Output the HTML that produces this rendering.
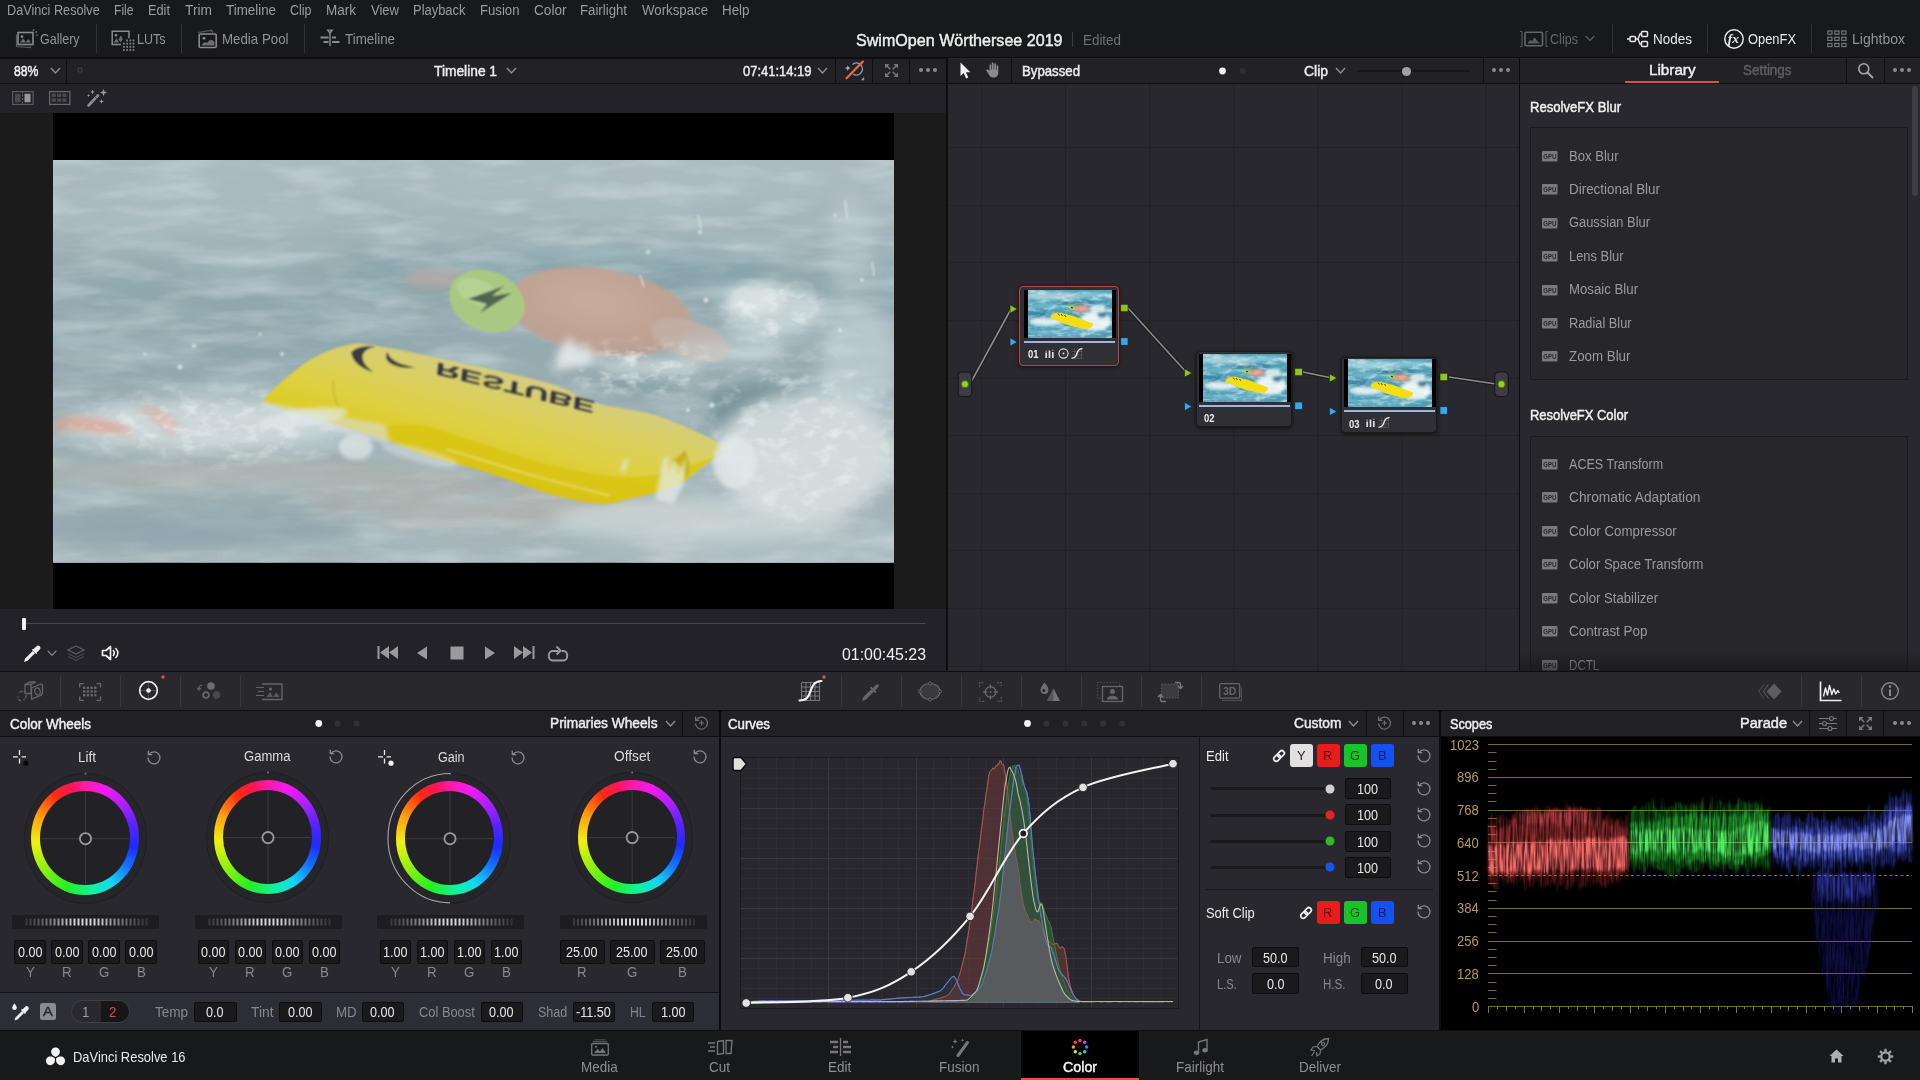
<!DOCTYPE html>
<html lang="en">
<head>
<meta charset="utf-8">
<title>DaVinci Resolve - SwimOpen Wörthersee 2019</title>
<style>
*{box-sizing:border-box;margin:0;padding:0}
html,body{width:1920px;height:1080px;overflow:hidden;background:#18191a;}
body{font-family:"Liberation Sans","DejaVu Sans",sans-serif;font-size:14px;color:#9a9a9d;position:relative;-webkit-font-smoothing:antialiased}
.abs{position:absolute}
.t{position:absolute;white-space:nowrap;line-height:20px;height:20px}
.w{color:#e6e6e6}
.b{font-weight:bold}
.vsep{position:absolute;width:1px;background:#0e0e10}
.hsep{position:absolute;height:1px;background:#0e0e10}
svg{position:absolute;overflow:visible}
.box{position:absolute;background:#18181b;border:1px solid #0c0c0e;border-radius:2px;color:#e3e3e3;text-align:center;font-size:14px;line-height:19px;height:21px}
</style>
</head>
<body><div id="app" style="position:absolute;left:0;top:0;width:1920px;height:1080px;will-change:transform">
<!-- 10_top -->
<div class="abs" style="left:0px;top:0px;width:1920px;height:57px;background:#18191a;"></div>
<div class="abs" style="left:0px;top:57px;width:1920px;height:2px;background:#0e0e11;"></div>
<div class="t" style="left:7.2px;top:0.0px;font-size:14px;color:#9c9c9e;transform:scaleX(0.905);transform-origin:0 50%;">DaVinci Resolve</div>
<div class="t" style="left:114.0px;top:0.0px;font-size:14px;color:#9c9c9e;transform:scaleX(0.864);transform-origin:0 50%;">File</div>
<div class="t" style="left:148.0px;top:0.0px;font-size:14px;color:#9c9c9e;transform:scaleX(0.912);transform-origin:0 50%;">Edit</div>
<div class="t" style="left:184.5px;top:0.0px;font-size:14px;color:#9c9c9e;transform:scaleX(0.983);transform-origin:0 50%;">Trim</div>
<div class="t" style="left:225.5px;top:0.0px;font-size:14px;color:#9c9c9e;transform:scaleX(0.955);transform-origin:0 50%;">Timeline</div>
<div class="t" style="left:290.0px;top:0.0px;font-size:14px;color:#9c9c9e;transform:scaleX(0.891);transform-origin:0 50%;">Clip</div>
<div class="t" style="left:326.0px;top:0.0px;font-size:14px;color:#9c9c9e;transform:scaleX(0.964);transform-origin:0 50%;">Mark</div>
<div class="t" style="left:370.5px;top:0.0px;font-size:14px;color:#9c9c9e;transform:scaleX(0.931);transform-origin:0 50%;">View</div>
<div class="t" style="left:413.0px;top:0.0px;font-size:14px;color:#9c9c9e;transform:scaleX(0.924);transform-origin:0 50%;">Playback</div>
<div class="t" style="left:480.0px;top:0.0px;font-size:14px;color:#9c9c9e;transform:scaleX(0.940);transform-origin:0 50%;">Fusion</div>
<div class="t" style="left:533.5px;top:0.0px;font-size:14px;color:#9c9c9e;transform:scaleX(0.971);transform-origin:0 50%;">Color</div>
<div class="t" style="left:580.0px;top:0.0px;font-size:14px;color:#9c9c9e;transform:scaleX(0.944);transform-origin:0 50%;">Fairlight</div>
<div class="t" style="left:642.0px;top:0.0px;font-size:14px;color:#9c9c9e;transform:scaleX(0.946);transform-origin:0 50%;">Workspace</div>
<div class="t" style="left:722.0px;top:0.0px;font-size:14px;color:#9c9c9e;transform:scaleX(0.955);transform-origin:0 50%;">Help</div>
<div class="t" style="left:40.3px;top:29.0px;font-size:14.5px;color:#939396;transform:scaleX(0.862);transform-origin:0 50%;">Gallery</div>
<div class="t" style="left:137.0px;top:29.0px;font-size:14.5px;color:#939396;transform:scaleX(0.863);transform-origin:0 50%;">LUTs</div>
<div class="t" style="left:222.0px;top:29.0px;font-size:14.5px;color:#939396;transform:scaleX(0.917);transform-origin:0 50%;">Media Pool</div>
<div class="t" style="left:344.5px;top:29.0px;font-size:14.5px;color:#939396;transform:scaleX(0.922);transform-origin:0 50%;">Timeline</div>
<div class="abs" style="left:96px;top:24px;width:1px;height:29px;background:#343437;"></div>
<div class="abs" style="left:181px;top:24px;width:1px;height:29px;background:#343437;"></div>
<div class="abs" style="left:304px;top:24px;width:1px;height:29px;background:#343437;"></div>
<div class="abs" style="left:1612px;top:24px;width:1px;height:29px;background:#343437;"></div>
<div class="abs" style="left:1707px;top:24px;width:1px;height:29px;background:#343437;"></div>
<div class="abs" style="left:1811px;top:24px;width:1px;height:29px;background:#343437;"></div>
<svg style="left:14px;top:28px;" width="24" height="21" viewBox="0 0 24 21"><path d="M2.5 6.5v12l14 1.2v-1.5" fill="none" stroke="#5a5a5d" stroke-width="1.2"/><rect x="4" y="4.5" width="15" height="12" fill="none" stroke="#8a8a8d" stroke-width="1.6"/><circle cx="8" cy="8.6" r="1.3" fill="#8a8a8d"/><path d="M6 14.5l3.2-4 2.6 4zM11.5 14.5l2.8-3.5 2.6 3.5z" fill="#6e6e71"/><circle cx="19.5" cy="2" r="0.9" fill="#6e6e71"/><circle cx="22.3" cy="4" r="0.9" fill="#6e6e71"/><circle cx="22.8" cy="7.2" r="0.9" fill="#5e5e61"/></svg>
<svg style="left:111px;top:30px;" width="24" height="20" viewBox="0 0 24 20"><path d="M10 14.5H1.2V1.2H18v7" fill="none" stroke="#8a8a8d" stroke-width="1.5"/><circle cx="5" cy="5.2" r="1.3" fill="#8a8a8d"/><path d="M2.8 12.5l2.6-4.2 2.6 4.2zM7.5 9.5l2.3-4 2 3.5-2 3.5z" fill="#6e6e71"/><rect x="12" y="12.7" width="1.8" height="1.8" fill="#808083"/><rect x="12" y="15.9" width="1.8" height="1.8" fill="#808083"/><rect x="12" y="19.1" width="1.8" height="1.8" fill="#808083"/><rect x="15.2" y="9.5" width="1.8" height="1.8" fill="#808083"/><rect x="15.2" y="12.7" width="1.8" height="1.8" fill="#808083"/><rect x="15.2" y="15.9" width="1.8" height="1.8" fill="#808083"/><rect x="15.2" y="19.1" width="1.8" height="1.8" fill="#808083"/><rect x="18.4" y="9.5" width="1.8" height="1.8" fill="#808083"/><rect x="18.4" y="12.7" width="1.8" height="1.8" fill="#808083"/><rect x="18.4" y="15.9" width="1.8" height="1.8" fill="#808083"/><rect x="18.4" y="19.1" width="1.8" height="1.8" fill="#808083"/><rect x="21.6" y="9.5" width="1.8" height="1.8" fill="#808083"/><rect x="21.6" y="12.7" width="1.8" height="1.8" fill="#808083"/><rect x="21.6" y="15.9" width="1.8" height="1.8" fill="#808083"/><rect x="21.6" y="19.1" width="1.8" height="1.8" fill="#808083"/></svg>
<svg style="left:196px;top:28px;" width="24" height="22" viewBox="0 0 24 22"><path d="M2 4.5l14-2.2.6 2.5" fill="none" stroke="#5a5a5d" stroke-width="1.2"/><rect x="3.2" y="6" width="17" height="13.5" rx="1" fill="none" stroke="#8a8a8d" stroke-width="1.6"/><circle cx="8" cy="10.3" r="1.4" fill="#8a8a8d"/><path d="M5.2 17.5c2-3 4-4.2 6-2.6 2-3.4 4.5-4 7.2-1v3.6z" fill="#6e6e71"/></svg>
<svg style="left:320px;top:29px;" width="20" height="20" viewBox="0 0 20 20"><path d="M10 2v15" stroke="#8a8a8d" stroke-width="1.4"/><path d="M7.6 1.2h4.8l-2.4 3z" fill="none" stroke="#8a8a8d" stroke-width="1.2"/><path d="M0.5 8.5h8M12 8.5h4M3.5 13h5M12 13h7.5" stroke="#8a8a8d" stroke-width="2.2"/></svg>
<div class="t" style="left:855.5px;top:29.5px;font-size:16.5px;color:#ededed;transform:scaleX(0.975);transform-origin:0 50%;-webkit-text-stroke:0.45px;">SwimOpen Wörthersee 2019</div>
<div class="abs" style="left:1072px;top:32px;width:1px;height:15px;background:#3a3a3d;"></div>
<div class="t" style="left:1082.5px;top:30.0px;font-size:14px;color:#707073;transform:scaleX(0.957);transform-origin:0 50%;">Edited</div>
<div class="t" style="left:1549.5px;top:29.0px;font-size:14.5px;color:#66666a;transform:scaleX(0.869);transform-origin:0 50%;">Clips</div>
<svg style="left:1519px;top:30px;" width="30" height="18" viewBox="0 0 30 18"><path d="M3 1.5v15M1 1.5h2M1 16.5h2M27 1.5v15M27 1.5h2M27 16.5h2" stroke="#58585b" stroke-width="1.2" fill="none"/><rect x="6" y="2.2" width="17.5" height="13.6" rx="1" fill="none" stroke="#66666a" stroke-width="1.6"/><path d="M8.5 13.5c2-4 3.5-4 5-2 .5-3 2-5.5 3.5-2.5s2.500 3 4 4.500z" fill="#5c5c5f"/></svg>
<svg style="left:1585px;top:35px;" width="10" height="7" viewBox="0 0 10 7"><path d="M0.7 1l4.300 4.500 4.300-4.500" fill="none" stroke="#5a5a5d" stroke-width="1.4"/></svg>
<div class="t" style="left:1652.5px;top:29.0px;font-size:14.5px;color:#e8e8e8;transform:scaleX(0.931);transform-origin:0 50%;">Nodes</div>
<svg style="left:1626px;top:29px;" width="24" height="20" viewBox="0 0 24 20"><path d="M1 10h3M9.500 10h2.500l2-5h1.500M12 10l2 5h1.500" fill="none" stroke="#e8e8e8" stroke-width="1.4"/><rect x="4" y="7.5" width="5.500" height="5" rx="1" fill="none" stroke="#e8e8e8" stroke-width="1.5"/><rect x="15.500" y="2.500" width="6" height="5" rx="1" fill="none" stroke="#e8e8e8" stroke-width="1.5"/><rect x="15.500" y="12.500" width="6" height="5" rx="1" fill="none" stroke="#e8e8e8" stroke-width="1.5"/></svg>
<div class="t" style="left:1747.5px;top:29.0px;font-size:14.5px;color:#e8e8e8;transform:scaleX(0.889);transform-origin:0 50%;">OpenFX</div>
<svg style="left:1723px;top:28px;" width="22" height="22" viewBox="0 0 22 22"><circle cx="11" cy="11" r="9.200" fill="none" stroke="#e8e8e8" stroke-width="1.500"/><text x="4.800" y="15.300" font-family="Liberation Serif,serif" font-style="italic" font-weight="bold" font-size="13.500" fill="#e8e8e8">fx</text></svg>
<div class="t" style="left:1851.5px;top:29.0px;font-size:14.5px;color:#939396;transform:scaleX(0.967);transform-origin:0 50%;">Lightbox</div>
<svg style="left:1827px;top:30px;" width="20" height="18" viewBox="0 0 20 18"><rect x="0.8" y="1" width="4.200" height="3.200" fill="none" stroke="#7e7e81" stroke-width="1.100"/><rect x="0.8" y="7.2" width="4.200" height="3.200" fill="none" stroke="#7e7e81" stroke-width="1.100"/><rect x="0.8" y="13.4" width="4.200" height="3.200" fill="none" stroke="#7e7e81" stroke-width="1.100"/><rect x="7.8" y="1" width="4.200" height="3.200" fill="none" stroke="#7e7e81" stroke-width="1.100"/><rect x="7.8" y="7.2" width="4.200" height="3.200" fill="none" stroke="#7e7e81" stroke-width="1.100"/><rect x="7.8" y="13.4" width="4.200" height="3.200" fill="none" stroke="#7e7e81" stroke-width="1.100"/><rect x="14.8" y="1" width="4.200" height="3.200" fill="none" stroke="#7e7e81" stroke-width="1.100"/><rect x="14.8" y="7.2" width="4.200" height="3.200" fill="none" stroke="#7e7e81" stroke-width="1.100"/><rect x="14.8" y="13.4" width="4.200" height="3.200" fill="none" stroke="#7e7e81" stroke-width="1.100"/></svg>
<!-- 20_viewer -->
<div class="abs" style="left:0px;top:59px;width:946px;height:612px;background:#1b1b1b;"></div>
<div class="abs" style="left:0px;top:59px;width:946px;height:24px;background:#212126;"></div>
<div class="abs" style="left:0px;top:83px;width:946px;height:1px;background:#0f0f11;"></div>
<div class="abs" style="left:0px;top:84px;width:946px;height:29px;background:#222228;"></div>
<div class="abs" style="left:53px;top:113px;width:841px;height:496px;background:#000;"></div>
<div class="abs" style="left:0px;top:609px;width:946px;height:62px;background:#222228;"></div>
<div class="abs" style="left:946px;top:59px;width:2px;height:612px;background:#0d0d10;"></div>
<div class="t" style="left:13.5px;top:60.5px;font-size:14px;color:#f0f0f0;transform:scaleX(0.874);transform-origin:0 50%;-webkit-text-stroke:0.45px;">88%</div>
<svg style="left:50px;top:67px;" width="11" height="8" viewBox="0 0 11 8"><path d="M1 1l4.500 5 4.500-5" fill="none" stroke="#8e8e92" stroke-width="1.400"/></svg>
<div class="abs" style="left:66px;top:58px;width:1px;height:25px;background:#0f0f11;"></div>
<svg style="left:76px;top:66px;" width="8" height="8" viewBox="0 0 8 8"><circle cx="4" cy="4.200" r="2" fill="none" stroke="#3c3c41" stroke-width="1.300"/></svg>
<div class="t" style="left:433.5px;top:60.5px;font-size:14px;color:#ededed;transform:scaleX(0.984);transform-origin:0 50%;-webkit-text-stroke:0.45px;">Timeline 1</div>
<svg style="left:506px;top:67px;" width="11" height="8" viewBox="0 0 11 8"><path d="M1 1l4.500 5 4.500-5" fill="none" stroke="#8e8e92" stroke-width="1.400"/></svg>
<div class="t" style="left:742.5px;top:60.5px;font-size:14px;color:#ededed;transform:scaleX(0.926);transform-origin:0 50%;-webkit-text-stroke:0.45px;">07:41:14:19</div>
<svg style="left:817px;top:67px;" width="11" height="8" viewBox="0 0 11 8"><path d="M1 1l4.500 5 4.500-5" fill="none" stroke="#8e8e92" stroke-width="1.400"/></svg>
<div class="abs" style="left:835px;top:58px;width:1px;height:25px;background:#0f0f11;"></div>
<div class="abs" style="left:872px;top:58px;width:1px;height:25px;background:#0f0f11;"></div>
<div class="abs" style="left:909px;top:58px;width:1px;height:25px;background:#0f0f11;"></div>
<svg style="left:844px;top:60px;" width="22" height="22" viewBox="0 0 22 22"><path d="M8.500 4.500a6 6 0 1 1 .5 9.500" fill="none" stroke="#9a9a9e" stroke-width="1.500"/><path d="M3.800 5.300l.8 2 2 .8-2 .8-.8 2-.8-2-2-.8 2-.8z" fill="#b0b0b4"/><path d="M2.500 18.200L18.800 1.600" stroke="#e0664c" stroke-width="2.300" stroke-linecap="round"/><path d="M20.200 16.800v3.400h-3.400z" fill="#9a9a9e"/></svg>
<svg style="left:885px;top:64px;" width="13" height="13" viewBox="0 0 13 13"><path d="M0 4.500V0h4.500zM8.500 0H13v4.500zM13 8.500V13H8.500zM4.500 13H0V8.500z" fill="#77777b"/><path d="M1.500 1.500l3.800 3.800M11.500 1.500l-3.800 3.800M11.500 11.500l-3.800-3.800M1.500 11.500l3.800-3.800" stroke="#77777b" stroke-width="1.500"/></svg>
<svg style="left:918.3px;top:67.2px;" width="20" height="6" viewBox="0 0 20 6"><circle cx="3" cy="3" r="2" fill="#8c8c90"/><circle cx="10" cy="3" r="2" fill="#8c8c90"/><circle cx="17" cy="3" r="2" fill="#8c8c90"/></svg>
<svg style="left:12px;top:91px;" width="22" height="14" viewBox="0 0 22 14"><rect x="0.600" y="0.600" width="20.500" height="12.800" fill="none" stroke="#5a5a5e" stroke-width="1.200"/><rect x="3" y="2.800" width="5.500" height="8.400" fill="#4a4a4e"/><rect x="12.500" y="2.800" width="6" height="8.400" fill="#9a9a9e"/><path d="M10.500 0v14" stroke="#6a6a6e" stroke-width="1" stroke-dasharray="2 1.500"/></svg>
<svg style="left:49px;top:91px;" width="22" height="14" viewBox="0 0 22 14"><rect x="0.600" y="0.600" width="20.300" height="12.800" fill="none" stroke="#6a6a6e" stroke-width="1.200"/><rect x="2.8" y="2.6" width="4" height="3.300" fill="#4c4c50"/><rect x="2.8" y="7.4" width="4" height="3.300" fill="#4c4c50"/><rect x="8.1" y="2.6" width="4" height="3.300" fill="#4c4c50"/><rect x="8.1" y="7.4" width="4" height="3.300" fill="#4c4c50"/><rect x="13.4" y="2.6" width="4" height="3.300" fill="#4c4c50"/><rect x="13.4" y="7.4" width="4" height="3.300" fill="#4c4c50"/></svg>
<svg style="left:86px;top:88px;" width="22" height="20" viewBox="0 0 22 20"><path d="M2.500 17.500L12 7.500" stroke="#8e8e92" stroke-width="2.600" stroke-linecap="round"/><path d="M9.500 9.300l1.300 1.300" stroke="#222226" stroke-width="1"/><path d="M17.500 1l1 2.600 2.600 1-2.600 1-1 2.600-1-2.600-2.600-1 2.600-1zM6.500 1.500l.7 1.700 1.700.7-1.700.7-.7 1.700-.7-1.700-1.700-.7 1.700-.7zM15.500 11l.7 1.700 1.700.7-1.700.7-.7 1.700-.7-1.700-1.700-.7 1.700-.7zM2.500 6l.5 1 1 .5-1 .5-.5 1-.5-1-1-.5 1-.5z" fill="#9a9a9e"/></svg>
<svg style="left:0;top:0" width="1920" height="700" viewBox="0 0 1920 700"><defs>
<filter id="b2" x="-20%" y="-20%" width="140%" height="140%"><feGaussianBlur stdDeviation="2"/></filter>
<filter id="b4" x="-30%" y="-30%" width="160%" height="160%"><feGaussianBlur stdDeviation="4"/></filter>
<filter id="b8" x="-40%" y="-40%" width="180%" height="180%"><feGaussianBlur stdDeviation="8"/></filter>
<filter id="b14" x="-50%" y="-50%" width="200%" height="200%"><feGaussianBlur stdDeviation="14"/></filter>
<filter id="b1" x="-10%" y="-10%" width="120%" height="120%"><feGaussianBlur stdDeviation="0.900"/></filter>
<filter id="nz" x="0" y="0" width="100%" height="100%"><feTurbulence type="fractalNoise" baseFrequency="0.010 0.045" numOctaves="4" seed="11"/><feColorMatrix values="0 0 0 0 0.40  0 0 0 0 0.52  0 0 0 0 0.56  1.6 0 0 0 -0.62"/></filter>
<filter id="nz2" x="0" y="0" width="100%" height="100%"><feTurbulence type="fractalNoise" baseFrequency="0.014 0.06" numOctaves="3" seed="5"/><feColorMatrix values="0 0 0 0 0.80  0 0 0 0 0.86  0 0 0 0 0.87  1.8 0 0 0 -0.80"/></filter>
<filter id="foam" x="0" y="0" width="100%" height="100%"><feTurbulence type="fractalNoise" baseFrequency="0.05 0.08" numOctaves="3" seed="9"/><feColorMatrix values="0 0 0 0 0.90  0 0 0 0 0.93  0 0 0 0 0.93  3.2 0 0 0 -1.55"/></filter>
<linearGradient id="wg" x1="0" y1="0" x2="0" y2="1"><stop offset="0" stop-color="#adbbbe"/><stop offset="0.18" stop-color="#a3b4b9"/><stop offset="0.32" stop-color="#93a9af"/><stop offset="0.55" stop-color="#98acb2"/><stop offset="0.8" stop-color="#a2b2b6"/><stop offset="1" stop-color="#a9b7ba"/></linearGradient>
<linearGradient id="yg" gradientUnits="userSpaceOnUse" x1="520" y1="370" x2="490" y2="480"><stop offset="0" stop-color="#d3cd84"/><stop offset="0.25" stop-color="#d9cf68"/><stop offset="0.6" stop-color="#dfd042"/><stop offset="0.85" stop-color="#dccb22"/><stop offset="1" stop-color="#c8b71e"/></linearGradient>
<radialGradient id="sk" cx="0.45" cy="0.4" r="0.65"><stop offset="0" stop-color="#c9ab9a"/><stop offset="0.7" stop-color="#bfa293"/><stop offset="1" stop-color="#b3a29a"/></radialGradient>
<clipPath id="pc"><rect x="53" y="160" width="841" height="402.700"/></clipPath>
<radialGradient id="fm"><stop offset="0" stop-color="#fff"/><stop offset="0.6" stop-color="#fff" stop-opacity="0.7"/><stop offset="1" stop-color="#fff" stop-opacity="0"/></radialGradient><mask id="fc2"><ellipse cx="215" cy="425" rx="175" ry="48" fill="url(#fm)"/></mask><mask id="fc3"><ellipse cx="640" cy="368" rx="100" ry="34" fill="url(#fm)"/></mask><mask id="fc4"><ellipse cx="775" cy="312" rx="62" ry="38" fill="url(#fm)"/></mask><mask id="fc1"><ellipse cx="800" cy="440" rx="120" ry="105" fill="url(#fm)"/></mask>
</defs>
<g clip-path="url(#pc)">
<rect x="53" y="160" width="841" height="403" fill="url(#wg)"/>
<g filter="url(#b14)">
<ellipse cx="560" cy="272" rx="230" ry="16" fill="#7c9fa6" opacity="0.850"/>
<ellipse cx="800" cy="290" rx="110" ry="18" fill="#86a3a9" opacity="0.600"/>
<ellipse cx="240" cy="300" rx="190" ry="22" fill="#8da6ad" opacity="0.700"/>
<ellipse cx="180" cy="215" rx="150" ry="14" fill="#b4c1c4" opacity="0.600"/>
<ellipse cx="640" cy="185" rx="260" ry="14" fill="#b2bfc2" opacity="0.600"/>
<ellipse cx="240" cy="360" rx="170" ry="18" fill="#8aa3aa" opacity="0.700"/>
<ellipse cx="220" cy="520" rx="190" ry="26" fill="#93a8af" opacity="0.750"/>
<ellipse cx="470" cy="500" rx="170" ry="22" fill="#b3b1ab" opacity="0.700"/>
<ellipse cx="760" cy="540" rx="150" ry="20" fill="#b5c2c4" opacity="0.700"/>
</g>
<rect x="53" y="160" width="841" height="403" filter="url(#nz)"/>
<rect x="53" y="160" width="841" height="403" filter="url(#nz2)" opacity="0.450"/>
<g filter="url(#b8)"><ellipse cx="250" cy="474" rx="240" ry="13" fill="#b3b2ac" opacity="0.550"/><ellipse cx="560" cy="512" rx="180" ry="12" fill="#b4b3ae" opacity="0.500"/><ellipse cx="180" cy="530" rx="170" ry="16" fill="#8da4ac" opacity="0.700"/></g>
<!-- dark water patches -->
<g filter="url(#b8)">
<ellipse cx="760" cy="410" rx="55" ry="30" fill="#6f8c93" opacity="0.850"/>
<ellipse cx="640" cy="380" rx="40" ry="14" fill="#7d999f" opacity="0.600"/>
<ellipse cx="330" cy="430" rx="50" ry="10" fill="#7f979d" opacity="0.600"/>
<ellipse cx="560" cy="470" rx="90" ry="9" fill="#7c969c" opacity="0.500"/>
</g>
<!-- swimmer -->
<g filter="url(#b4)">
<ellipse cx="435" cy="279" rx="30" ry="11" fill="#b4a7a2" opacity="0.750"/>
</g>
<g filter="url(#b2)">
<ellipse cx="600" cy="312" rx="93" ry="43" fill="url(#sk)" transform="rotate(9 600 312)"/>
<ellipse cx="690" cy="340" rx="40" ry="19" fill="#c2b0a8" opacity="0.850" transform="rotate(18 690 340)"/>
</g>
<g filter="url(#b1)">
<ellipse cx="487" cy="301" rx="39" ry="30" fill="#a9c983" transform="rotate(22 487 301)"/>
<ellipse cx="478" cy="292" rx="22" ry="12" fill="#b9d597" transform="rotate(22 478 292)" opacity="0.800"/>
<path d="M468 299l36-13-12 10 20-3-32 20 7-9z" fill="#3b4843" opacity="0.800"/>
</g>
<!-- splashes behind tube -->
<g filter="url(#b8)" fill="#d6dfe0">
<ellipse cx="805" cy="455" rx="90" ry="62" opacity="0.900"/>
<ellipse cx="772" cy="310" rx="50" ry="26" opacity="0.750"/>
<ellipse cx="730" cy="352" rx="60" ry="12" opacity="0.500"/>
<ellipse cx="850" cy="250" rx="22" ry="55" opacity="0.300"/>
<ellipse cx="215" cy="425" rx="150" ry="26" opacity="0.800"/>
<ellipse cx="700" cy="520" rx="150" ry="22" opacity="0.600"/>
<ellipse cx="860" cy="360" rx="40" ry="50" opacity="0.500"/>
</g>
<g filter="url(#b4)">
<ellipse cx="576" cy="356" rx="20" ry="11" fill="#dde5e6" opacity="0.800"/>
<ellipse cx="650" cy="368" rx="50" ry="9" fill="#d5dedf" opacity="0.650"/>
<path d="M553 372l10-28 8-8 3 10-6 12 14-6 10 10z" fill="#e4eaea" opacity="0.850"/>
<path d="M56 420c25-5 50 0 75 8l-6 7c-28-5-50-7-70-5z" fill="#e2967e" opacity="0.750"/>
<path d="M137 408c12-4 30 4 44 20l-12 6c-10-12-22-20-32-26z" fill="#e2a08c" opacity="0.600"/>
<ellipse cx="755" cy="300" rx="28" ry="14" fill="#e1e8e8" opacity="0.700"/>
</g>
<rect x="690" y="345" width="203" height="190" filter="url(#foam)" mask="url(#fc1)" opacity="0.600"/>
<rect x="53" y="375" width="360" height="105" filter="url(#foam)" mask="url(#fc2)" opacity="0.600"/>
<rect x="530" y="325" width="220" height="90" filter="url(#foam)" mask="url(#fc3)" opacity="0.750"/>
<rect x="705" y="265" width="140" height="95" filter="url(#foam)" mask="url(#fc4)" opacity="0.700"/>
<!-- tube -->
<g filter="url(#b1)">
<path d="M264.0 400.5C266.2 396.8 273.3 389.0 281.5 382.0C289.7 375.0 302.0 364.5 313.0 358.3C324.0 352.1 337.1 347.1 347.6 345.0C358.1 342.9 358.2 342.9 376.0 345.7C393.8 348.4 425.6 355.2 454.6 361.5C483.6 367.8 526.6 376.6 550.0 383.5C573.4 390.4 577.8 397.6 594.7 402.7C611.6 407.8 634.4 409.1 651.4 414.0C668.4 418.9 685.4 426.9 696.8 432.0C708.1 437.1 716.3 440.6 719.5 444.6C722.7 448.6 719.8 451.6 716.0 456.0C712.2 460.4 704.0 465.8 697.0 471.0C690.0 476.2 685.2 482.4 674.0 487.0C662.8 491.6 642.3 495.8 630.0 498.5C617.7 501.2 613.3 504.2 600.0 503.5C586.7 502.8 569.0 499.2 550.0 494.0C531.0 488.8 507.2 478.6 486.0 472.0C464.8 465.4 439.3 459.7 423.0 454.5C406.7 449.3 400.2 445.2 388.0 441.0C375.8 436.8 363.0 433.0 350.0 429.0C337.0 425.0 323.7 421.2 310.0 417.0C296.3 412.8 275.7 406.8 268.0 404.0C260.3 401.2 261.8 404.2 264.0 400.5Z" fill="url(#yg)"/>
<path d="M385.0 429.5C385.5 434.2 406.2 445.9 423.0 453.0C439.8 460.1 464.8 465.2 486.0 472.0C507.2 478.8 531.0 488.8 550.0 494.0C569.0 499.2 586.7 502.8 600.0 503.5C613.3 504.2 617.7 501.2 630.0 498.5C642.3 495.8 662.8 491.6 674.0 487.0C685.2 482.4 690.0 476.2 697.0 471.0C704.0 465.8 715.5 457.5 716.0 456.0C716.5 454.5 709.3 459.0 700.0 462.0C690.7 465.0 675.0 471.7 660.0 474.0C645.0 476.3 630.0 478.0 610.0 476.0C590.0 474.0 563.3 468.0 540.0 462.0C516.7 456.0 490.0 446.2 470.0 440.0C450.0 433.8 434.2 426.8 420.0 425.0C405.8 423.2 384.5 424.8 385.0 429.5Z" fill="#d9c410" opacity="0.800"/>
<path d="M446 449l88 27 75 19.500" fill="none" stroke="#e9e07a" stroke-width="1.500" opacity="0.800"/>
<path d="M684 450c6 8 8 18 2 30-2-10-6-16-14-20 6-2 10-5 12-10z" fill="#c2ad12" opacity="0.900"/>
<path d="M351.500 352c5-5 14-7 24-5-8 1-13 5-13 10 0 5 4 10 11 15-12-3-21-10-22.500-20zM387.500 352c2 7 9 12 27.500 15.500-12 1.500-24-1-28.500-8-1-3-.5-5.500 1-7.500z" fill="#3a3a44"/>
<path d="M333 380c0 14 2 22 6 28" stroke="#c6b52a" stroke-width="2" fill="none" opacity="0.700"/>
</g>
<g transform="translate(438 362.500) rotate(13.900)" filter="url(#b1)"><text x="0" y="0" transform="scale(1 -1) skewX(14)" font-family="Liberation Sans,sans-serif" font-weight="bold" font-style="italic" font-size="17.500" fill="#33333c" textLength="164" lengthAdjust="spacingAndGlyphs">RESTUBE</text></g>
<!-- foreground splashes -->
<path d="M262 401l52 10 72 14 4 20-40-10-44-14-46-14z" fill="#d9dfdc" opacity="0.620" filter="url(#b2)"/>
<g filter="url(#b2)" fill="#e3e9e9">
<ellipse cx="356" cy="447" rx="17" ry="13" opacity="0.700"/>
<ellipse cx="303" cy="418" rx="45" ry="9" opacity="0.650" transform="rotate(-8 303 418)"/>
<path d="M655 500l8-40 6-6-2 20 8-14 2 14 10-18-4 30-10 18z" opacity="0.750"/>
<path d="M620 470l6-12 3 2-5 13z" opacity="0.800"/>
<ellipse cx="735" cy="462" rx="22" ry="26" opacity="0.700"/>
<ellipse cx="420" cy="455" rx="40" ry="7" opacity="0.450" transform="rotate(14 420 455)"/>
</g>
<g fill="#e8eded" opacity="0.750" filter="url(#b1)">
<circle cx="194" cy="346" r="2"/><circle cx="145" cy="354" r="1.500"/><circle cx="180" cy="367" r="2.500"/><circle cx="260" cy="334" r="1.500"/><circle cx="282" cy="354" r="2"/>
<circle cx="648" cy="252" r="2"/><circle cx="700" cy="232" r="2"/><circle cx="706" cy="300" r="2.500"/><circle cx="835" cy="215" r="1.500"/><circle cx="862" cy="280" r="2"/><circle cx="840" cy="330" r="2"/><circle cx="688" cy="410" r="2"/><circle cx="712" cy="405" r="2.500"/>
<path d="M698 215l3 14M845 200l2 18M872 262l2 14M640 275l4 12" stroke="#e8eded" stroke-width="1.500"/>
</g>
</g></svg>
<div class="abs" style="left:25px;top:622.5px;width:900px;height:1.5px;background:#48484d;"></div>
<div class="abs" style="left:21.5px;top:617.5px;width:4px;height:12px;background:#f2f2f2;border-radius:1px;"></div>
<!-- 30_nodes -->
<div class="abs" style="left:948px;top:58px;width:571px;height:613px;background:#28282e;"></div>
<svg style="left:0px;top:0px;" width="1920" height="700" viewBox="0 0 1920 700"><path d="M981.5 84V671" stroke="#222227" stroke-width="1"/><path d="M1065.6 84V671" stroke="#222227" stroke-width="1"/><path d="M1149.7 84V671" stroke="#222227" stroke-width="1"/><path d="M1233.8 84V671" stroke="#222227" stroke-width="1"/><path d="M1317.9 84V671" stroke="#222227" stroke-width="1"/><path d="M1402 84V671" stroke="#222227" stroke-width="1"/><path d="M1486.1 84V671" stroke="#222227" stroke-width="1"/><path d="M948 147.5H1519" stroke="#222227" stroke-width="1"/><path d="M948 205.5H1519" stroke="#222227" stroke-width="1"/><path d="M948 262.5H1519" stroke="#222227" stroke-width="1"/><path d="M948 320.5H1519" stroke="#222227" stroke-width="1"/><path d="M948 378.5H1519" stroke="#222227" stroke-width="1"/><path d="M948 435.5H1519" stroke="#222227" stroke-width="1"/><path d="M948 493.5H1519" stroke="#222227" stroke-width="1"/><path d="M948 550.5H1519" stroke="#222227" stroke-width="1"/><path d="M948 608.5H1519" stroke="#222227" stroke-width="1"/><path d="M948 666.5H1519" stroke="#222227" stroke-width="1"/></svg>
<div class="abs" style="left:948px;top:59px;width:571px;height:24px;background:#212126;"></div>
<div class="abs" style="left:948px;top:83px;width:571px;height:1px;background:#0f0f11;"></div>
<div class="abs" style="left:1519px;top:58px;width:1px;height:613px;background:#0c0c0e;"></div>
<div class="abs" style="left:1011px;top:58px;width:1px;height:25px;background:#0f0f11;"></div>
<div class="abs" style="left:1483px;top:58px;width:1px;height:25px;background:#0f0f11;"></div>
<svg style="left:960px;top:62px;" width="12" height="18" viewBox="0 0 12 18"><path d="M0.500 0.500v13.500l3.200-3 2.400 5.600 2.200-1-2.400-5.400h4.400z" fill="#f2f2f2"/></svg>
<svg style="left:985px;top:62px;" width="17" height="16" viewBox="0 0 17 16"><path d="M4.500 8.500V3.200c0-1.300 1.700-1.300 1.700 0V7.500h.6V1.600c0-1.400 1.800-1.400 1.800 0V7.500h.6V2.400c0-1.400 1.800-1.400 1.800 0V8h.6V4.300c0-1.300 1.700-1.300 1.700 0v6.200c0 3.500-1.800 5-4.800 5-2.600 0-3.600-1-4.800-3.200L1.500 8.700c-.6-1.100.7-2 1.500-1z" fill="#8a8a8e"/></svg>
<div class="t" style="left:1022.1px;top:60.5px;font-size:14px;color:#ededed;transform:scaleX(0.943);transform-origin:0 50%;-webkit-text-stroke:0.45px;">Bypassed</div>
<svg style="left:1218px;top:66.5px;" width="30" height="8" viewBox="0 0 30 8"><circle cx="4.500" cy="4" r="3.400" fill="#f4f4f4"/><circle cx="24.500" cy="4" r="3" fill="#2f2f34"/></svg>
<div class="t" style="left:1303.5px;top:60.5px;font-size:14px;color:#ededed;transform:scaleX(0.995);transform-origin:0 50%;-webkit-text-stroke:0.45px;">Clip</div>
<svg style="left:1335px;top:67px;" width="11" height="8" viewBox="0 0 11 8"><path d="M1 1l4.500 5 4.500-5" fill="none" stroke="#8e8e92" stroke-width="1.400"/></svg>
<div class="abs" style="left:1357px;top:69.5px;width:113px;height:2px;background:#17171a;border-radius:1px;"></div>
<svg style="left:1401px;top:65.5px;" width="11" height="11" viewBox="0 0 11 11"><circle cx="5.500" cy="5.500" r="4.600" fill="#a0a0a4"/></svg>
<svg style="left:1491.2px;top:67.2px;" width="20" height="6" viewBox="0 0 20 6"><circle cx="3" cy="3" r="2" fill="#8c8c90"/><circle cx="10" cy="3" r="2" fill="#8c8c90"/><circle cx="17" cy="3" r="2" fill="#8c8c90"/></svg>
<svg style="left:0px;top:0px;" width="1920" height="700" viewBox="0 0 1920 700"><defs><clipPath id="tc"><rect x="4" y="0" width="84" height="48"/></clipPath><filter id="tb" x="-20%" y="-20%" width="140%" height="140%"><feGaussianBlur stdDeviation="1.400"/></filter><filter id="tb2" x="-10%" y="-10%" width="120%" height="120%"><feGaussianBlur stdDeviation="0.350"/></filter><filter id="tf" x="0" y="0" width="100%" height="100%"><feTurbulence type="fractalNoise" baseFrequency="0.09 0.22" numOctaves="3" seed="8"/><feColorMatrix values="0 0 0 0 0.93  0 0 0 0 0.97  0 0 0 0 0.98  3 0 0 0 -1.35"/></filter></defs><path d="M970 384L1011 309" stroke="#1a1a1d" stroke-width="3.500"/><path d="M970 384L1011 309" stroke="#8c8c8c" stroke-width="1.600"/><path d="M1128 308L1187 373" stroke="#1a1a1d" stroke-width="3.500"/><path d="M1128 308L1187 373" stroke="#8c8c8c" stroke-width="1.600"/><path d="M1303 372L1332 378" stroke="#1a1a1d" stroke-width="3.500"/><path d="M1303 372L1332 378" stroke="#8c8c8c" stroke-width="1.600"/><path d="M1449 377L1496 384" stroke="#1a1a1d" stroke-width="3.500"/><path d="M1449 377L1496 384" stroke="#8c8c8c" stroke-width="1.600"/><rect x="958.25" y="372" width="13.500" height="24.500" rx="3.500" fill="#3c3c42" stroke="#151518" stroke-width="1"/><circle cx="965" cy="384.200" r="3.600" fill="#9bd019" stroke="#3c5a10" stroke-width="0.800"/><rect x="1494.75" y="372" width="13.500" height="24.500" rx="3.500" fill="#3c3c42" stroke="#151518" stroke-width="1"/><circle cx="1501.5" cy="384.200" r="3.600" fill="#9bd019" stroke="#3c5a10" stroke-width="0.800"/><path d="M1010 304.8l7.500 4.200-7.500 4.200z" fill="#93c516" stroke="#1a1a1d" stroke-width="0.600"/><path d="M1010 337.8l7.500 4.200-7.500 4.200z" fill="#35a8ee" stroke="#1a1a1d" stroke-width="0.600"/><rect x="1120.5" y="304.25" width="7.500" height="7.500" fill="#93c516" stroke="#1a1a1d" stroke-width="0.600"/><rect x="1120.5" y="337.75" width="7.500" height="7.500" fill="#35a8ee" stroke="#1a1a1d" stroke-width="0.600"/><path d="M1184.5 368.8l7.500 4.200-7.500 4.200z" fill="#93c516" stroke="#1a1a1d" stroke-width="0.600"/><path d="M1184.5 402.3l7.500 4.200-7.500 4.200z" fill="#35a8ee" stroke="#1a1a1d" stroke-width="0.600"/><rect x="1294.8" y="368.25" width="7.500" height="7.500" fill="#93c516" stroke="#1a1a1d" stroke-width="0.600"/><rect x="1294.8" y="402.05" width="7.500" height="7.500" fill="#35a8ee" stroke="#1a1a1d" stroke-width="0.600"/><path d="M1329.5 373.8l7.500 4.200-7.500 4.200z" fill="#93c516" stroke="#1a1a1d" stroke-width="0.600"/><path d="M1329.5 407.3l7.500 4.200-7.500 4.200z" fill="#35a8ee" stroke="#1a1a1d" stroke-width="0.600"/><rect x="1440" y="373.25" width="7.500" height="7.500" fill="#93c516" stroke="#1a1a1d" stroke-width="0.600"/><rect x="1440" y="406.75" width="7.500" height="7.500" fill="#35a8ee" stroke="#1a1a1d" stroke-width="0.600"/></svg>
<div class="abs" style="left:1019px;top:285.5px;width:100px;height:80px;background:#2f2f35;border:1.500px solid #b4483d;border-radius:4px;box-shadow:0 1px 4px rgba(0,0,0,.6);"></div>
<svg style="left:1023.5px;top:289.5px" width="92" height="48" viewBox="0 0 92 48" preserveAspectRatio="none"><rect width="92" height="48" fill="#000"/>
<g clip-path="url(#tc)"><rect x="4" y="0" width="84" height="48" fill="#4b9cb5"/>
<g filter="url(#tb)"><ellipse cx="30" cy="6" rx="34" ry="4" fill="#9ccfda"/><ellipse cx="70" cy="5" rx="22" ry="3" fill="#86c3d2"/><ellipse cx="24" cy="16" rx="22" ry="3" fill="#6db4c8"/><ellipse cx="20" cy="24" rx="18" ry="3" fill="#3a88a4"/><ellipse cx="52" cy="13" rx="20" ry="2.500" fill="#2f7f99"/><ellipse cx="72" cy="31" rx="15" ry="10" fill="#e6f1f3"/><ellipse cx="74" cy="19" rx="8" ry="4" fill="#d4e8ec"/><ellipse cx="22" cy="32" rx="17" ry="4" fill="#dcebee"/><ellipse cx="40" cy="43" rx="32" ry="4" fill="#63adc2"/><ellipse cx="78" cy="25" rx="5" ry="3" fill="#3a7f96"/><ellipse cx="57" cy="19" rx="8.500" ry="3.600" fill="#e99c80"/><ellipse cx="47.500" cy="17.500" rx="3.600" ry="2.800" fill="#9fd86a"/></g>
<rect x="4" y="0" width="84" height="48" filter="url(#tf)" opacity="0.550"/>
<path d="M26.500 27c1-2.500 4.500-4.500 8-4.500l14 3.200 20 7.500c1.500 2-1 5-6 6l-15-3-17-6.500c-3-1-4-1.500-4-2.700z" fill="#f3de12" filter="url(#tb2)"/><path d="M34 23.500l1.500 2M37 24l1.500 2M40.500 25l1.200 1.800" stroke="#3a3a30" stroke-width="0.900"/><path d="M47 17.200l2 .8" stroke="#233" stroke-width="1.200"/></g></svg>
<div class="abs" style="left:1023.5px;top:340.5px;width:91px;height:2px;background:#9fb6e0;"></div>
<div class="t" style="left:1028.0px;top:344.0px;font-size:11px;color:#ececec;font-weight:bold;transform:scaleX(0.858);transform-origin:0 50%;">01</div>
<svg style="left:1045px;top:348.5px;" width="9" height="9" viewBox="0 0 9 9"><path d="M1.200 9V3.500M4.500 9V1.500M7.800 9V3" stroke="#e0e0e0" stroke-width="1.700"/><path d="M1.200 1.800v.6M7.800 .8v.8" stroke="#e0e0e0" stroke-width="1.400"/></svg>
<svg style="left:1057.5px;top:347.5px;" width="11" height="11" viewBox="0 0 11 11"><circle cx="5.500" cy="5.500" r="4.600" fill="none" stroke="#e0e0e0" stroke-width="1.100"/><circle cx="5.500" cy="5.500" r="1" fill="#e0e0e0"/></svg>
<svg style="left:1070.5px;top:347.5px;" width="12" height="11" viewBox="0 0 12 11"><path d="M0.500 10.500h11M0.500 7h11M0.500 3.500h11M3.500 0v10.500M7 0v10.500M10.500 0v10.500" stroke="#6a6a6e" stroke-width="0.500"/><path d="M0.500 10.200c4 0 4.500-2 5.500-5s2-4.600 5.500-4.600" fill="none" stroke="#f0f0f0" stroke-width="1.300"/></svg>
<div class="abs" style="left:1196px;top:351px;width:96px;height:76px;background:#2f2f35;border:1px solid #1a1a1d;border-radius:4px;box-shadow:0 1px 4px rgba(0,0,0,.6);"></div>
<svg style="left:1199px;top:353.5px" width="92" height="48" viewBox="0 0 92 48" preserveAspectRatio="none"><rect width="92" height="48" fill="#000"/>
<g clip-path="url(#tc)"><rect x="4" y="0" width="84" height="48" fill="#4b9cb5"/>
<g filter="url(#tb)"><ellipse cx="30" cy="6" rx="34" ry="4" fill="#9ccfda"/><ellipse cx="70" cy="5" rx="22" ry="3" fill="#86c3d2"/><ellipse cx="24" cy="16" rx="22" ry="3" fill="#6db4c8"/><ellipse cx="20" cy="24" rx="18" ry="3" fill="#3a88a4"/><ellipse cx="52" cy="13" rx="20" ry="2.500" fill="#2f7f99"/><ellipse cx="72" cy="31" rx="15" ry="10" fill="#e6f1f3"/><ellipse cx="74" cy="19" rx="8" ry="4" fill="#d4e8ec"/><ellipse cx="22" cy="32" rx="17" ry="4" fill="#dcebee"/><ellipse cx="40" cy="43" rx="32" ry="4" fill="#63adc2"/><ellipse cx="78" cy="25" rx="5" ry="3" fill="#3a7f96"/><ellipse cx="57" cy="19" rx="8.500" ry="3.600" fill="#e99c80"/><ellipse cx="47.500" cy="17.500" rx="3.600" ry="2.800" fill="#9fd86a"/></g>
<rect x="4" y="0" width="84" height="48" filter="url(#tf)" opacity="0.550"/>
<path d="M26.500 27c1-2.500 4.500-4.500 8-4.500l14 3.200 20 7.500c1.500 2-1 5-6 6l-15-3-17-6.500c-3-1-4-1.500-4-2.700z" fill="#f3de12" filter="url(#tb2)"/><path d="M34 23.500l1.500 2M37 24l1.500 2M40.500 25l1.200 1.800" stroke="#3a3a30" stroke-width="0.900"/><path d="M47 17.200l2 .8" stroke="#233" stroke-width="1.200"/></g></svg>
<div class="abs" style="left:1199px;top:404.5px;width:91px;height:2px;background:#9fb6e0;"></div>
<div class="t" style="left:1203.5px;top:408.0px;font-size:11px;color:#ececec;font-weight:bold;transform:scaleX(0.858);transform-origin:0 50%;">02</div>
<div class="abs" style="left:1341px;top:356.5px;width:96px;height:76px;background:#2f2f35;border:1px solid #1a1a1d;border-radius:4px;box-shadow:0 1px 4px rgba(0,0,0,.6);"></div>
<svg style="left:1344px;top:359px" width="92" height="48" viewBox="0 0 92 48" preserveAspectRatio="none"><rect width="92" height="48" fill="#000"/>
<g clip-path="url(#tc)"><rect x="4" y="0" width="84" height="48" fill="#4b9cb5"/>
<g filter="url(#tb)"><ellipse cx="30" cy="6" rx="34" ry="4" fill="#9ccfda"/><ellipse cx="70" cy="5" rx="22" ry="3" fill="#86c3d2"/><ellipse cx="24" cy="16" rx="22" ry="3" fill="#6db4c8"/><ellipse cx="20" cy="24" rx="18" ry="3" fill="#3a88a4"/><ellipse cx="52" cy="13" rx="20" ry="2.500" fill="#2f7f99"/><ellipse cx="72" cy="31" rx="15" ry="10" fill="#e6f1f3"/><ellipse cx="74" cy="19" rx="8" ry="4" fill="#d4e8ec"/><ellipse cx="22" cy="32" rx="17" ry="4" fill="#dcebee"/><ellipse cx="40" cy="43" rx="32" ry="4" fill="#63adc2"/><ellipse cx="78" cy="25" rx="5" ry="3" fill="#3a7f96"/><ellipse cx="57" cy="19" rx="8.500" ry="3.600" fill="#e99c80"/><ellipse cx="47.500" cy="17.500" rx="3.600" ry="2.800" fill="#9fd86a"/></g>
<rect x="4" y="0" width="84" height="48" filter="url(#tf)" opacity="0.550"/>
<path d="M26.500 27c1-2.500 4.500-4.500 8-4.500l14 3.200 20 7.500c1.500 2-1 5-6 6l-15-3-17-6.500c-3-1-4-1.500-4-2.700z" fill="#f3de12" filter="url(#tb2)"/><path d="M34 23.500l1.500 2M37 24l1.500 2M40.500 25l1.200 1.800" stroke="#3a3a30" stroke-width="0.900"/><path d="M47 17.200l2 .8" stroke="#233" stroke-width="1.200"/></g></svg>
<div class="abs" style="left:1344px;top:410px;width:91px;height:2px;background:#9fb6e0;"></div>
<div class="t" style="left:1348.5px;top:413.5px;font-size:11px;color:#ececec;font-weight:bold;transform:scaleX(0.858);transform-origin:0 50%;">03</div>
<svg style="left:1365.5px;top:418px;" width="9" height="9" viewBox="0 0 9 9"><path d="M1.200 9V3.500M4.500 9V1.500M7.800 9V3" stroke="#e0e0e0" stroke-width="1.700"/><path d="M1.200 1.800v.6M7.800 .8v.8" stroke="#e0e0e0" stroke-width="1.400"/></svg>
<svg style="left:1378px;top:417px;" width="12" height="11" viewBox="0 0 12 11"><path d="M0.500 10.500h11M0.500 7h11M0.500 3.500h11M3.500 0v10.500M7 0v10.500M10.500 0v10.500" stroke="#6a6a6e" stroke-width="0.500"/><path d="M0.500 10.200c4 0 4.500-2 5.500-5s2-4.600 5.500-4.600" fill="none" stroke="#f0f0f0" stroke-width="1.300"/></svg>
<!-- 40_fx -->
<div class="abs" style="left:1520px;top:58px;width:400px;height:613px;background:#28282e;"></div>
<div class="abs" style="left:1520px;top:59px;width:400px;height:24px;background:#212126;"></div>
<div class="abs" style="left:1520px;top:83px;width:400px;height:1px;background:#0f0f11;"></div>
<div class="t" style="left:1648.5px;top:60.0px;font-size:14px;color:#ededed;transform:scaleX(1.087);transform-origin:0 50%;-webkit-text-stroke:0.45px;">Library</div>
<div class="abs" style="left:1625px;top:80.5px;width:94px;height:2px;background:#e0503c;"></div>
<div class="t" style="left:1743.0px;top:60.0px;font-size:14px;color:#5f5f63;transform:scaleX(0.959);transform-origin:0 50%;-webkit-text-stroke:0.45px;">Settings</div>
<div class="abs" style="left:1846px;top:58px;width:1px;height:25px;background:#0f0f11;"></div>
<div class="abs" style="left:1884px;top:58px;width:1px;height:25px;background:#0f0f11;"></div>
<svg style="left:1857px;top:62px;" width="17" height="17" viewBox="0 0 17 17"><circle cx="6.800" cy="6.800" r="5" fill="none" stroke="#a8a8ac" stroke-width="1.600"/><path d="M10.500 10.500l5 5" stroke="#a8a8ac" stroke-width="1.800" stroke-linecap="round"/></svg>
<svg style="left:1892px;top:67.2px;" width="20" height="6" viewBox="0 0 20 6"><circle cx="3" cy="3" r="2" fill="#8c8c90"/><circle cx="10" cy="3" r="2" fill="#8c8c90"/><circle cx="17" cy="3" r="2" fill="#8c8c90"/></svg>
<div class="abs" style="left:1911.5px;top:86px;width:6.5px;height:110px;background:#3e3e44;border-radius:3px;"></div>
<div class="t" style="left:1530.0px;top:96.5px;font-size:14px;color:#f0f0f0;transform:scaleX(0.936);transform-origin:0 50%;-webkit-text-stroke:0.45px;">ResolveFX Blur</div>
<div class="abs" style="left:1530px;top:127px;width:378px;height:253px;background:#26262b;border:1px solid #1a1a1e;"></div>
<svg style="left:1542px;top:150.7px;" width="16" height="11" viewBox="0 0 16 11"><rect x="0" y="0" width="15.500" height="10.500" rx="1" fill="#7a7a7e"/><text x="7.750" y="8.300" text-anchor="middle" font-family="Liberation Sans,sans-serif" font-weight="bold" font-size="7.500" fill="#26262b" textLength="13" lengthAdjust="spacingAndGlyphs">GPU</text></svg>
<div class="t" style="left:1569.0px;top:145.5px;font-size:14px;color:#9b9b9f;transform:scaleX(0.936);transform-origin:0 50%;">Box Blur</div>
<svg style="left:1542px;top:184.15px;" width="16" height="11" viewBox="0 0 16 11"><rect x="0" y="0" width="15.500" height="10.500" rx="1" fill="#7a7a7e"/><text x="7.750" y="8.300" text-anchor="middle" font-family="Liberation Sans,sans-serif" font-weight="bold" font-size="7.500" fill="#26262b" textLength="13" lengthAdjust="spacingAndGlyphs">GPU</text></svg>
<div class="t" style="left:1569.0px;top:178.9px;font-size:14px;color:#9b9b9f;transform:scaleX(0.959);transform-origin:0 50%;">Directional Blur</div>
<svg style="left:1542px;top:217.6px;" width="16" height="11" viewBox="0 0 16 11"><rect x="0" y="0" width="15.500" height="10.500" rx="1" fill="#7a7a7e"/><text x="7.750" y="8.300" text-anchor="middle" font-family="Liberation Sans,sans-serif" font-weight="bold" font-size="7.500" fill="#26262b" textLength="13" lengthAdjust="spacingAndGlyphs">GPU</text></svg>
<div class="t" style="left:1569.0px;top:212.4px;font-size:14px;color:#9b9b9f;transform:scaleX(0.921);transform-origin:0 50%;">Gaussian Blur</div>
<svg style="left:1542px;top:251.05px;" width="16" height="11" viewBox="0 0 16 11"><rect x="0" y="0" width="15.500" height="10.500" rx="1" fill="#7a7a7e"/><text x="7.750" y="8.300" text-anchor="middle" font-family="Liberation Sans,sans-serif" font-weight="bold" font-size="7.500" fill="#26262b" textLength="13" lengthAdjust="spacingAndGlyphs">GPU</text></svg>
<div class="t" style="left:1569.0px;top:245.9px;font-size:14px;color:#9b9b9f;transform:scaleX(0.922);transform-origin:0 50%;">Lens Blur</div>
<svg style="left:1542px;top:284.5px;" width="16" height="11" viewBox="0 0 16 11"><rect x="0" y="0" width="15.500" height="10.500" rx="1" fill="#7a7a7e"/><text x="7.750" y="8.300" text-anchor="middle" font-family="Liberation Sans,sans-serif" font-weight="bold" font-size="7.500" fill="#26262b" textLength="13" lengthAdjust="spacingAndGlyphs">GPU</text></svg>
<div class="t" style="left:1569.0px;top:279.3px;font-size:14px;color:#9b9b9f;transform:scaleX(0.944);transform-origin:0 50%;">Mosaic Blur</div>
<svg style="left:1542px;top:317.95px;" width="16" height="11" viewBox="0 0 16 11"><rect x="0" y="0" width="15.500" height="10.500" rx="1" fill="#7a7a7e"/><text x="7.750" y="8.300" text-anchor="middle" font-family="Liberation Sans,sans-serif" font-weight="bold" font-size="7.500" fill="#26262b" textLength="13" lengthAdjust="spacingAndGlyphs">GPU</text></svg>
<div class="t" style="left:1569.0px;top:312.8px;font-size:14px;color:#9b9b9f;transform:scaleX(0.913);transform-origin:0 50%;">Radial Blur</div>
<svg style="left:1542px;top:351.4px;" width="16" height="11" viewBox="0 0 16 11"><rect x="0" y="0" width="15.500" height="10.500" rx="1" fill="#7a7a7e"/><text x="7.750" y="8.300" text-anchor="middle" font-family="Liberation Sans,sans-serif" font-weight="bold" font-size="7.500" fill="#26262b" textLength="13" lengthAdjust="spacingAndGlyphs">GPU</text></svg>
<div class="t" style="left:1569.0px;top:346.2px;font-size:14px;color:#9b9b9f;transform:scaleX(0.952);transform-origin:0 50%;">Zoom Blur</div>
<div class="t" style="left:1530.0px;top:405.0px;font-size:14px;color:#f0f0f0;transform:scaleX(0.926);transform-origin:0 50%;-webkit-text-stroke:0.45px;">ResolveFX Color</div>
<div class="abs" style="left:1530px;top:436px;width:378px;height:240px;background:#26262b;border:1px solid #1a1a1e;border-bottom:none;"></div>
<svg style="left:1542px;top:459px;" width="16" height="11" viewBox="0 0 16 11"><rect x="0" y="0" width="15.500" height="10.500" rx="1" fill="#7a7a7e"/><text x="7.750" y="8.300" text-anchor="middle" font-family="Liberation Sans,sans-serif" font-weight="bold" font-size="7.500" fill="#26262b" textLength="13" lengthAdjust="spacingAndGlyphs">GPU</text></svg>
<div class="t" style="left:1569.0px;top:453.8px;font-size:14px;color:#9b9b9f;transform:scaleX(0.897);transform-origin:0 50%;">ACES Transform</div>
<svg style="left:1542px;top:492.45px;" width="16" height="11" viewBox="0 0 16 11"><rect x="0" y="0" width="15.500" height="10.500" rx="1" fill="#7a7a7e"/><text x="7.750" y="8.300" text-anchor="middle" font-family="Liberation Sans,sans-serif" font-weight="bold" font-size="7.500" fill="#26262b" textLength="13" lengthAdjust="spacingAndGlyphs">GPU</text></svg>
<div class="t" style="left:1569.0px;top:487.2px;font-size:14px;color:#9b9b9f;transform:scaleX(0.982);transform-origin:0 50%;">Chromatic Adaptation</div>
<svg style="left:1542px;top:525.9px;" width="16" height="11" viewBox="0 0 16 11"><rect x="0" y="0" width="15.500" height="10.500" rx="1" fill="#7a7a7e"/><text x="7.750" y="8.300" text-anchor="middle" font-family="Liberation Sans,sans-serif" font-weight="bold" font-size="7.500" fill="#26262b" textLength="13" lengthAdjust="spacingAndGlyphs">GPU</text></svg>
<div class="t" style="left:1569.0px;top:520.7px;font-size:14px;color:#9b9b9f;transform:scaleX(0.949);transform-origin:0 50%;">Color Compressor</div>
<svg style="left:1542px;top:559.35px;" width="16" height="11" viewBox="0 0 16 11"><rect x="0" y="0" width="15.500" height="10.500" rx="1" fill="#7a7a7e"/><text x="7.750" y="8.300" text-anchor="middle" font-family="Liberation Sans,sans-serif" font-weight="bold" font-size="7.500" fill="#26262b" textLength="13" lengthAdjust="spacingAndGlyphs">GPU</text></svg>
<div class="t" style="left:1569.0px;top:554.1px;font-size:14px;color:#9b9b9f;transform:scaleX(0.934);transform-origin:0 50%;">Color Space Transform</div>
<svg style="left:1542px;top:592.8px;" width="16" height="11" viewBox="0 0 16 11"><rect x="0" y="0" width="15.500" height="10.500" rx="1" fill="#7a7a7e"/><text x="7.750" y="8.300" text-anchor="middle" font-family="Liberation Sans,sans-serif" font-weight="bold" font-size="7.500" fill="#26262b" textLength="13" lengthAdjust="spacingAndGlyphs">GPU</text></svg>
<div class="t" style="left:1569.0px;top:587.6px;font-size:14px;color:#9b9b9f;transform:scaleX(0.938);transform-origin:0 50%;">Color Stabilizer</div>
<svg style="left:1542px;top:626.25px;" width="16" height="11" viewBox="0 0 16 11"><rect x="0" y="0" width="15.500" height="10.500" rx="1" fill="#7a7a7e"/><text x="7.750" y="8.300" text-anchor="middle" font-family="Liberation Sans,sans-serif" font-weight="bold" font-size="7.500" fill="#26262b" textLength="13" lengthAdjust="spacingAndGlyphs">GPU</text></svg>
<div class="t" style="left:1569.0px;top:621.0px;font-size:14px;color:#9b9b9f;transform:scaleX(0.961);transform-origin:0 50%;">Contrast Pop</div>
<svg style="left:1542px;top:659.7px;" width="16" height="11" viewBox="0 0 16 11"><rect x="0" y="0" width="15.500" height="10.500" rx="1" fill="#7a7a7e"/><text x="7.750" y="8.300" text-anchor="middle" font-family="Liberation Sans,sans-serif" font-weight="bold" font-size="7.500" fill="#26262b" textLength="13" lengthAdjust="spacingAndGlyphs">GPU</text></svg>
<div class="t" style="left:1569.0px;top:654.5px;font-size:14px;color:#9b9b9f;transform:scaleX(0.829);transform-origin:0 50%;">DCTL</div>
<!-- 50_midbar -->
<div class="abs" style="left:1520px;top:651px;width:400px;height:20px;background:linear-gradient(to bottom,rgba(20,20,24,0),rgba(20,20,24,0.550));"></div>
<div class="abs" style="left:0px;top:671px;width:1920px;height:1.7px;background:#0e0e11;"></div>
<div class="abs" style="left:0px;top:672px;width:1920px;height:38px;background:#28282d;"></div>
<div class="abs" style="left:0px;top:710px;width:1920px;height:1px;background:#0f0f11;"></div>
<div class="abs" style="left:59.5px;top:675px;width:1px;height:32px;background:#38383c;"></div>
<div class="abs" style="left:119.5px;top:675px;width:1px;height:32px;background:#38383c;"></div>
<div class="abs" style="left:179.5px;top:675px;width:1px;height:32px;background:#38383c;"></div>
<div class="abs" style="left:239.5px;top:675px;width:1px;height:32px;background:#38383c;"></div>
<div class="abs" style="left:840.5px;top:675px;width:1px;height:32px;background:#38383c;"></div>
<div class="abs" style="left:900.5px;top:675px;width:1px;height:32px;background:#38383c;"></div>
<div class="abs" style="left:960.5px;top:675px;width:1px;height:32px;background:#38383c;"></div>
<div class="abs" style="left:1020.5px;top:675px;width:1px;height:32px;background:#38383c;"></div>
<div class="abs" style="left:1080.5px;top:675px;width:1px;height:32px;background:#38383c;"></div>
<div class="abs" style="left:1140.5px;top:675px;width:1px;height:32px;background:#38383c;"></div>
<div class="abs" style="left:1200.5px;top:675px;width:1px;height:32px;background:#38383c;"></div>
<div class="abs" style="left:1800.5px;top:675px;width:1px;height:32px;background:#38383c;"></div>
<div class="abs" style="left:1860.5px;top:675px;width:1px;height:32px;background:#38383c;"></div>
<svg style="left:23px;top:644px;" width="18" height="19" viewBox="0 0 18 19"><path d="M1 18l1.200-3.500 7.500-7.500 2.300 2.300-7.500 7.500z" fill="#f0f0f0"/><path d="M9.500 5.200l4.300 4.300M10.500 6.300l3.500-3.500c1.500-1.500 3.700.7 2.200 2.200l-3.500 3.500z" stroke="#f0f0f0" stroke-width="1.600" fill="#f0f0f0"/></svg>
<svg style="left:47px;top:650px;" width="10" height="7" viewBox="0 0 10 7"><path d="M0.700 0.700l4.300 4.600 4.300-4.600" fill="none" stroke="#7e7e82" stroke-width="1.300"/></svg>
<svg style="left:67px;top:645px;" width="18" height="16" viewBox="0 0 18 16"><path d="M9 1l8 4-8 4-8-4z" fill="none" stroke="#5c5c60" stroke-width="1.300"/><path d="M1 8.500l8 4 8-4M1 11.500l8 4 8-4" fill="none" stroke="#47474b" stroke-width="1.200"/></svg>
<svg style="left:101px;top:645px;" width="19" height="16" viewBox="0 0 19 16"><path d="M1.500 5.500h3.500l4.500-4v13l-4.500-4h-3.500z" fill="none" stroke="#f0f0f0" stroke-width="1.700" stroke-linejoin="round"/><path d="M12.300 5.500c1.300 1.500 1.300 3.500 0 5M14.800 3.500c2.500 2.700 2.500 6.300 0 9" fill="none" stroke="#f0f0f0" stroke-width="1.500" stroke-linecap="round"/></svg>
<svg style="left:377px;top:645px;" width="22" height="15" viewBox="0 0 22 15"><path d="M1.500 1v13" stroke="#9a9a9e" stroke-width="2"/><path d="M12 1v13l-9-6.500zM21 1v13l-9-6.500z" fill="#9a9a9e"/></svg>
<svg style="left:416px;top:646px;" width="12" height="14" viewBox="0 0 12 14"><path d="M11 0.500v13l-10-6.500z" fill="#9a9a9e"/></svg>
<svg style="left:450px;top:646px;" width="14" height="14" viewBox="0 0 14 14"><rect x="0.500" y="0.500" width="13" height="13" fill="#9a9a9e"/></svg>
<svg style="left:484px;top:646px;" width="12" height="14" viewBox="0 0 12 14"><path d="M1 0.500v13l10-6.500z" fill="#9a9a9e"/></svg>
<svg style="left:513px;top:645px;" width="22" height="15" viewBox="0 0 22 15"><path d="M20.500 1v13" stroke="#9a9a9e" stroke-width="2"/><path d="M10 1v13l9-6.500zM1 1v13l9-6.500z" fill="#9a9a9e"/></svg>
<svg style="left:547px;top:644.5px;" width="22" height="18" viewBox="0 0 22 18"><path d="M14.500 6h2c5 0 5 9.500 0 9.500h-11c-5 0-5-9.500 0-9.500h6" fill="none" stroke="#9a9a9e" stroke-width="1.900"/><path d="M9.500 1.500l4 4.200-4 3.800" fill="none" stroke="#9a9a9e" stroke-width="1.900"/></svg>
<div class="t" style="left:841.5px;top:643.5px;font-size:16.5px;color:#f0f0f0;transform:scaleX(0.964);transform-origin:0 50%;">01:00:45:23</div>
<!-- 55_midicons -->
<svg style="left:16px;top:680px;" width="28" height="22" viewBox="0 0 28 22"><path d="M9 4.500l4.500-2.500h6l-4.500 2.500zM9 4.500v9l6 0v-9zM15 4.500l4.500-2.500" fill="none" stroke="#66666a" stroke-width="1.300" stroke-linejoin="round"/><path d="M15.500 8l8-3.500c2-.8 3 0 3 1.500v7c0 1.500-1 2.300-3 3l-8 3.200z" fill="none" stroke="#66666a" stroke-width="1.300"/><ellipse cx="21.500" cy="11.500" rx="2.600" ry="3.600" fill="none" stroke="#66666a" stroke-width="1.200" transform="rotate(-15 21.500 11.500)"/><path d="M3.500 12.500a4.500 4.500 0 0 1 5-1M10 15a4.500 4.500 0 0 1-2.500 5M5 21a4.500 4.500 0 0 1-3-4.500" fill="none" stroke="#66666a" stroke-width="1.300" stroke-dasharray="3.500 1"/></svg>
<svg style="left:79px;top:683px;" width="22" height="18" viewBox="0 0 22 18"><path d="M0.700 4.500V0.700h4M17.500 0.700h4v3.800M21.500 13.500v3.800h-4M4.700 17.300h-4v-3.800" fill="none" stroke="#66666a" stroke-width="1.300"/><rect x="4" y="3.6" width="2.400" height="2.400" fill="#66666a"/><rect x="4" y="7.3" width="2.400" height="2.400" fill="#66666a"/><rect x="4" y="11" width="2.400" height="2.400" fill="#66666a"/><rect x="7.7" y="3.6" width="2.400" height="2.400" fill="#66666a"/><rect x="7.7" y="7.3" width="2.400" height="2.400" fill="#66666a"/><rect x="7.7" y="11" width="2.400" height="2.400" fill="#66666a"/><rect x="11.4" y="3.6" width="2.400" height="2.400" fill="#66666a"/><rect x="11.4" y="7.3" width="2.400" height="2.400" fill="#66666a"/><rect x="11.4" y="11" width="2.400" height="2.400" fill="#66666a"/><rect x="15.1" y="3.6" width="2.400" height="2.400" fill="#66666a"/><rect x="15.1" y="7.3" width="2.400" height="2.400" fill="#66666a"/><rect x="15.1" y="11" width="2.400" height="2.400" fill="#66666a"/></svg>
<svg style="left:138px;top:680px;" width="22" height="22" viewBox="0 0 22 22"><circle cx="10.500" cy="10.500" r="8.800" fill="none" stroke="#f0f0f0" stroke-width="1.700"/><path d="M10.500 3v15M3 10.500h15" stroke="#55555a" stroke-width="0.800"/><circle cx="10.500" cy="10.500" r="2.300" fill="#f0f0f0"/></svg>
<svg style="left:160.5px;top:675px;" width="4" height="4" viewBox="0 0 4 4"><circle cx="2" cy="2" r="1.700" fill="#e0524a"/></svg>
<svg style="left:197px;top:681px;" width="24" height="20" viewBox="0 0 24 20"><circle cx="14" cy="5" r="3.800" fill="#6e6e72"/><circle cx="9" cy="14" r="2.900" fill="none" stroke="#66666a" stroke-width="1.800"/><circle cx="19.500" cy="14" r="3.700" fill="#4a4a4e"/><path d="M5 4c-2.500.3-3.500 2.300-3 4.500M0.200 6.800l1.800 2 2-1.800" fill="none" stroke="#66666a" stroke-width="1.200"/></svg>
<svg style="left:256px;top:683px;" width="27" height="18" viewBox="0 0 27 18"><path d="M6 1h20v15.500H6" fill="none" stroke="#66666a" stroke-width="1.300"/><path d="M0 4.500h8M2 8.500h6M0 12.500h8" stroke="#66666a" stroke-width="1.200"/><circle cx="14.500" cy="6" r="1.600" fill="#66666a"/><path d="M10.500 14l3.500-5 3 5zM17 14l3.300-4.500 3.200 4.500z" fill="#5a5a5e"/></svg>
<svg style="left:799px;top:680px;" width="26" height="23" viewBox="0 0 26 23"><path d="M2.5 2.500V20.500M2.500 2.5H20.500" stroke="#77777b" stroke-width="1.100"/><path d="M7 2.500V20.500M2.500 7H20.500" stroke="#77777b" stroke-width="1.100"/><path d="M11.5 2.500V20.500M2.500 11.5H20.500" stroke="#77777b" stroke-width="1.100"/><path d="M16 2.500V20.500M2.500 16H20.500" stroke="#77777b" stroke-width="1.100"/><path d="M20.5 2.500V20.500M2.500 20.5H20.500" stroke="#77777b" stroke-width="1.100"/><path d="M0.500 20.500c8 0 9-4 11-9.500s3.500-9.500 11-10" fill="none" stroke="#f0f0f0" stroke-width="2.200" stroke-linecap="round"/></svg>
<svg style="left:821.8px;top:675.3px;" width="4" height="4" viewBox="0 0 4 4"><circle cx="2" cy="2" r="1.700" fill="#e0524a"/></svg>
<svg style="left:861px;top:682px;" width="20" height="20" viewBox="0 0 20 20"><path d="M1 19l1.200-3.800 8-8 2.600 2.600-8 8z" fill="#66666a"/><path d="M9.500 5.200l5.300 5.300" stroke="#66666a" stroke-width="1.800"/><path d="M11.500 6.500l3.500-3.500c1.800-1.800 4 .4 2.200 2.200l-3.500 3.500z" fill="#66666a"/></svg>
<svg style="left:918px;top:681px;" width="24" height="21" viewBox="0 0 24 21"><ellipse cx="12" cy="10.500" rx="10" ry="8" fill="#3a3a3e" stroke="#66666a" stroke-width="1.200"/><circle cx="12" cy="2.500" r="1.500" fill="#28282e" stroke="#66666a" stroke-width="1"/><circle cx="12" cy="18.500" r="1.500" fill="#28282e" stroke="#66666a" stroke-width="1"/><circle cx="2" cy="10.500" r="1.500" fill="#28282e" stroke="#66666a" stroke-width="1"/><circle cx="22" cy="10.500" r="1.500" fill="#28282e" stroke="#66666a" stroke-width="1"/></svg>
<svg style="left:979px;top:682px;" width="23" height="20" viewBox="0 0 23 20"><path d="M0.700 5V0.700h4.500M17.800 0.700h4.500V5M22.300 15v4.300h-4.500M5.200 19.300H0.700V15" fill="none" stroke="#55555a" stroke-width="1.200" stroke-dasharray="2 1"/><circle cx="11.500" cy="10" r="5.300" fill="none" stroke="#66666a" stroke-width="1.400"/><path d="M11.500 2.500v4M11.500 13.500v4M4 10h4M15 10h4" stroke="#66666a" stroke-width="1.300"/><circle cx="11.500" cy="10" r="0.900" fill="#66666a"/></svg>
<svg style="left:1039px;top:682px;" width="22" height="20" viewBox="0 0 22 20"><path d="M5.500 0.500c2.500 3.500 4 5.500 4 7.500a4 4 0 0 1-8 0c0-2 1.500-4 4-7.500z" fill="#6e6e72"/><circle cx="4.800" cy="8.500" r="1.500" fill="#28282e"/><path d="M14.500 6.500l6.500 12.500h-13z" fill="#77777b"/><path d="M14.500 6.500l-6.500 12.500h6.500z" fill="#55555a"/></svg>
<svg style="left:1097px;top:682px;" width="26" height="20" viewBox="0 0 26 20"><rect x="0.500" y="0.500" width="22" height="16" fill="none" stroke="#4e4e52" stroke-width="1" stroke-dasharray="1.500 1.500"/><rect x="5.500" y="4.500" width="20" height="15" fill="#28282e" stroke="#66666a" stroke-width="1.300"/><circle cx="15.500" cy="9.500" r="2.500" fill="#66666a"/><path d="M10 17.500c0-5 11-5 11 0z" fill="#66666a"/></svg>
<svg style="left:1158px;top:681px;" width="25" height="22" viewBox="0 0 25 22"><rect x="3.500" y="3" width="17" height="14" fill="#3c3c40" stroke="#5a5a5e" stroke-width="1" stroke-dasharray="1.500 1.500"/><path d="M17 1.500h3.500q2 0 2 2v3.500M20 5l2.500 2.500 2.500-2.500" fill="none" stroke="#77777b" stroke-width="1.400"/><path d="M8 20.500H4.500q-2 0-2-2V14M0 16l2.500-2.500 2.500 2.500" fill="none" stroke="#77777b" stroke-width="1.400"/></svg>
<svg style="left:1219px;top:683px;" width="23" height="19" viewBox="0 0 23 19"><rect x="0.700" y="0.700" width="20" height="14.500" rx="1.500" fill="none" stroke="#66666a" stroke-width="1.300"/><path d="M3 17.500h19.500v-13" fill="none" stroke="#4e4e52" stroke-width="1.100"/><text x="10.700" y="12" text-anchor="middle" font-family="Liberation Sans,sans-serif" font-size="10.500" fill="#66666a" font-weight="bold">3D</text></svg>
<svg style="left:1758px;top:683px;" width="27" height="17" viewBox="0 0 27 17"><path d="M6 1.500l-5 7 5 7" fill="none" stroke="#4a4a4e" stroke-width="1.200"/><path d="M10.500 1.500l-5 7 5 7" fill="none" stroke="#55555a" stroke-width="1.200"/><path d="M16 0.500l7.500 8-7.500 8-7.500-8z" fill="#5e5e62"/></svg>
<svg style="left:1819px;top:681px;" width="23" height="21" viewBox="0 0 23 21"><path d="M1.500 0.500v19h21" fill="none" stroke="#f0f0f0" stroke-width="1.700"/><path d="M4.500 15.500l2-8.500 2 7 2-9.500 2.300 9 2-5.500 2 5 2-3.500 1.500 2.500" fill="none" stroke="#f0f0f0" stroke-width="1.400" stroke-linejoin="round"/></svg>
<svg style="left:1880px;top:681px;" width="20" height="20" viewBox="0 0 20 20"><circle cx="10" cy="10" r="8.300" fill="none" stroke="#8a8a8e" stroke-width="1.400"/><path d="M10 8.500v6.500" stroke="#8a8a8e" stroke-width="2"/><circle cx="10" cy="5.500" r="1.300" fill="#8a8a8e"/></svg>
<!-- 60_wheels -->
<div class="abs" style="left:0px;top:711px;width:1920px;height:25px;background:#212125;"></div>
<div class="abs" style="left:0px;top:736px;width:1920px;height:1px;background:#0f0f11;"></div>
<div class="abs" style="left:0px;top:737px;width:719px;height:255px;background:#28282e;"></div>
<div class="abs" style="left:719px;top:710px;width:2px;height:320px;background:#0c0c0e;"></div>
<div class="abs" style="left:0px;top:991.5px;width:719px;height:1.5px;background:#131316;"></div>
<div class="abs" style="left:0px;top:993px;width:719px;height:37px;background:#2d2e35;"></div>
<div class="abs" style="left:0px;top:1030px;width:1440px;height:1px;background:#0f0f11;"></div>
<div class="t" style="left:9.8px;top:713.5px;font-size:14px;color:#f0f0f0;transform:scaleX(0.964);transform-origin:0 50%;-webkit-text-stroke:0.45px;">Color Wheels</div>
<svg style="left:314px;top:719px;" width="50" height="9" viewBox="0 0 50 9"><circle cx="4.750" cy="4.500" r="3.400" fill="#f4f4f4"/><circle cx="23.500" cy="4.500" r="3" fill="#303035"/><circle cx="42.500" cy="4.500" r="3" fill="#303035"/></svg>
<div class="t" style="left:550.3px;top:713.0px;font-size:14px;color:#ededed;transform:scaleX(0.980);transform-origin:0 50%;-webkit-text-stroke:0.45px;">Primaries Wheels</div>
<svg style="left:665px;top:720px;" width="11" height="8" viewBox="0 0 11 8"><path d="M1 1l4.500 5 4.500-5" fill="none" stroke="#8e8e92" stroke-width="1.400"/></svg>
<div class="abs" style="left:682px;top:711px;width:1px;height:25px;background:#0f0f11;"></div>
<svg style="left:693px;top:715px;" width="17" height="16" viewBox="0 0 17 16"><path d="M3.500 4.800A6 6 0 1 1 2.500 8.500" fill="none" stroke="#6e6e72" stroke-width="1.300"/><path d="M2.600 1.500v3.800h3.800" fill="none" stroke="#6e6e72" stroke-width="1.300"/><path d="M8.500 5.500v5M6 8h5" stroke="#6e6e72" stroke-width="1.200"/></svg>
<div class="t" style="left:77.5px;top:747.4px;font-size:14px;color:#dcdcdc;transform:scaleX(0.964);transform-origin:0 50%;">Lift</div>
<div class="abs" style="left:23.5px;top:772.7px;width:123px;height:131px;background:#25252a;border-radius:50%;border:1.500px solid #202024;"></div>
<div class="abs" style="left:31.2px;top:781.3px;width:107.6px;height:113.8px;background:conic-gradient(from 0deg,#ff1aa8 0deg,#f41af0 22deg,#b020ff 48deg,#5a22ff 75deg,#1a2cff 100deg,#1476ff 125deg,#14d6f4 150deg,#14f0a0 172deg,#22f022 200deg,#8cf010 232deg,#f0f010 265deg,#ffa010 295deg,#ff2a10 325deg,#ff1458 345deg,#ff1aa8 360deg);border-radius:50%;"></div>
<div class="abs" style="left:40.1px;top:790.9px;width:89.8px;height:94.6px;background:#222226;border-radius:50%;"></div>
<svg style="left:0px;top:0px;" width="1920" height="1080" viewBox="0 0 1920 1080"><path d="M41.5 838.7H128.5M85.5 792.2V884.2" stroke="#3c3c41" stroke-width="1"/><circle cx="85.5" cy="838.7" r="5.600" fill="#222226" stroke="#9a9a9e" stroke-width="1.800"/><circle cx="85.5" cy="773.7" r="1" fill="#77777b"/></svg>
<svg style="left:145.5px;top:748.9px;" width="16" height="16" viewBox="0 0 16 16"><path d="M3.200 5.200A6 6 0 1 1 2 8.500" fill="none" stroke="#8a8a8e" stroke-width="1.300"/><path d="M2.300 1.800v3.900h3.900" fill="none" stroke="#8a8a8e" stroke-width="1.300"/></svg>
<div class="t" style="left:244.3px;top:746.2px;font-size:14px;color:#dcdcdc;transform:scaleX(0.934);transform-origin:0 50%;">Gamma</div>
<div class="abs" style="left:206px;top:771.6px;width:123px;height:131px;background:#25252a;border-radius:50%;border:1.500px solid #202024;"></div>
<div class="abs" style="left:213.7px;top:780.2px;width:107.6px;height:113.8px;background:conic-gradient(from 0deg,#ff1aa8 0deg,#f41af0 22deg,#b020ff 48deg,#5a22ff 75deg,#1a2cff 100deg,#1476ff 125deg,#14d6f4 150deg,#14f0a0 172deg,#22f022 200deg,#8cf010 232deg,#f0f010 265deg,#ffa010 295deg,#ff2a10 325deg,#ff1458 345deg,#ff1aa8 360deg);border-radius:50%;"></div>
<div class="abs" style="left:222.6px;top:789.8px;width:89.8px;height:94.6px;background:#222226;border-radius:50%;"></div>
<svg style="left:0px;top:0px;" width="1920" height="1080" viewBox="0 0 1920 1080"><path d="M224 837.6H311M268 791.1V883.1" stroke="#3c3c41" stroke-width="1"/><circle cx="268" cy="837.6" r="5.600" fill="#222226" stroke="#9a9a9e" stroke-width="1.800"/><circle cx="268" cy="772.6" r="1" fill="#77777b"/></svg>
<svg style="left:328px;top:747.7px;" width="16" height="16" viewBox="0 0 16 16"><path d="M3.200 5.200A6 6 0 1 1 2 8.500" fill="none" stroke="#8a8a8e" stroke-width="1.300"/><path d="M2.300 1.800v3.900h3.900" fill="none" stroke="#8a8a8e" stroke-width="1.300"/></svg>
<div class="t" style="left:438.2px;top:747.4px;font-size:14px;color:#dcdcdc;transform:scaleX(0.900);transform-origin:0 50%;">Gain</div>
<div class="abs" style="left:388px;top:772.7px;width:123px;height:131px;background:#25252a;border-radius:50%;border:1.500px solid #202024;"></div>
<div class="abs" style="left:395.7px;top:781.3px;width:107.6px;height:113.8px;background:conic-gradient(from 0deg,#ff1aa8 0deg,#f41af0 22deg,#b020ff 48deg,#5a22ff 75deg,#1a2cff 100deg,#1476ff 125deg,#14d6f4 150deg,#14f0a0 172deg,#22f022 200deg,#8cf010 232deg,#f0f010 265deg,#ffa010 295deg,#ff2a10 325deg,#ff1458 345deg,#ff1aa8 360deg);border-radius:50%;"></div>
<div class="abs" style="left:404.6px;top:790.9px;width:89.8px;height:94.6px;background:#222226;border-radius:50%;"></div>
<svg style="left:0px;top:0px;" width="1920" height="1080" viewBox="0 0 1920 1080"><path d="M406 838.7H493M450 792.2V884.2" stroke="#3c3c41" stroke-width="1"/><circle cx="450" cy="838.7" r="5.600" fill="#222226" stroke="#9a9a9e" stroke-width="1.800"/><circle cx="450" cy="773.7" r="1" fill="#77777b"/><path d="M450 773.5A62 64.700 0 0 0 450 902.9" fill="none" stroke="#a8a8ac" stroke-width="1.100"/></svg>
<svg style="left:510px;top:748.9px;" width="16" height="16" viewBox="0 0 16 16"><path d="M3.200 5.200A6 6 0 1 1 2 8.500" fill="none" stroke="#8a8a8e" stroke-width="1.300"/><path d="M2.300 1.800v3.900h3.900" fill="none" stroke="#8a8a8e" stroke-width="1.300"/></svg>
<div class="t" style="left:613.7px;top:746.2px;font-size:14px;color:#dcdcdc;transform:scaleX(0.979);transform-origin:0 50%;">Offset</div>
<div class="abs" style="left:570.2px;top:771.6px;width:123px;height:131px;background:#25252a;border-radius:50%;border:1.500px solid #202024;"></div>
<div class="abs" style="left:577.9px;top:780.2px;width:107.6px;height:113.8px;background:conic-gradient(from 0deg,#ff1aa8 0deg,#f41af0 22deg,#b020ff 48deg,#5a22ff 75deg,#1a2cff 100deg,#1476ff 125deg,#14d6f4 150deg,#14f0a0 172deg,#22f022 200deg,#8cf010 232deg,#f0f010 265deg,#ffa010 295deg,#ff2a10 325deg,#ff1458 345deg,#ff1aa8 360deg);border-radius:50%;"></div>
<div class="abs" style="left:586.8px;top:789.8px;width:89.8px;height:94.6px;background:#222226;border-radius:50%;"></div>
<svg style="left:0px;top:0px;" width="1920" height="1080" viewBox="0 0 1920 1080"><path d="M588.2 837.6H675.2M632.2 791.1V883.1" stroke="#3c3c41" stroke-width="1"/><circle cx="632.2" cy="837.6" r="5.600" fill="#222226" stroke="#9a9a9e" stroke-width="1.800"/><circle cx="632.2" cy="772.6" r="1" fill="#77777b"/></svg>
<svg style="left:692.2px;top:747.7px;" width="16" height="16" viewBox="0 0 16 16"><path d="M3.200 5.200A6 6 0 1 1 2 8.500" fill="none" stroke="#8a8a8e" stroke-width="1.300"/><path d="M2.300 1.800v3.900h3.900" fill="none" stroke="#8a8a8e" stroke-width="1.300"/></svg>
<svg style="left:13px;top:749.5px;" width="16" height="16" viewBox="0 0 16 16"><path d="M6.500 0v5M6.500 8.500v5M0 6.800h5M8.500 6.800h4.500" stroke="#e8e8e8" stroke-width="1.300"/><circle cx="13" cy="13.200" r="2.600" fill="#0a0a0a"/></svg>
<svg style="left:378px;top:749.5px;" width="16" height="16" viewBox="0 0 16 16"><path d="M6.500 0v5M6.500 8.500v5M0 6.800h5M8.500 6.800h4.500" stroke="#e8e8e8" stroke-width="1.300"/><circle cx="13" cy="13.200" r="2.600" fill="#f0f0f0"/></svg>
<div class="abs" style="left:12px;top:915px;width:147px;height:14px;background:#1d1d21;border-radius:1px;"></div>
<svg style="left:0px;top:0px;" width="1920" height="1080" viewBox="0 0 1920 1080"><rect x="25.5" y="918.5" width="2" height="7" fill="#d4d4d6" opacity="0.16"/><rect x="29.5" y="918.5" width="2" height="7" fill="#d4d4d6" opacity="0.21"/><rect x="33.5" y="918.5" width="2" height="7" fill="#d4d4d6" opacity="0.26"/><rect x="37.5" y="918.5" width="2" height="7" fill="#d4d4d6" opacity="0.32"/><rect x="41.5" y="918.5" width="2" height="7" fill="#d4d4d6" opacity="0.39"/><rect x="45.5" y="918.5" width="2" height="7" fill="#d4d4d6" opacity="0.45"/><rect x="49.5" y="918.5" width="2" height="7" fill="#d4d4d6" opacity="0.52"/><rect x="53.5" y="918.5" width="2" height="7" fill="#d4d4d6" opacity="0.60"/><rect x="57.5" y="918.5" width="2" height="7" fill="#d4d4d6" opacity="0.67"/><rect x="61.5" y="918.5" width="2" height="7" fill="#d4d4d6" opacity="0.75"/><rect x="65.5" y="918.5" width="2" height="7" fill="#d4d4d6" opacity="0.83"/><rect x="69.5" y="918.5" width="2" height="7" fill="#d4d4d6" opacity="0.91"/><rect x="73.5" y="918.5" width="2" height="7" fill="#d4d4d6" opacity="0.99"/><rect x="77.5" y="918.5" width="2" height="7" fill="#d4d4d6" opacity="1.00"/><rect x="81.5" y="918.5" width="2" height="7" fill="#d4d4d6" opacity="1.00"/><rect x="85.5" y="918.5" width="2" height="7" fill="#d4d4d6" opacity="1.00"/><rect x="89.5" y="918.5" width="2" height="7" fill="#d4d4d6" opacity="1.00"/><rect x="93.5" y="918.5" width="2" height="7" fill="#d4d4d6" opacity="1.00"/><rect x="97.5" y="918.5" width="2" height="7" fill="#d4d4d6" opacity="0.95"/><rect x="101.5" y="918.5" width="2" height="7" fill="#d4d4d6" opacity="0.87"/><rect x="105.5" y="918.5" width="2" height="7" fill="#d4d4d6" opacity="0.79"/><rect x="109.5" y="918.5" width="2" height="7" fill="#d4d4d6" opacity="0.71"/><rect x="113.5" y="918.5" width="2" height="7" fill="#d4d4d6" opacity="0.63"/><rect x="117.5" y="918.5" width="2" height="7" fill="#d4d4d6" opacity="0.56"/><rect x="121.5" y="918.5" width="2" height="7" fill="#d4d4d6" opacity="0.49"/><rect x="125.5" y="918.5" width="2" height="7" fill="#d4d4d6" opacity="0.42"/><rect x="129.5" y="918.5" width="2" height="7" fill="#d4d4d6" opacity="0.36"/><rect x="133.5" y="918.5" width="2" height="7" fill="#d4d4d6" opacity="0.29"/><rect x="137.5" y="918.5" width="2" height="7" fill="#d4d4d6" opacity="0.24"/><rect x="141.5" y="918.5" width="2" height="7" fill="#d4d4d6" opacity="0.18"/><rect x="145.5" y="918.5" width="2" height="7" fill="#d4d4d6" opacity="0.13"/></svg>
<div class="abs" style="left:195px;top:915px;width:147px;height:14px;background:#1d1d21;border-radius:1px;"></div>
<svg style="left:0px;top:0px;" width="1920" height="1080" viewBox="0 0 1920 1080"><rect x="208.5" y="918.5" width="2" height="7" fill="#d4d4d6" opacity="0.16"/><rect x="212.5" y="918.5" width="2" height="7" fill="#d4d4d6" opacity="0.21"/><rect x="216.5" y="918.5" width="2" height="7" fill="#d4d4d6" opacity="0.26"/><rect x="220.5" y="918.5" width="2" height="7" fill="#d4d4d6" opacity="0.32"/><rect x="224.5" y="918.5" width="2" height="7" fill="#d4d4d6" opacity="0.39"/><rect x="228.5" y="918.5" width="2" height="7" fill="#d4d4d6" opacity="0.45"/><rect x="232.5" y="918.5" width="2" height="7" fill="#d4d4d6" opacity="0.52"/><rect x="236.5" y="918.5" width="2" height="7" fill="#d4d4d6" opacity="0.60"/><rect x="240.5" y="918.5" width="2" height="7" fill="#d4d4d6" opacity="0.67"/><rect x="244.5" y="918.5" width="2" height="7" fill="#d4d4d6" opacity="0.75"/><rect x="248.5" y="918.5" width="2" height="7" fill="#d4d4d6" opacity="0.83"/><rect x="252.5" y="918.5" width="2" height="7" fill="#d4d4d6" opacity="0.91"/><rect x="256.5" y="918.5" width="2" height="7" fill="#d4d4d6" opacity="0.99"/><rect x="260.5" y="918.5" width="2" height="7" fill="#d4d4d6" opacity="1.00"/><rect x="264.5" y="918.5" width="2" height="7" fill="#d4d4d6" opacity="1.00"/><rect x="268.5" y="918.5" width="2" height="7" fill="#d4d4d6" opacity="1.00"/><rect x="272.5" y="918.5" width="2" height="7" fill="#d4d4d6" opacity="1.00"/><rect x="276.5" y="918.5" width="2" height="7" fill="#d4d4d6" opacity="1.00"/><rect x="280.5" y="918.5" width="2" height="7" fill="#d4d4d6" opacity="0.95"/><rect x="284.5" y="918.5" width="2" height="7" fill="#d4d4d6" opacity="0.87"/><rect x="288.5" y="918.5" width="2" height="7" fill="#d4d4d6" opacity="0.79"/><rect x="292.5" y="918.5" width="2" height="7" fill="#d4d4d6" opacity="0.71"/><rect x="296.5" y="918.5" width="2" height="7" fill="#d4d4d6" opacity="0.63"/><rect x="300.5" y="918.5" width="2" height="7" fill="#d4d4d6" opacity="0.56"/><rect x="304.5" y="918.5" width="2" height="7" fill="#d4d4d6" opacity="0.49"/><rect x="308.5" y="918.5" width="2" height="7" fill="#d4d4d6" opacity="0.42"/><rect x="312.5" y="918.5" width="2" height="7" fill="#d4d4d6" opacity="0.36"/><rect x="316.5" y="918.5" width="2" height="7" fill="#d4d4d6" opacity="0.29"/><rect x="320.5" y="918.5" width="2" height="7" fill="#d4d4d6" opacity="0.24"/><rect x="324.5" y="918.5" width="2" height="7" fill="#d4d4d6" opacity="0.18"/><rect x="328.5" y="918.5" width="2" height="7" fill="#d4d4d6" opacity="0.13"/></svg>
<div class="abs" style="left:377px;top:915px;width:147px;height:14px;background:#1d1d21;border-radius:1px;"></div>
<svg style="left:0px;top:0px;" width="1920" height="1080" viewBox="0 0 1920 1080"><rect x="390.5" y="918.5" width="2" height="7" fill="#d4d4d6" opacity="0.16"/><rect x="394.5" y="918.5" width="2" height="7" fill="#d4d4d6" opacity="0.21"/><rect x="398.5" y="918.5" width="2" height="7" fill="#d4d4d6" opacity="0.26"/><rect x="402.5" y="918.5" width="2" height="7" fill="#d4d4d6" opacity="0.32"/><rect x="406.5" y="918.5" width="2" height="7" fill="#d4d4d6" opacity="0.39"/><rect x="410.5" y="918.5" width="2" height="7" fill="#d4d4d6" opacity="0.45"/><rect x="414.5" y="918.5" width="2" height="7" fill="#d4d4d6" opacity="0.52"/><rect x="418.5" y="918.5" width="2" height="7" fill="#d4d4d6" opacity="0.60"/><rect x="422.5" y="918.5" width="2" height="7" fill="#d4d4d6" opacity="0.67"/><rect x="426.5" y="918.5" width="2" height="7" fill="#d4d4d6" opacity="0.75"/><rect x="430.5" y="918.5" width="2" height="7" fill="#d4d4d6" opacity="0.83"/><rect x="434.5" y="918.5" width="2" height="7" fill="#d4d4d6" opacity="0.91"/><rect x="438.5" y="918.5" width="2" height="7" fill="#d4d4d6" opacity="0.99"/><rect x="442.5" y="918.5" width="2" height="7" fill="#d4d4d6" opacity="1.00"/><rect x="446.5" y="918.5" width="2" height="7" fill="#d4d4d6" opacity="1.00"/><rect x="450.5" y="918.5" width="2" height="7" fill="#d4d4d6" opacity="1.00"/><rect x="454.5" y="918.5" width="2" height="7" fill="#d4d4d6" opacity="1.00"/><rect x="458.5" y="918.5" width="2" height="7" fill="#d4d4d6" opacity="1.00"/><rect x="462.5" y="918.5" width="2" height="7" fill="#d4d4d6" opacity="0.95"/><rect x="466.5" y="918.5" width="2" height="7" fill="#d4d4d6" opacity="0.87"/><rect x="470.5" y="918.5" width="2" height="7" fill="#d4d4d6" opacity="0.79"/><rect x="474.5" y="918.5" width="2" height="7" fill="#d4d4d6" opacity="0.71"/><rect x="478.5" y="918.5" width="2" height="7" fill="#d4d4d6" opacity="0.63"/><rect x="482.5" y="918.5" width="2" height="7" fill="#d4d4d6" opacity="0.56"/><rect x="486.5" y="918.5" width="2" height="7" fill="#d4d4d6" opacity="0.49"/><rect x="490.5" y="918.5" width="2" height="7" fill="#d4d4d6" opacity="0.42"/><rect x="494.5" y="918.5" width="2" height="7" fill="#d4d4d6" opacity="0.36"/><rect x="498.5" y="918.5" width="2" height="7" fill="#d4d4d6" opacity="0.29"/><rect x="502.5" y="918.5" width="2" height="7" fill="#d4d4d6" opacity="0.24"/><rect x="506.5" y="918.5" width="2" height="7" fill="#d4d4d6" opacity="0.18"/><rect x="510.5" y="918.5" width="2" height="7" fill="#d4d4d6" opacity="0.13"/></svg>
<div class="abs" style="left:559.5px;top:915px;width:147px;height:14px;background:#1d1d21;border-radius:1px;"></div>
<svg style="left:0px;top:0px;" width="1920" height="1080" viewBox="0 0 1920 1080"><rect x="573.0" y="918.5" width="2" height="7" fill="#d4d4d6" opacity="0.16"/><rect x="577.0" y="918.5" width="2" height="7" fill="#d4d4d6" opacity="0.21"/><rect x="581.0" y="918.5" width="2" height="7" fill="#d4d4d6" opacity="0.26"/><rect x="585.0" y="918.5" width="2" height="7" fill="#d4d4d6" opacity="0.32"/><rect x="589.0" y="918.5" width="2" height="7" fill="#d4d4d6" opacity="0.39"/><rect x="593.0" y="918.5" width="2" height="7" fill="#d4d4d6" opacity="0.45"/><rect x="597.0" y="918.5" width="2" height="7" fill="#d4d4d6" opacity="0.52"/><rect x="601.0" y="918.5" width="2" height="7" fill="#d4d4d6" opacity="0.60"/><rect x="605.0" y="918.5" width="2" height="7" fill="#d4d4d6" opacity="0.67"/><rect x="609.0" y="918.5" width="2" height="7" fill="#d4d4d6" opacity="0.75"/><rect x="613.0" y="918.5" width="2" height="7" fill="#d4d4d6" opacity="0.83"/><rect x="617.0" y="918.5" width="2" height="7" fill="#d4d4d6" opacity="0.91"/><rect x="621.0" y="918.5" width="2" height="7" fill="#d4d4d6" opacity="0.99"/><rect x="625.0" y="918.5" width="2" height="7" fill="#d4d4d6" opacity="1.00"/><rect x="629.0" y="918.5" width="2" height="7" fill="#d4d4d6" opacity="1.00"/><rect x="633.0" y="918.5" width="2" height="7" fill="#d4d4d6" opacity="1.00"/><rect x="637.0" y="918.5" width="2" height="7" fill="#d4d4d6" opacity="1.00"/><rect x="641.0" y="918.5" width="2" height="7" fill="#d4d4d6" opacity="1.00"/><rect x="645.0" y="918.5" width="2" height="7" fill="#d4d4d6" opacity="0.95"/><rect x="649.0" y="918.5" width="2" height="7" fill="#d4d4d6" opacity="0.87"/><rect x="653.0" y="918.5" width="2" height="7" fill="#d4d4d6" opacity="0.79"/><rect x="657.0" y="918.5" width="2" height="7" fill="#d4d4d6" opacity="0.71"/><rect x="661.0" y="918.5" width="2" height="7" fill="#d4d4d6" opacity="0.63"/><rect x="665.0" y="918.5" width="2" height="7" fill="#d4d4d6" opacity="0.56"/><rect x="669.0" y="918.5" width="2" height="7" fill="#d4d4d6" opacity="0.49"/><rect x="673.0" y="918.5" width="2" height="7" fill="#d4d4d6" opacity="0.42"/><rect x="677.0" y="918.5" width="2" height="7" fill="#d4d4d6" opacity="0.36"/><rect x="681.0" y="918.5" width="2" height="7" fill="#d4d4d6" opacity="0.29"/><rect x="685.0" y="918.5" width="2" height="7" fill="#d4d4d6" opacity="0.24"/><rect x="689.0" y="918.5" width="2" height="7" fill="#d4d4d6" opacity="0.18"/><rect x="693.0" y="918.5" width="2" height="7" fill="#d4d4d6" opacity="0.13"/></svg>
<div class="abs" style="left:14.4px;top:939.5px;width:31.8px;height:24px;background:#1a1a1d;border:1px solid #0d0d0f;border-radius:2px;"></div>
<div class="t" style="left:17.5px;top:942.0px;font-size:14px;color:#e6e6e6;transform:scaleX(0.900);transform-origin:0 50%;">0.00</div>
<div class="t" style="left:25.5px;top:962.0px;font-size:14px;color:#88888c;transform:scaleX(0.950);transform-origin:0 50%;">Y</div>
<div class="abs" style="left:51.4px;top:939.5px;width:31.8px;height:24px;background:#1a1a1d;border:1px solid #0d0d0f;border-radius:2px;"></div>
<div class="t" style="left:54.5px;top:942.0px;font-size:14px;color:#e6e6e6;transform:scaleX(0.900);transform-origin:0 50%;">0.00</div>
<div class="t" style="left:62.1px;top:962.0px;font-size:14px;color:#88888c;transform:scaleX(0.950);transform-origin:0 50%;">R</div>
<div class="abs" style="left:88.4px;top:939.5px;width:31.8px;height:24px;background:#1a1a1d;border:1px solid #0d0d0f;border-radius:2px;"></div>
<div class="t" style="left:91.5px;top:942.0px;font-size:14px;color:#e6e6e6;transform:scaleX(0.900);transform-origin:0 50%;">0.00</div>
<div class="t" style="left:98.7px;top:962.0px;font-size:14px;color:#88888c;transform:scaleX(0.950);transform-origin:0 50%;">G</div>
<div class="abs" style="left:125.4px;top:939.5px;width:31.8px;height:24px;background:#1a1a1d;border:1px solid #0d0d0f;border-radius:2px;"></div>
<div class="t" style="left:128.5px;top:942.0px;font-size:14px;color:#e6e6e6;transform:scaleX(0.900);transform-origin:0 50%;">0.00</div>
<div class="t" style="left:136.5px;top:962.0px;font-size:14px;color:#88888c;transform:scaleX(0.950);transform-origin:0 50%;">B</div>
<div class="abs" style="left:197.5px;top:939.5px;width:31.8px;height:24px;background:#1a1a1d;border:1px solid #0d0d0f;border-radius:2px;"></div>
<div class="t" style="left:200.6px;top:942.0px;font-size:14px;color:#e6e6e6;transform:scaleX(0.900);transform-origin:0 50%;">0.00</div>
<div class="t" style="left:208.6px;top:962.0px;font-size:14px;color:#88888c;transform:scaleX(0.950);transform-origin:0 50%;">Y</div>
<div class="abs" style="left:234.5px;top:939.5px;width:31.8px;height:24px;background:#1a1a1d;border:1px solid #0d0d0f;border-radius:2px;"></div>
<div class="t" style="left:237.6px;top:942.0px;font-size:14px;color:#e6e6e6;transform:scaleX(0.900);transform-origin:0 50%;">0.00</div>
<div class="t" style="left:245.2px;top:962.0px;font-size:14px;color:#88888c;transform:scaleX(0.950);transform-origin:0 50%;">R</div>
<div class="abs" style="left:271.5px;top:939.5px;width:31.8px;height:24px;background:#1a1a1d;border:1px solid #0d0d0f;border-radius:2px;"></div>
<div class="t" style="left:274.6px;top:942.0px;font-size:14px;color:#e6e6e6;transform:scaleX(0.900);transform-origin:0 50%;">0.00</div>
<div class="t" style="left:281.8px;top:962.0px;font-size:14px;color:#88888c;transform:scaleX(0.950);transform-origin:0 50%;">G</div>
<div class="abs" style="left:308.5px;top:939.5px;width:31.8px;height:24px;background:#1a1a1d;border:1px solid #0d0d0f;border-radius:2px;"></div>
<div class="t" style="left:311.6px;top:942.0px;font-size:14px;color:#e6e6e6;transform:scaleX(0.900);transform-origin:0 50%;">0.00</div>
<div class="t" style="left:319.6px;top:962.0px;font-size:14px;color:#88888c;transform:scaleX(0.950);transform-origin:0 50%;">B</div>
<div class="abs" style="left:379.6px;top:939.5px;width:31.8px;height:24px;background:#1a1a1d;border:1px solid #0d0d0f;border-radius:2px;"></div>
<div class="t" style="left:382.7px;top:942.0px;font-size:14px;color:#e6e6e6;transform:scaleX(0.900);transform-origin:0 50%;">1.00</div>
<div class="t" style="left:390.7px;top:962.0px;font-size:14px;color:#88888c;transform:scaleX(0.950);transform-origin:0 50%;">Y</div>
<div class="abs" style="left:416.6px;top:939.5px;width:31.8px;height:24px;background:#1a1a1d;border:1px solid #0d0d0f;border-radius:2px;"></div>
<div class="t" style="left:419.7px;top:942.0px;font-size:14px;color:#e6e6e6;transform:scaleX(0.900);transform-origin:0 50%;">1.00</div>
<div class="t" style="left:427.3px;top:962.0px;font-size:14px;color:#88888c;transform:scaleX(0.950);transform-origin:0 50%;">R</div>
<div class="abs" style="left:453.6px;top:939.5px;width:31.8px;height:24px;background:#1a1a1d;border:1px solid #0d0d0f;border-radius:2px;"></div>
<div class="t" style="left:456.7px;top:942.0px;font-size:14px;color:#e6e6e6;transform:scaleX(0.900);transform-origin:0 50%;">1.00</div>
<div class="t" style="left:463.9px;top:962.0px;font-size:14px;color:#88888c;transform:scaleX(0.950);transform-origin:0 50%;">G</div>
<div class="abs" style="left:490.6px;top:939.5px;width:31.8px;height:24px;background:#1a1a1d;border:1px solid #0d0d0f;border-radius:2px;"></div>
<div class="t" style="left:493.7px;top:942.0px;font-size:14px;color:#e6e6e6;transform:scaleX(0.900);transform-origin:0 50%;">1.00</div>
<div class="t" style="left:501.7px;top:962.0px;font-size:14px;color:#88888c;transform:scaleX(0.950);transform-origin:0 50%;">B</div>
<div class="abs" style="left:560.2px;top:939.5px;width:44.5px;height:24px;background:#1a1a1d;border:1px solid #0d0d0f;border-radius:2px;"></div>
<div class="t" style="left:566.2px;top:942.0px;font-size:14px;color:#e6e6e6;transform:scaleX(0.900);transform-origin:0 50%;">25.00</div>
<div class="t" style="left:577.4px;top:962.0px;font-size:14px;color:#88888c;transform:scaleX(0.950);transform-origin:0 50%;">R</div>
<div class="abs" style="left:610.3px;top:939.5px;width:44.5px;height:24px;background:#1a1a1d;border:1px solid #0d0d0f;border-radius:2px;"></div>
<div class="t" style="left:616.3px;top:942.0px;font-size:14px;color:#e6e6e6;transform:scaleX(0.900);transform-origin:0 50%;">25.00</div>
<div class="t" style="left:627.1px;top:962.0px;font-size:14px;color:#88888c;transform:scaleX(0.950);transform-origin:0 50%;">G</div>
<div class="abs" style="left:660.4px;top:939.5px;width:44.5px;height:24px;background:#1a1a1d;border:1px solid #0d0d0f;border-radius:2px;"></div>
<div class="t" style="left:666.4px;top:942.0px;font-size:14px;color:#e6e6e6;transform:scaleX(0.900);transform-origin:0 50%;">25.00</div>
<div class="t" style="left:678.0px;top:962.0px;font-size:14px;color:#88888c;transform:scaleX(0.950);transform-origin:0 50%;">B</div>
<svg style="left:11px;top:1002px;" width="20" height="19" viewBox="0 0 20 19"><path d="M3.500 18.500l1-3 6.500-6.500 2 2-6.500 6.500z" fill="#f0f0f0"/><path d="M10.500 7.500l4 4M11.500 8.500l3-3c1.500-1.500 3.500.5 2 2l-3 3z" stroke="#f0f0f0" stroke-width="1.500" fill="#f0f0f0"/><path d="M3.500 1.500c1.500 2 2.300 3 2.300 4.200a2.300 2.300 0 0 1-4.600 0c0-1.200.8-2.200 2.300-4.200z" fill="#f0f0f0"/></svg>
<div class="abs" style="left:40px;top:1003px;width:16px;height:16.5px;background:#8c8c90;border-radius:2.500px;"></div>
<div class="t" style="left:42.6px;top:1001.5px;font-size:13.5px;color:#2a2a2e;transform:scaleX(1.083);transform-origin:0 50%;-webkit-text-stroke:0.45px;">A</div>
<div class="abs" style="left:71px;top:1000px;width:58.5px;height:22.5px;background:#28282e;border:1px solid #3f3f44;border-radius:11.500px;"></div>
<div class="abs" style="left:100.5px;top:1001px;width:28px;height:20.5px;background:#161619;border-radius:0 10.500px 10.500px 0;"></div>
<div class="t" style="left:82.3px;top:1001.5px;font-size:14px;color:#9a9a9e;transform:scaleX(0.950);transform-origin:0 50%;">1</div>
<div class="t" style="left:109.3px;top:1001.5px;font-size:14px;color:#e8463c;transform:scaleX(0.950);transform-origin:0 50%;">2</div>
<div class="t" style="left:155.1px;top:1001.5px;font-size:14px;color:#88888c;transform:scaleX(0.968);transform-origin:0 50%;">Temp</div>
<div class="abs" style="left:193.8px;top:1001.5px;width:43.2px;height:20.5px;background:#1a1a1d;border:1px solid #0d0d0f;border-radius:2px;"></div>
<div class="t" style="left:206.1px;top:1002.2px;font-size:14px;color:#e6e6e6;transform:scaleX(0.900);transform-origin:0 50%;">0.0</div>
<div class="t" style="left:250.7px;top:1001.5px;font-size:14px;color:#88888c;transform:scaleX(0.986);transform-origin:0 50%;">Tint</div>
<div class="abs" style="left:279.3px;top:1001.5px;width:42.4px;height:20.5px;background:#1a1a1d;border:1px solid #0d0d0f;border-radius:2px;"></div>
<div class="t" style="left:287.7px;top:1002.2px;font-size:14px;color:#e6e6e6;transform:scaleX(0.900);transform-origin:0 50%;">0.00</div>
<div class="t" style="left:335.8px;top:1001.5px;font-size:14px;color:#88888c;transform:scaleX(0.951);transform-origin:0 50%;">MD</div>
<div class="abs" style="left:361.8px;top:1001.5px;width:42.4px;height:20.5px;background:#1a1a1d;border:1px solid #0d0d0f;border-radius:2px;"></div>
<div class="t" style="left:370.2px;top:1002.2px;font-size:14px;color:#e6e6e6;transform:scaleX(0.900);transform-origin:0 50%;">0.00</div>
<div class="t" style="left:418.7px;top:1001.5px;font-size:14px;color:#88888c;transform:scaleX(0.919);transform-origin:0 50%;">Col Boost</div>
<div class="abs" style="left:480.7px;top:1001.5px;width:42.7px;height:20.5px;background:#1a1a1d;border:1px solid #0d0d0f;border-radius:2px;"></div>
<div class="t" style="left:489.3px;top:1002.2px;font-size:14px;color:#e6e6e6;transform:scaleX(0.900);transform-origin:0 50%;">0.00</div>
<div class="t" style="left:537.5px;top:1001.5px;font-size:14px;color:#88888c;transform:scaleX(0.896);transform-origin:0 50%;">Shad</div>
<div class="abs" style="left:572.5px;top:1001.5px;width:42.8px;height:20.5px;background:#1a1a1d;border:1px solid #0d0d0f;border-radius:2px;"></div>
<div class="t" style="left:576.0px;top:1002.2px;font-size:14px;color:#e6e6e6;transform:scaleX(0.900);transform-origin:0 50%;">-11.50</div>
<div class="t" style="left:630.2px;top:1001.5px;font-size:14px;color:#88888c;transform:scaleX(0.877);transform-origin:0 50%;">HL</div>
<div class="abs" style="left:652.4px;top:1001.5px;width:42px;height:20.5px;background:#1a1a1d;border:1px solid #0d0d0f;border-radius:2px;"></div>
<div class="t" style="left:660.6px;top:1002.2px;font-size:14px;color:#e6e6e6;transform:scaleX(0.900);transform-origin:0 50%;">1.00</div>
<!-- 70_curves -->
<div class="abs" style="left:721px;top:737px;width:718px;height:293px;background:#28282e;"></div>
<div class="abs" style="left:1439px;top:710px;width:2px;height:320px;background:#0c0c0e;"></div>
<div class="t" style="left:727.5px;top:713.5px;font-size:14px;color:#f0f0f0;transform:scaleX(0.947);transform-origin:0 50%;-webkit-text-stroke:0.45px;">Curves</div>
<svg style="left:1023.3px;top:719px;" width="110" height="9" viewBox="0 0 110 9"><circle cx="4.500" cy="4.500" r="3.400" fill="#f4f4f4"/><circle cx="23.45" cy="4.500" r="3" fill="#303035"/><circle cx="42.4" cy="4.500" r="3" fill="#303035"/><circle cx="61.35" cy="4.500" r="3" fill="#303035"/><circle cx="80.3" cy="4.500" r="3" fill="#303035"/><circle cx="99.25" cy="4.500" r="3" fill="#303035"/></svg>
<div class="t" style="left:1293.8px;top:713.0px;font-size:14px;color:#ededed;transform:scaleX(0.983);transform-origin:0 50%;-webkit-text-stroke:0.45px;">Custom</div>
<svg style="left:1347.5px;top:720px;" width="11" height="8" viewBox="0 0 11 8"><path d="M1 1l4.500 5 4.500-5" fill="none" stroke="#8e8e92" stroke-width="1.400"/></svg>
<div class="abs" style="left:1366px;top:711px;width:1px;height:25px;background:#0f0f11;"></div>
<div class="abs" style="left:1403px;top:711px;width:1px;height:25px;background:#0f0f11;"></div>
<svg style="left:1376px;top:715px;" width="17" height="16" viewBox="0 0 17 16"><path d="M3.500 4.800A6 6 0 1 1 2.500 8.500" fill="none" stroke="#6e6e72" stroke-width="1.300"/><path d="M2.600 1.500v3.800h3.800" fill="none" stroke="#6e6e72" stroke-width="1.300"/><path d="M8.500 5.500v5M6 8h5" stroke="#6e6e72" stroke-width="1.200"/></svg>
<svg style="left:1410.5px;top:720.2px;" width="20" height="6" viewBox="0 0 20 6"><circle cx="3" cy="3" r="2" fill="#8c8c90"/><circle cx="10" cy="3" r="2" fill="#8c8c90"/><circle cx="17" cy="3" r="2" fill="#8c8c90"/></svg>
<div class="abs" style="left:739.5px;top:756.5px;width:439px;height:252px;background:#27272d;border:1px solid #1b1b1f;"></div>
<svg style="left:0px;top:0px;" width="1920" height="1080" viewBox="0 0 1920 1080"><path d="M758.5 757.5V1007.5" stroke="#2d2d33" stroke-width="1"/><path d="M776.5 757.5V1007.5" stroke="#2d2d33" stroke-width="1"/><path d="M793.5 757.5V1007.5" stroke="#2d2d33" stroke-width="1"/><path d="M811.5 757.5V1007.5" stroke="#2d2d33" stroke-width="1"/><path d="M828.5 757.5V1007.5" stroke="#37373d" stroke-width="1"/><path d="M846.5 757.5V1007.5" stroke="#2d2d33" stroke-width="1"/><path d="M863.5 757.5V1007.5" stroke="#2d2d33" stroke-width="1"/><path d="M881.5 757.5V1007.5" stroke="#2d2d33" stroke-width="1"/><path d="M898.5 757.5V1007.5" stroke="#2d2d33" stroke-width="1"/><path d="M916.5 757.5V1007.5" stroke="#37373d" stroke-width="1"/><path d="M933.5 757.5V1007.5" stroke="#2d2d33" stroke-width="1"/><path d="M951.5 757.5V1007.5" stroke="#2d2d33" stroke-width="1"/><path d="M968.5 757.5V1007.5" stroke="#2d2d33" stroke-width="1"/><path d="M986.5 757.5V1007.5" stroke="#2d2d33" stroke-width="1"/><path d="M1003.5 757.5V1007.5" stroke="#37373d" stroke-width="1"/><path d="M1021.5 757.5V1007.5" stroke="#2d2d33" stroke-width="1"/><path d="M1038.5 757.5V1007.5" stroke="#2d2d33" stroke-width="1"/><path d="M1056.5 757.5V1007.5" stroke="#2d2d33" stroke-width="1"/><path d="M1073.5 757.5V1007.5" stroke="#2d2d33" stroke-width="1"/><path d="M1091.5 757.5V1007.5" stroke="#37373d" stroke-width="1"/><path d="M1108.5 757.5V1007.5" stroke="#2d2d33" stroke-width="1"/><path d="M1126.5 757.5V1007.5" stroke="#2d2d33" stroke-width="1"/><path d="M1143.5 757.5V1007.5" stroke="#2d2d33" stroke-width="1"/><path d="M1161.5 757.5V1007.5" stroke="#2d2d33" stroke-width="1"/><path d="M740.5 768.5H1177.5" stroke="#2d2d33" stroke-width="1"/><path d="M740.5 778.5H1177.5" stroke="#2d2d33" stroke-width="1"/><path d="M740.5 788.5H1177.5" stroke="#2d2d33" stroke-width="1"/><path d="M740.5 798.5H1177.5" stroke="#2d2d33" stroke-width="1"/><path d="M740.5 808.5H1177.5" stroke="#37373d" stroke-width="1"/><path d="M740.5 818.5H1177.5" stroke="#2d2d33" stroke-width="1"/><path d="M740.5 828.5H1177.5" stroke="#2d2d33" stroke-width="1"/><path d="M740.5 838.5H1177.5" stroke="#2d2d33" stroke-width="1"/><path d="M740.5 848.5H1177.5" stroke="#2d2d33" stroke-width="1"/><path d="M740.5 858.5H1177.5" stroke="#37373d" stroke-width="1"/><path d="M740.5 868.5H1177.5" stroke="#2d2d33" stroke-width="1"/><path d="M740.5 878.5H1177.5" stroke="#2d2d33" stroke-width="1"/><path d="M740.5 888.5H1177.5" stroke="#2d2d33" stroke-width="1"/><path d="M740.5 898.5H1177.5" stroke="#2d2d33" stroke-width="1"/><path d="M740.5 908.5H1177.5" stroke="#37373d" stroke-width="1"/><path d="M740.5 918.5H1177.5" stroke="#2d2d33" stroke-width="1"/><path d="M740.5 928.5H1177.5" stroke="#2d2d33" stroke-width="1"/><path d="M740.5 938.5H1177.5" stroke="#2d2d33" stroke-width="1"/><path d="M740.5 948.5H1177.5" stroke="#2d2d33" stroke-width="1"/><path d="M740.5 958.5H1177.5" stroke="#37373d" stroke-width="1"/><path d="M740.5 968.5H1177.5" stroke="#2d2d33" stroke-width="1"/><path d="M740.5 978.5H1177.5" stroke="#2d2d33" stroke-width="1"/><path d="M740.5 988.5H1177.5" stroke="#2d2d33" stroke-width="1"/><path d="M740.5 998.5H1177.5" stroke="#2d2d33" stroke-width="1"/><path d="M928.9 1001.4L929.9 1001.3L930.9 1000.7L931.9 1000.5L932.9 1000.1L933.9 999.8L934.9 999.5L935.9 999.3L936.9 999.0L937.9 998.8L938.9 998.4L939.9 998.2L940.9 997.7L941.9 997.7L942.9 996.9L943.9 997.0L944.9 996.5L945.9 996.3L946.9 995.6L947.9 995.0L948.9 994.4L949.9 993.2L950.9 991.3L951.9 990.1L952.9 988.7L953.9 987.2L954.9 985.1L955.9 983.5L956.9 981.8L957.9 980.1L958.9 976.4L959.9 973.3L960.9 970.2L961.9 966.1L962.9 962.6L963.9 958.2L964.9 954.0L965.9 948.7L966.9 941.3L967.9 935.8L968.9 929.5L969.9 922.5L970.9 914.8L971.9 908.7L972.9 899.7L973.9 892.4L974.9 885.2L975.9 875.4L976.9 867.0L977.9 858.2L978.9 849.6L979.9 843.4L980.9 833.8L981.9 825.9L982.9 818.7L983.9 809.2L984.9 803.4L985.9 794.4L986.9 789.3L987.9 783.2L988.9 774.8L989.9 771.7L990.9 770.9L991.9 769.4L992.9 767.8L993.9 769.1L994.9 768.1L995.9 765.7L996.9 766.2L997.9 763.6L998.9 764.3L999.9 760.6L1000.9 760.9L1001.9 764.6L1002.9 764.2L1003.9 765.5L1004.9 772.7L1005.9 775.9L1006.9 785.5L1007.9 794.6L1008.9 804.9L1009.9 813.3L1010.9 822.7L1011.9 829.8L1012.9 837.2L1013.9 845.7L1014.9 849.9L1015.9 856.6L1016.9 861.0L1017.9 866.8L1018.9 872.4L1019.9 882.1L1020.9 888.8L1021.9 896.3L1022.9 901.9L1023.9 905.8L1024.9 910.2L1025.9 912.0L1026.9 913.3L1027.9 916.8L1028.9 918.3L1029.9 920.5L1030.9 922.3L1031.9 921.4L1032.9 921.7L1033.9 920.2L1034.9 918.4L1035.9 920.0L1036.9 919.9L1037.9 921.1L1038.9 920.5L1039.9 922.3L1040.9 926.3L1041.9 929.2L1042.9 931.5L1043.9 935.6L1044.9 937.9L1045.9 939.7L1046.9 940.5L1047.9 940.6L1048.9 941.3L1049.9 942.1L1050.9 942.7L1051.9 943.5L1052.9 944.7L1053.9 944.2L1054.9 943.7L1055.9 943.7L1056.9 943.0L1057.9 944.6L1058.9 946.8L1059.9 948.5L1060.9 948.0L1061.9 946.6L1062.9 947.5L1063.9 947.9L1064.9 951.8L1065.9 956.6L1066.9 964.7L1067.9 972.8L1068.9 979.7L1069.9 984.4L1070.9 987.9L1071.9 990.9L1072.9 993.4L1073.9 995.4L1074.9 996.9L1075.9 998.2L1076.9 999.1L1077.9 999.7L1078.9 1000.4L1078.9 1002L928.9 1002Z" fill="#6e3a3a" fill-opacity="0.550" stroke="#b0584f" stroke-width="1" stroke-opacity="0.850"/><path d="M969.8 1000.8L970.8 999.5L971.8 998.3L972.8 996.7L973.8 995.0L974.8 993.3L975.8 991.6L976.8 990.3L977.8 988.3L978.8 986.1L979.8 983.4L980.8 979.6L981.8 974.9L982.8 970.8L983.8 965.9L984.8 962.1L985.8 957.7L986.8 952.7L987.8 948.5L988.8 942.4L989.8 937.2L990.8 930.2L991.8 924.2L992.8 916.9L993.8 910.2L994.8 904.3L995.8 896.1L996.8 887.4L997.8 878.4L998.8 868.8L999.8 859.2L1000.8 848.3L1001.8 839.8L1002.8 829.6L1003.8 820.5L1004.8 811.6L1005.8 804.9L1006.8 796.2L1007.8 786.6L1008.8 781.8L1009.8 777.2L1010.8 771.1L1011.8 770.0L1012.8 765.8L1013.8 766.0L1014.8 765.5L1015.8 766.2L1016.8 768.6L1017.8 769.1L1018.8 773.2L1019.8 774.3L1020.8 775.6L1021.8 780.0L1022.8 785.2L1023.8 786.4L1024.8 787.9L1025.8 792.1L1026.8 796.1L1027.8 806.8L1028.8 817.1L1029.8 828.6L1030.8 840.4L1031.8 852.4L1032.8 861.4L1033.8 871.4L1034.8 880.7L1035.8 887.6L1036.8 893.1L1037.8 899.9L1038.8 901.6L1039.8 902.7L1040.8 902.5L1041.8 902.8L1042.8 904.9L1043.8 908.7L1044.8 911.9L1045.8 914.4L1046.8 916.5L1047.8 920.1L1048.8 920.9L1049.8 923.5L1050.8 925.7L1051.8 931.1L1052.8 935.7L1053.8 941.1L1054.8 946.1L1055.8 951.1L1056.8 956.4L1057.8 961.6L1058.8 965.0L1059.8 969.0L1060.8 972.0L1061.8 975.7L1062.8 978.6L1063.8 981.2L1064.8 984.3L1065.8 987.0L1066.8 989.2L1067.8 990.6L1068.8 992.6L1069.8 994.1L1070.8 995.2L1071.8 997.0L1072.8 998.2L1073.8 999.2L1074.8 999.7L1075.8 1000.0L1076.8 1000.8L1077.8 1001.0L1078.8 1001.1L1078.8 1002L969.8 1002Z" fill="#2f5e31" fill-opacity="0.800" stroke="#3f7a40" stroke-width="1"/><path d="M746.0 1001.8L747.0 1001.8L748.0 1001.8L749.0 1001.8L750.0 1001.8L751.0 1001.6L752.0 1001.7L753.0 1001.3L754.0 1001.4L755.0 1001.3L756.0 1001.4L757.0 1001.1L758.0 1001.3L759.0 1001.2L760.0 1000.9L761.0 1001.0L762.0 1000.8L763.0 1000.9L764.0 1000.8L765.0 1001.1L766.0 1000.9L767.0 1001.1L768.0 1001.0L769.0 1001.0L770.0 1000.8L771.0 1000.8L772.0 1000.9L773.0 1000.8L774.0 1001.0L775.0 1000.8L776.0 1000.9L777.0 1001.0L778.0 1000.9L779.0 1000.7L780.0 1000.7L781.0 1000.8L782.0 1000.8L783.0 1000.9L784.0 1000.8L785.0 1000.8L786.0 1000.8L787.0 1000.8L788.0 1000.9L789.0 1000.7L790.0 1000.7L791.0 1000.7L792.0 1000.8L793.0 1000.6L794.0 1000.7L795.0 1000.7L796.0 1000.8L797.0 1000.6L798.0 1000.7L799.0 1000.6L800.0 1000.7L801.0 1000.6L802.0 1000.8L803.0 1000.6L804.0 1000.7L805.0 1000.6L806.0 1000.7L807.0 1000.6L808.0 1000.5L809.0 1000.6L810.0 1000.7L811.0 1000.7L812.0 1000.6L813.0 1000.4L814.0 1000.6L815.0 1000.5L816.0 1000.6L817.0 1000.6L818.0 1000.5L819.0 1000.5L820.0 1000.4L821.0 1000.5L822.0 1000.4L823.0 1000.5L824.0 1000.4L825.0 1000.5L826.0 1000.3L827.0 1000.3L828.0 1000.5L829.0 1000.4L830.0 1000.4L831.0 1000.5L832.0 1000.4L833.0 1000.5L834.0 1000.4L835.0 1000.5L836.0 1000.4L837.0 1000.2L838.0 1000.3L839.0 1000.5L840.0 1000.3L841.0 1000.2L842.0 1000.3L843.0 1000.3L844.0 1000.3L845.0 1000.3L846.0 1000.2L847.0 1000.2L848.0 1000.2L849.0 1000.4L850.0 1000.4L851.0 1000.3L852.0 1000.1L853.0 1000.3L854.0 1000.3L855.0 1000.3L856.0 1000.2L857.0 1000.1L858.0 1000.2L859.0 1000.1L860.0 1000.2L861.0 1000.3L862.0 1000.1L863.0 1000.3L864.0 1000.0L865.0 1000.3L866.0 1000.1L867.0 1000.2L868.0 1000.2L869.0 1000.2L870.0 1000.2L871.0 999.9L872.0 999.9L873.0 1000.1L874.0 999.9L875.0 1000.1L876.0 1000.0L877.0 1000.1L878.0 1000.0L879.0 999.9L880.0 1000.1L881.0 1000.0L882.0 999.6L883.0 999.6L884.0 999.6L885.0 999.4L886.0 999.4L887.0 999.4L888.0 999.1L889.0 999.2L890.0 999.0L891.0 998.9L892.0 998.7L893.0 998.6L894.0 998.7L895.0 998.6L896.0 998.2L897.0 998.1L898.0 998.2L899.0 998.2L900.0 997.8L901.0 998.0L902.0 998.0L903.0 997.9L904.0 997.7L905.0 997.7L906.0 997.6L907.0 997.7L908.0 997.5L909.0 997.4L910.0 997.6L911.0 997.5L912.0 997.5L913.0 997.4L914.0 997.1L915.0 997.1L916.0 997.2L917.0 997.2L918.0 997.2L919.0 997.1L920.0 997.1L921.0 996.8L922.0 996.8L923.0 996.7L924.0 996.5L925.0 996.3L926.0 995.9L927.0 995.7L928.0 995.2L929.0 995.0L930.0 994.8L931.0 994.3L932.0 994.0L933.0 993.6L934.0 993.4L935.0 992.9L936.0 992.6L937.0 992.1L938.0 991.9L939.0 991.3L940.0 990.9L941.0 990.4L942.0 989.2L943.0 988.3L944.0 987.1L945.0 985.5L946.0 984.3L947.0 982.9L948.0 982.1L949.0 980.6L950.0 979.4L951.0 978.2L952.0 977.1L953.0 976.5L954.0 976.4L955.0 977.6L956.0 979.3L957.0 981.7L958.0 984.2L959.0 986.2L960.0 988.7L961.0 990.5L962.0 992.5L963.0 993.8L964.0 994.6L965.0 994.8L966.0 994.8L967.0 995.0L968.0 995.2L969.0 995.2L970.0 995.4L971.0 995.5L972.0 995.1L973.0 994.6L974.0 993.6L975.0 992.7L976.0 991.9L977.0 990.8L978.0 989.7L979.0 988.6L980.0 987.6L981.0 986.2L982.0 984.4L983.0 981.9L984.0 978.7L985.0 975.9L986.0 972.4L987.0 969.2L988.0 966.0L989.0 962.4L990.0 958.9L991.0 955.1L992.0 951.0L993.0 944.6L994.0 938.8L995.0 933.0L996.0 926.5L997.0 919.6L998.0 914.3L999.0 907.5L1000.0 900.5L1001.0 893.3L1002.0 885.1L1003.0 874.7L1004.0 865.8L1005.0 855.7L1006.0 845.0L1007.0 835.5L1008.0 825.5L1009.0 816.2L1010.0 809.1L1011.0 800.7L1012.0 793.7L1013.0 784.4L1014.0 778.2L1015.0 773.4L1016.0 767.6L1017.0 765.6L1018.0 765.4L1019.0 765.2L1020.0 768.1L1021.0 772.2L1022.0 775.6L1023.0 780.8L1024.0 784.6L1025.0 788.1L1026.0 790.3L1027.0 792.8L1028.0 798.3L1029.0 804.8L1030.0 815.2L1031.0 827.6L1032.0 840.5L1033.0 851.2L1034.0 859.8L1035.0 870.4L1036.0 878.8L1037.0 886.7L1038.0 895.1L1039.0 902.0L1040.0 909.2L1041.0 915.9L1042.0 921.6L1043.0 927.2L1044.0 932.1L1045.0 936.2L1046.0 940.7L1047.0 943.3L1048.0 945.2L1049.0 946.5L1050.0 947.0L1051.0 947.5L1052.0 949.4L1053.0 952.1L1054.0 954.9L1055.0 958.8L1056.0 961.7L1057.0 964.9L1058.0 968.3L1059.0 970.7L1060.0 972.1L1061.0 973.6L1062.0 974.7L1063.0 975.3L1064.0 976.7L1065.0 977.6L1066.0 979.1L1067.0 980.8L1068.0 983.1L1069.0 985.7L1070.0 987.7L1071.0 989.9L1072.0 992.5L1073.0 994.5L1074.0 995.9L1075.0 997.3L1076.0 998.4L1077.0 999.3L1078.0 1000.2L1079.0 1000.7L1079.0 1002L746.0 1002Z" fill="#3a4a70" fill-opacity="0.200" stroke="#5b7cc0" stroke-width="1.100"/><path d="M960.0 1000.8L961.0 1000.8L962.0 1000.8L963.0 1000.8L964.0 1000.8L965.0 1000.8L966.0 1000.8L967.0 1000.8L968.0 1000.8L969.0 1000.8L970.0 1000.6L971.0 999.3L972.0 998.0L973.0 996.3L974.0 994.7L975.0 993.0L976.0 991.9L977.0 990.8L978.0 989.7L979.0 988.6L980.0 987.6L981.0 986.2L982.0 984.4L983.0 981.9L984.0 978.7L985.0 975.9L986.0 972.4L987.0 969.2L988.0 966.0L989.0 962.4L990.0 958.9L991.0 955.1L992.0 951.0L993.0 944.6L994.0 938.8L995.0 933.0L996.0 926.5L997.0 919.6L998.0 914.3L999.0 907.5L1000.0 900.5L1001.0 893.3L1002.0 885.1L1003.0 874.7L1004.0 865.8L1005.0 855.7L1006.0 845.0L1007.0 835.5L1008.0 825.5L1009.0 816.2L1010.0 814.3L1011.0 823.5L1012.0 830.6L1013.0 838.2L1014.0 846.2L1015.0 850.6L1016.0 857.1L1017.0 861.6L1018.0 867.4L1019.0 873.5L1020.0 882.9L1021.0 889.6L1022.0 897.0L1023.0 902.4L1024.0 906.3L1025.0 910.4L1026.0 912.1L1027.0 913.7L1028.0 916.9L1029.0 918.6L1030.0 920.7L1031.0 922.2L1032.0 921.5L1033.0 921.6L1034.0 920.0L1035.0 918.6L1036.0 920.0L1037.0 920.0L1038.0 921.0L1039.0 920.7L1040.0 922.7L1041.0 926.7L1042.0 929.4L1043.0 932.0L1044.0 935.9L1045.0 938.1L1046.0 940.7L1047.0 943.3L1048.0 945.2L1049.0 947.5L1050.0 952.9L1051.0 957.9L1052.0 962.1L1053.0 965.7L1054.0 969.0L1055.0 971.8L1056.0 974.7L1057.0 977.4L1058.0 979.7L1059.0 982.2L1060.0 984.4L1061.0 986.7L1062.0 989.0L1063.0 991.2L1064.0 992.9L1065.0 994.3L1066.0 995.5L1067.0 996.5L1068.0 997.4L1069.0 998.5L1070.0 999.3L1071.0 1000.1L1072.0 1000.4L1073.0 1000.7L1074.0 1000.8L1075.0 1001.0L1076.0 1001.1L1077.0 1001.2L1078.0 1001.4L1079.0 1001.6L1079.0 1002L960.0 1002Z" fill="#5c5c60" fill-opacity="0.900"/><path d="M928.9 1001.4L929.9 1001.3L930.9 1000.7L931.9 1000.5L932.9 1000.1L933.9 999.8L934.9 999.5L935.9 999.3L936.9 999.0L937.9 998.8L938.9 998.4L939.9 998.2L940.9 997.7L941.9 997.7L942.9 996.9L943.9 997.0L944.9 996.5L945.9 996.3L946.9 995.6L947.9 995.0L948.9 994.4L949.9 993.2L950.9 991.3L951.9 990.1L952.9 988.7L953.9 987.2L954.9 985.1L955.9 983.5L956.9 981.8L957.9 980.1L958.9 976.4L959.9 973.3L960.9 970.2L961.9 966.1L962.9 962.6L963.9 958.2L964.9 954.0L965.9 948.7L966.9 941.3L967.9 935.8L968.9 929.5L969.9 922.5L970.9 914.8L971.9 908.7L972.9 899.7L973.9 892.4L974.9 885.2L975.9 875.4L976.9 867.0L977.9 858.2L978.9 849.6L979.9 843.4L980.9 833.8L981.9 825.9L982.9 818.7L983.9 809.2L984.9 803.4L985.9 794.4L986.9 789.3L987.9 783.2L988.9 774.8L989.9 771.7L990.9 770.9L991.9 769.4L992.9 767.8L993.9 769.1L994.9 768.1L995.9 765.7L996.9 766.2L997.9 763.6L998.9 764.3L999.9 760.6L1000.9 760.9L1001.9 764.6L1002.9 764.2L1003.9 765.5L1004.9 772.7L1005.9 775.9L1006.9 785.5L1007.9 794.6L1008.9 804.9L1009.9 813.3L1010.9 822.7L1011.9 829.8L1012.9 837.2L1013.9 845.7L1014.9 849.9L1015.9 856.6L1016.9 861.0L1017.9 866.8L1018.9 872.4L1019.9 882.1L1020.9 888.8L1021.9 896.3L1022.9 901.9L1023.9 905.8L1024.9 910.2L1025.9 912.0L1026.9 913.3L1027.9 916.8L1028.9 918.3L1029.9 920.5L1030.9 922.3L1031.9 921.4L1032.9 921.7L1033.9 920.2L1034.9 918.4L1035.9 920.0L1036.9 919.9L1037.9 921.1L1038.9 920.5L1039.9 922.3L1040.9 926.3L1041.9 929.2L1042.9 931.5L1043.9 935.6L1044.9 937.9L1045.9 939.7L1046.9 940.5L1047.9 940.6L1048.9 941.3L1049.9 942.1L1050.9 942.7L1051.9 943.5L1052.9 944.7L1053.9 944.2L1054.9 943.7L1055.9 943.7L1056.9 943.0L1057.9 944.6L1058.9 946.8L1059.9 948.5L1060.9 948.0L1061.9 946.6L1062.9 947.5L1063.9 947.9L1064.9 951.8L1065.9 956.6L1066.9 964.7L1067.9 972.8L1068.9 979.7L1069.9 984.4L1070.9 987.9L1071.9 990.9L1072.9 993.4L1073.9 995.4L1074.9 996.9L1075.9 998.2L1076.9 999.1L1077.9 999.7L1078.9 1000.4" fill="none" stroke="#b0584f" stroke-width="0.900" stroke-opacity="0.700"/><path d="M746.0 1001.8L747.0 1001.8L748.0 1001.8L749.0 1001.8L750.0 1001.8L751.0 1001.6L752.0 1001.7L753.0 1001.3L754.0 1001.4L755.0 1001.3L756.0 1001.4L757.0 1001.1L758.0 1001.3L759.0 1001.2L760.0 1000.9L761.0 1001.0L762.0 1000.8L763.0 1000.9L764.0 1000.8L765.0 1001.1L766.0 1000.9L767.0 1001.1L768.0 1001.0L769.0 1001.0L770.0 1000.8L771.0 1000.8L772.0 1000.9L773.0 1000.8L774.0 1001.0L775.0 1000.8L776.0 1000.9L777.0 1001.0L778.0 1000.9L779.0 1000.7L780.0 1000.7L781.0 1000.8L782.0 1000.8L783.0 1000.9L784.0 1000.8L785.0 1000.8L786.0 1000.8L787.0 1000.8L788.0 1000.9L789.0 1000.7L790.0 1000.7L791.0 1000.7L792.0 1000.8L793.0 1000.6L794.0 1000.7L795.0 1000.7L796.0 1000.8L797.0 1000.6L798.0 1000.7L799.0 1000.6L800.0 1000.7L801.0 1000.6L802.0 1000.8L803.0 1000.6L804.0 1000.7L805.0 1000.6L806.0 1000.7L807.0 1000.6L808.0 1000.5L809.0 1000.6L810.0 1000.7L811.0 1000.7L812.0 1000.6L813.0 1000.4L814.0 1000.6L815.0 1000.5L816.0 1000.6L817.0 1000.6L818.0 1000.5L819.0 1000.5L820.0 1000.4L821.0 1000.5L822.0 1000.4L823.0 1000.5L824.0 1000.4L825.0 1000.5L826.0 1000.3L827.0 1000.3L828.0 1000.5L829.0 1000.4L830.0 1000.4L831.0 1000.5L832.0 1000.4L833.0 1000.5L834.0 1000.4L835.0 1000.5L836.0 1000.4L837.0 1000.2L838.0 1000.3L839.0 1000.5L840.0 1000.3L841.0 1000.2L842.0 1000.3L843.0 1000.3L844.0 1000.3L845.0 1000.3L846.0 1000.2L847.0 1000.2L848.0 1000.2L849.0 1000.4L850.0 1000.4L851.0 1000.3L852.0 1000.1L853.0 1000.3L854.0 1000.3L855.0 1000.3L856.0 1000.2L857.0 1000.1L858.0 1000.2L859.0 1000.1L860.0 1000.2L861.0 1000.3L862.0 1000.1L863.0 1000.3L864.0 1000.0L865.0 1000.3L866.0 1000.1L867.0 1000.2L868.0 1000.2L869.0 1000.2L870.0 1000.2L871.0 999.9L872.0 999.9L873.0 1000.1L874.0 999.9L875.0 1000.1L876.0 1000.0L877.0 1000.1L878.0 1000.0L879.0 999.9L880.0 1000.1L881.0 1000.0L882.0 999.6L883.0 999.6L884.0 999.6L885.0 999.4L886.0 999.4L887.0 999.4L888.0 999.1L889.0 999.2L890.0 999.0L891.0 998.9L892.0 998.7L893.0 998.6L894.0 998.7L895.0 998.6L896.0 998.2L897.0 998.1L898.0 998.2L899.0 998.2L900.0 997.8L901.0 998.0L902.0 998.0L903.0 997.9L904.0 997.7L905.0 997.7L906.0 997.6L907.0 997.7L908.0 997.5L909.0 997.4L910.0 997.6L911.0 997.5L912.0 997.5L913.0 997.4L914.0 997.1L915.0 997.1L916.0 997.2L917.0 997.2L918.0 997.2L919.0 997.1L920.0 997.1L921.0 996.8L922.0 996.8L923.0 996.7L924.0 996.5L925.0 996.3L926.0 995.9L927.0 995.7L928.0 995.2L929.0 995.0L930.0 994.8L931.0 994.3L932.0 994.0L933.0 993.6L934.0 993.4L935.0 992.9L936.0 992.6L937.0 992.1L938.0 991.9L939.0 991.3L940.0 990.9L941.0 990.4L942.0 989.2L943.0 988.3L944.0 987.1L945.0 985.5L946.0 984.3L947.0 982.9L948.0 982.1L949.0 980.6L950.0 979.4L951.0 978.2L952.0 977.1L953.0 976.5L954.0 976.4L955.0 977.6L956.0 979.3L957.0 981.7L958.0 984.2L959.0 986.2L960.0 988.7L961.0 990.5L962.0 992.5L963.0 993.8L964.0 994.6L965.0 994.8L966.0 994.8L967.0 995.0L968.0 995.2L969.0 995.2L970.0 995.4L971.0 995.5L972.0 995.1L973.0 994.6L974.0 993.6L975.0 992.7L976.0 991.9L977.0 990.8L978.0 989.7L979.0 988.6L980.0 987.6L981.0 986.2L982.0 984.4L983.0 981.9L984.0 978.7L985.0 975.9L986.0 972.4L987.0 969.2L988.0 966.0L989.0 962.4L990.0 958.9L991.0 955.1L992.0 951.0L993.0 944.6L994.0 938.8L995.0 933.0L996.0 926.5L997.0 919.6L998.0 914.3L999.0 907.5L1000.0 900.5L1001.0 893.3L1002.0 885.1L1003.0 874.7L1004.0 865.8L1005.0 855.7L1006.0 845.0L1007.0 835.5L1008.0 825.5L1009.0 816.2L1010.0 809.1L1011.0 800.7L1012.0 793.7L1013.0 784.4L1014.0 778.2L1015.0 773.4L1016.0 767.6L1017.0 765.6L1018.0 765.4L1019.0 765.2L1020.0 768.1L1021.0 772.2L1022.0 775.6L1023.0 780.8L1024.0 784.6L1025.0 788.1L1026.0 790.3L1027.0 792.8L1028.0 798.3L1029.0 804.8L1030.0 815.2L1031.0 827.6L1032.0 840.5L1033.0 851.2L1034.0 859.8L1035.0 870.4L1036.0 878.8L1037.0 886.7L1038.0 895.1L1039.0 902.0L1040.0 909.2L1041.0 915.9L1042.0 921.6L1043.0 927.2L1044.0 932.1L1045.0 936.2L1046.0 940.7L1047.0 943.3L1048.0 945.2L1049.0 946.5L1050.0 947.0L1051.0 947.5L1052.0 949.4L1053.0 952.1L1054.0 954.9L1055.0 958.8L1056.0 961.7L1057.0 964.9L1058.0 968.3L1059.0 970.7L1060.0 972.1L1061.0 973.6L1062.0 974.7L1063.0 975.3L1064.0 976.7L1065.0 977.6L1066.0 979.1L1067.0 980.8L1068.0 983.1L1069.0 985.7L1070.0 987.7L1071.0 989.9L1072.0 992.5L1073.0 994.5L1074.0 995.9L1075.0 997.3L1076.0 998.4L1077.0 999.3L1078.0 1000.2L1079.0 1000.7" fill="none" stroke="#5b7cc0" stroke-width="0.900" stroke-opacity="0.800"/><path d="M747.0 1001.6L748.0 1001.6L749.0 1001.6L750.0 1001.6L751.0 1001.7L752.0 1001.7L753.0 1001.5L754.0 1001.5L755.0 1001.5L756.0 1001.6L757.0 1001.5L758.0 1001.6L759.0 1001.6L760.0 1001.6L761.0 1001.6L762.0 1001.6L763.0 1001.5L764.0 1001.6L765.0 1001.6L766.0 1001.6L767.0 1001.6L768.0 1001.6L769.0 1001.6L770.0 1001.5L771.0 1001.6L772.0 1001.6L773.0 1001.6L774.0 1001.5L775.0 1001.6L776.0 1001.7L777.0 1001.7L778.0 1001.6L779.0 1001.7L780.0 1001.7L781.0 1001.6L782.0 1001.5L783.0 1001.6L784.0 1001.6L785.0 1001.6L786.0 1001.5L787.0 1001.6L788.0 1001.6L789.0 1001.5L790.0 1001.6L791.0 1001.6L792.0 1001.7L793.0 1001.6L794.0 1001.5L795.0 1001.5L796.0 1001.6L797.0 1001.5L798.0 1001.5L799.0 1001.6L800.0 1001.5L801.0 1001.6L802.0 1001.6L803.0 1001.6L804.0 1001.6L805.0 1001.6L806.0 1001.6L807.0 1001.6L808.0 1001.6L809.0 1001.6L810.0 1001.6L811.0 1001.6L812.0 1001.6L813.0 1001.5L814.0 1001.5L815.0 1001.7L816.0 1001.5L817.0 1001.6L818.0 1001.6L819.0 1001.6L820.0 1001.6L821.0 1001.6L822.0 1001.5L823.0 1001.5L824.0 1001.5L825.0 1001.5L826.0 1001.5L827.0 1001.5L828.0 1001.6L829.0 1001.5L830.0 1001.7L831.0 1001.6L832.0 1001.6L833.0 1001.6L834.0 1001.5L835.0 1001.7L836.0 1001.6L837.0 1001.6L838.0 1001.6L839.0 1001.6L840.0 1001.6L841.0 1001.6L842.0 1001.7L843.0 1001.6L844.0 1001.6L845.0 1001.6L846.0 1001.5L847.0 1001.5L848.0 1001.6L849.0 1001.6L850.0 1001.7L851.0 1001.6L852.0 1001.6L853.0 1001.5L854.0 1001.6L855.0 1001.7L856.0 1001.6L857.0 1001.6L858.0 1001.6L859.0 1001.5L860.0 1001.5L861.0 1001.5L862.0 1001.6L863.0 1001.6L864.0 1001.5L865.0 1001.6L866.0 1001.5L867.0 1001.5L868.0 1001.6L869.0 1001.6L870.0 1001.6L871.0 1001.5L872.0 1001.6L873.0 1001.7L874.0 1001.6L875.0 1001.5L876.0 1001.5L877.0 1001.5L878.0 1001.7L879.0 1001.6L880.0 1001.6L881.0 1001.5L882.0 1001.5L883.0 1001.6L884.0 1001.6L885.0 1001.5L886.0 1001.5L887.0 1001.6L888.0 1001.5L889.0 1001.6L890.0 1001.5L891.0 1001.6L892.0 1001.6L893.0 1001.6L894.0 1001.5L895.0 1001.6L896.0 1001.5L897.0 1001.5L898.0 1001.6L899.0 1001.6L900.0 1001.5L901.0 1001.6L902.0 1001.6L903.0 1001.6L904.0 1001.5L905.0 1001.4L906.0 1001.4L907.0 1001.5L908.0 1001.5L909.0 1001.4L910.0 1001.4L911.0 1001.3L912.0 1001.4L913.0 1001.4L914.0 1001.2L915.0 1001.2L916.0 1001.3L917.0 1001.3L918.0 1001.2L919.0 1001.2L920.0 1001.2L921.0 1001.2L922.0 1001.1L923.0 1001.2L924.0 1001.1L925.0 1001.2L926.0 1001.1L927.0 1001.2L928.0 1001.1L929.0 1001.0L930.0 1001.1L931.0 1001.0L932.0 1001.1L933.0 1000.9L934.0 1000.9L935.0 1001.0L936.0 1000.9L937.0 1000.9L938.0 1000.8L939.0 1001.0L940.0 1000.9L941.0 1000.9L942.0 1000.7L943.0 1000.8L944.0 1000.7L945.0 1000.8L946.0 1000.7L947.0 1000.6L948.0 1000.6L949.0 1000.7L950.0 1000.6L951.0 1000.6L952.0 1000.6L953.0 1000.6L954.0 1000.6L955.0 1000.6L956.0 1000.5L957.0 1000.6L958.0 1000.5L959.0 1000.5L960.0 1000.5L961.0 1000.4L962.0 1000.4L963.0 1000.4L964.0 1000.4L965.0 1000.3L966.0 1000.2L967.0 1000.1L968.0 999.5L969.0 998.8L970.0 997.8L971.0 996.8L972.0 995.8L973.0 994.7L974.0 993.7L975.0 992.8L976.0 991.5L977.0 989.8L978.0 987.1L979.0 984.1L980.0 980.9L981.0 977.4L982.0 974.1L983.0 970.7L984.0 966.2L985.0 960.9L986.0 955.0L987.0 948.4L988.0 941.8L989.0 934.8L990.0 928.1L991.0 920.4L992.0 912.2L993.0 903.3L994.0 892.9L995.0 883.1L996.0 873.8L997.0 863.8L998.0 853.3L999.0 843.6L1000.0 833.5L1001.0 823.2L1002.0 813.8L1003.0 803.0L1004.0 794.8L1005.0 785.8L1006.0 780.7L1007.0 775.0L1008.0 770.1L1009.0 767.7L1010.0 767.2L1011.0 769.7L1012.0 771.1L1013.0 773.4L1014.0 775.7L1015.0 778.6L1016.0 782.0L1017.0 787.3L1018.0 793.4L1019.0 797.1L1020.0 800.9L1021.0 805.9L1022.0 810.1L1023.0 816.2L1024.0 822.7L1025.0 830.4L1026.0 838.4L1027.0 846.4L1028.0 855.6L1029.0 864.1L1030.0 873.1L1031.0 881.9L1032.0 889.2L1033.0 896.4L1034.0 901.7L1035.0 906.1L1036.0 909.9L1037.0 911.7L1038.0 911.7L1039.0 908.7L1040.0 905.8L1041.0 903.9L1042.0 905.0L1043.0 909.6L1044.0 915.6L1045.0 922.4L1046.0 929.1L1047.0 935.7L1048.0 941.4L1049.0 947.5L1050.0 952.9L1051.0 957.9L1052.0 962.1L1053.0 965.7L1054.0 969.0L1055.0 971.8L1056.0 974.7L1057.0 977.4L1058.0 979.7L1059.0 982.2L1060.0 984.4L1061.0 986.7L1062.0 989.0L1063.0 991.2L1064.0 992.9L1065.0 994.3L1066.0 995.5L1067.0 996.5L1068.0 997.4L1069.0 998.5L1070.0 999.3L1071.0 1000.1L1072.0 1000.4L1073.0 1000.7L1074.0 1000.8L1075.0 1001.0L1076.0 1001.1L1077.0 1001.2L1078.0 1001.4L1079.0 1001.6L1080.0 1001.4L1081.0 1001.5L1082.0 1001.6L1083.0 1001.5L1084.0 1001.6L1085.0 1001.6L1086.0 1001.6L1087.0 1001.6L1088.0 1001.6L1089.0 1001.5L1090.0 1001.6L1091.0 1001.5L1092.0 1001.6L1093.0 1001.6L1094.0 1001.7L1095.0 1001.6L1096.0 1001.5L1097.0 1001.5L1098.0 1001.5L1099.0 1001.5L1100.0 1001.6L1101.0 1001.6L1102.0 1001.6L1103.0 1001.6L1104.0 1001.5L1105.0 1001.5L1106.0 1001.7L1107.0 1001.6L1108.0 1001.6L1109.0 1001.5L1110.0 1001.6L1111.0 1001.6L1112.0 1001.6L1113.0 1001.5L1114.0 1001.5L1115.0 1001.5L1116.0 1001.5L1117.0 1001.5L1118.0 1001.6L1119.0 1001.5L1120.0 1001.6L1121.0 1001.6L1122.0 1001.6L1123.0 1001.5L1124.0 1001.5L1125.0 1001.6L1126.0 1001.5L1127.0 1001.5L1128.0 1001.6L1129.0 1001.5L1130.0 1001.6L1131.0 1001.5L1132.0 1001.5L1133.0 1001.7L1134.0 1001.6L1135.0 1001.6L1136.0 1001.5L1137.0 1001.6L1138.0 1001.6L1139.0 1001.6L1140.0 1001.5L1141.0 1001.5L1142.0 1001.6L1143.0 1001.5L1144.0 1001.6L1145.0 1001.5L1146.0 1001.6L1147.0 1001.6L1148.0 1001.6L1149.0 1001.6L1150.0 1001.6L1151.0 1001.6L1152.0 1001.6L1153.0 1001.6L1154.0 1001.5L1155.0 1001.6L1156.0 1001.7L1157.0 1001.6L1158.0 1001.6L1159.0 1001.5L1160.0 1001.6L1161.0 1001.6L1162.0 1001.6L1163.0 1001.5L1164.0 1001.6L1165.0 1001.5L1166.0 1001.5L1167.0 1001.5L1168.0 1001.6L1169.0 1001.6L1170.0 1001.5L1171.0 1001.5L1172.0 1001.6L1173.0 1001.5" fill="none" stroke="#c4c2b0" stroke-width="1.100" stroke-opacity="0.900"/><path d="M746.2 1003.0C763.2 1002.1 820.4 1002.9 847.9 997.7C875.4 992.5 890.8 985.3 911.2 971.8C931.6 958.2 951.4 939.4 970.1 916.4C988.8 893.4 1004.5 855.0 1023.3 833.5C1042.1 812.0 1058.0 799.0 1083.0 787.4C1108.0 775.8 1158.0 767.7 1173.0 763.7" fill="none" stroke="#f4f4f4" stroke-width="2"/><circle cx="746.2" cy="1003" r="4.300" fill="#e2e0e0" stroke="#1c1c20" stroke-width="0.900"/><circle cx="847.9" cy="997.7" r="4.300" fill="#e2e0e0" stroke="#1c1c20" stroke-width="0.900"/><circle cx="911.2" cy="971.8" r="4.300" fill="#e2e0e0" stroke="#1c1c20" stroke-width="0.900"/><circle cx="970.1" cy="916.4" r="4.300" fill="#e2e0e0" stroke="#1c1c20" stroke-width="0.900"/><circle cx="1023.3" cy="833.5" r="3.800" fill="#1e1e22" stroke="#f4f4f4" stroke-width="1.800"/><circle cx="1083" cy="787.4" r="4.300" fill="#e2e0e0" stroke="#1c1c20" stroke-width="0.900"/><circle cx="1173" cy="763.7" r="4.300" fill="#e2e0e0" stroke="#1c1c20" stroke-width="0.900"/><path d="M735 757.500h6l5.500 6.500-5.500 6.500h-6q-2 0-2-2v-9q0-2 2-2z" fill="#e2dfdf" stroke="#0c0c0e" stroke-width="1.500"/></svg>
<div class="abs" style="left:1199px;top:737px;width:1px;height:293px;background:#141417;"></div>
<div class="t" style="left:1205.8px;top:745.5px;font-size:14px;color:#ededed;transform:scaleX(0.933);transform-origin:0 50%;">Edit</div>
<svg style="left:1272px;top:748.5px;" width="14" height="14" viewBox="0 0 14 14"><g transform="rotate(-45 7 7)" fill="none" stroke="#f0f0f0" stroke-width="1.700"><rect x="0.500" y="4.500" width="7.500" height="5" rx="2.500"/><rect x="6" y="4.500" width="7.500" height="5" rx="2.500"/></g></svg>
<div class="abs" style="left:1290px;top:744px;width:22.5px;height:23px;background:#e2e0e0;border-radius:3px;"></div>
<div class="t" style="left:1296.5px;top:746.0px;font-size:13.5px;color:#222;transform:scaleX(0.950);transform-origin:0 50%;">Y</div>
<div class="abs" style="left:1317px;top:744px;width:22.5px;height:23px;background:#e81c1c;border-radius:3px;"></div>
<div class="t" style="left:1323.1px;top:746.0px;font-size:13.5px;color:#5a0a0a;transform:scaleX(0.950);transform-origin:0 50%;">R</div>
<div class="abs" style="left:1344px;top:744px;width:22.5px;height:23px;background:#18c428;border-radius:3px;"></div>
<div class="t" style="left:1349.8px;top:746.0px;font-size:13.5px;color:#0a4a10;transform:scaleX(0.950);transform-origin:0 50%;">G</div>
<div class="abs" style="left:1371px;top:744px;width:22.5px;height:23px;background:#1550f0;border-radius:3px;"></div>
<div class="t" style="left:1377.5px;top:746.0px;font-size:13.5px;color:#0a1a6a;transform:scaleX(0.950);transform-origin:0 50%;">B</div>
<svg style="left:1416px;top:746.5px;" width="16" height="16" viewBox="0 0 16 16"><path d="M3.200 5.200A6 6 0 1 1 2 8.500" fill="none" stroke="#8a8a8e" stroke-width="1.300"/><path d="M2.300 1.800v3.900h3.900" fill="none" stroke="#8a8a8e" stroke-width="1.300"/></svg>
<div class="abs" style="left:1210px;top:787.4px;width:122px;height:3px;background:#19191c;border-radius:1.500px;"></div>
<svg style="left:1324.5px;top:783.9px;" width="10" height="10" viewBox="0 0 10 10"><circle cx="5" cy="5" r="4.500" fill="#cfcfcf"/></svg>
<div class="abs" style="left:1344.8px;top:778.2px;width:46px;height:21px;background:#1a1a1d;border:1px solid #0d0d0f;border-radius:2px;"></div>
<div class="t" style="left:1356.8px;top:779.2px;font-size:14px;color:#e6e6e6;transform:scaleX(0.900);transform-origin:0 50%;">100</div>
<svg style="left:1416px;top:779.9px;" width="16" height="16" viewBox="0 0 16 16"><path d="M3.200 5.200A6 6 0 1 1 2 8.500" fill="none" stroke="#8a8a8e" stroke-width="1.300"/><path d="M2.300 1.800v3.900h3.900" fill="none" stroke="#8a8a8e" stroke-width="1.300"/></svg>
<div class="abs" style="left:1210px;top:813.6px;width:122px;height:3px;background:#19191c;border-radius:1.500px;"></div>
<svg style="left:1324.5px;top:810.1px;" width="10" height="10" viewBox="0 0 10 10"><circle cx="5" cy="5" r="4.500" fill="#e8202a"/></svg>
<div class="abs" style="left:1344.8px;top:804.4px;width:46px;height:21px;background:#1a1a1d;border:1px solid #0d0d0f;border-radius:2px;"></div>
<div class="t" style="left:1356.8px;top:805.4px;font-size:14px;color:#e6e6e6;transform:scaleX(0.900);transform-origin:0 50%;">100</div>
<svg style="left:1416px;top:806.1px;" width="16" height="16" viewBox="0 0 16 16"><path d="M3.200 5.200A6 6 0 1 1 2 8.500" fill="none" stroke="#8a8a8e" stroke-width="1.300"/><path d="M2.300 1.800v3.900h3.900" fill="none" stroke="#8a8a8e" stroke-width="1.300"/></svg>
<div class="abs" style="left:1210px;top:839.8px;width:122px;height:3px;background:#19191c;border-radius:1.500px;"></div>
<svg style="left:1324.5px;top:836.3px;" width="10" height="10" viewBox="0 0 10 10"><circle cx="5" cy="5" r="4.500" fill="#32b828"/></svg>
<div class="abs" style="left:1344.8px;top:830.6px;width:46px;height:21px;background:#1a1a1d;border:1px solid #0d0d0f;border-radius:2px;"></div>
<div class="t" style="left:1356.8px;top:831.6px;font-size:14px;color:#e6e6e6;transform:scaleX(0.900);transform-origin:0 50%;">100</div>
<svg style="left:1416px;top:832.3px;" width="16" height="16" viewBox="0 0 16 16"><path d="M3.200 5.200A6 6 0 1 1 2 8.500" fill="none" stroke="#8a8a8e" stroke-width="1.300"/><path d="M2.300 1.800v3.900h3.900" fill="none" stroke="#8a8a8e" stroke-width="1.300"/></svg>
<div class="abs" style="left:1210px;top:865.8px;width:122px;height:3px;background:#19191c;border-radius:1.500px;"></div>
<svg style="left:1324.5px;top:862.3px;" width="10" height="10" viewBox="0 0 10 10"><circle cx="5" cy="5" r="4.500" fill="#1a55f0"/></svg>
<div class="abs" style="left:1344.8px;top:856.6px;width:46px;height:21px;background:#1a1a1d;border:1px solid #0d0d0f;border-radius:2px;"></div>
<div class="t" style="left:1356.8px;top:857.6px;font-size:14px;color:#e6e6e6;transform:scaleX(0.900);transform-origin:0 50%;">100</div>
<svg style="left:1416px;top:858.3px;" width="16" height="16" viewBox="0 0 16 16"><path d="M3.200 5.200A6 6 0 1 1 2 8.500" fill="none" stroke="#8a8a8e" stroke-width="1.300"/><path d="M2.300 1.800v3.900h3.900" fill="none" stroke="#8a8a8e" stroke-width="1.300"/></svg>
<div class="abs" style="left:1206px;top:888.5px;width:227px;height:1px;background:#17171a;"></div>
<div class="t" style="left:1205.8px;top:902.5px;font-size:14px;color:#ededed;transform:scaleX(0.920);transform-origin:0 50%;">Soft Clip</div>
<svg style="left:1299px;top:905.5px;" width="14" height="14" viewBox="0 0 14 14"><g transform="rotate(-45 7 7)" fill="none" stroke="#f0f0f0" stroke-width="1.700"><rect x="0.500" y="4.500" width="7.500" height="5" rx="2.500"/><rect x="6" y="4.500" width="7.500" height="5" rx="2.500"/></g></svg>
<div class="abs" style="left:1317px;top:900.5px;width:22.5px;height:23px;background:#e81c1c;border-radius:3px;"></div>
<div class="t" style="left:1323.1px;top:902.5px;font-size:13.5px;color:#5a0a0a;transform:scaleX(0.950);transform-origin:0 50%;">R</div>
<div class="abs" style="left:1344px;top:900.5px;width:22.5px;height:23px;background:#18c428;border-radius:3px;"></div>
<div class="t" style="left:1349.8px;top:902.5px;font-size:13.5px;color:#0a4a10;transform:scaleX(0.950);transform-origin:0 50%;">G</div>
<div class="abs" style="left:1371px;top:900.5px;width:22.5px;height:23px;background:#1550f0;border-radius:3px;"></div>
<div class="t" style="left:1377.5px;top:902.5px;font-size:13.5px;color:#0a1a6a;transform:scaleX(0.950);transform-origin:0 50%;">B</div>
<svg style="left:1416px;top:903px;" width="16" height="16" viewBox="0 0 16 16"><path d="M3.200 5.200A6 6 0 1 1 2 8.500" fill="none" stroke="#8a8a8e" stroke-width="1.300"/><path d="M2.300 1.800v3.900h3.900" fill="none" stroke="#8a8a8e" stroke-width="1.300"/></svg>
<div class="t" style="left:1217.1px;top:947.5px;font-size:14px;color:#88888c;transform:scaleX(0.950);transform-origin:0 50%;">Low</div>
<div class="abs" style="left:1252.4px;top:946.7px;width:47px;height:20.5px;background:#1a1a1d;border:1px solid #0d0d0f;border-radius:2px;"></div>
<div class="t" style="left:1263.1px;top:947.5px;font-size:14px;color:#e6e6e6;transform:scaleX(0.900);transform-origin:0 50%;">50.0</div>
<div class="t" style="left:1322.5px;top:947.5px;font-size:14px;color:#88888c;transform:scaleX(0.962);transform-origin:0 50%;">High</div>
<div class="abs" style="left:1361.2px;top:946.7px;width:47px;height:20.5px;background:#1a1a1d;border:1px solid #0d0d0f;border-radius:2px;"></div>
<div class="t" style="left:1371.9px;top:947.5px;font-size:14px;color:#e6e6e6;transform:scaleX(0.900);transform-origin:0 50%;">50.0</div>
<div class="t" style="left:1217.1px;top:973.8px;font-size:14px;color:#88888c;transform:scaleX(0.795);transform-origin:0 50%;">L.S.</div>
<div class="abs" style="left:1252.4px;top:973px;width:47px;height:20.5px;background:#1a1a1d;border:1px solid #0d0d0f;border-radius:2px;"></div>
<div class="t" style="left:1266.6px;top:973.8px;font-size:14px;color:#e6e6e6;transform:scaleX(0.900);transform-origin:0 50%;">0.0</div>
<div class="t" style="left:1322.5px;top:973.8px;font-size:14px;color:#88888c;transform:scaleX(0.823);transform-origin:0 50%;">H.S.</div>
<div class="abs" style="left:1361.2px;top:973px;width:47px;height:20.5px;background:#1a1a1d;border:1px solid #0d0d0f;border-radius:2px;"></div>
<div class="t" style="left:1375.4px;top:973.8px;font-size:14px;color:#e6e6e6;transform:scaleX(0.900);transform-origin:0 50%;">0.0</div>
<!-- 80_scopes -->
<div class="abs" style="left:1441px;top:737px;width:479px;height:293px;background:#000;"></div>
<div class="abs" style="left:1440px;top:1030px;width:480px;height:1px;background:#0f0f11;"></div>
<div class="t" style="left:1449.5px;top:713.5px;font-size:14px;color:#f0f0f0;transform:scaleX(0.906);transform-origin:0 50%;-webkit-text-stroke:0.45px;">Scopes</div>
<div class="t" style="left:1739.9px;top:713.0px;font-size:14px;color:#ededed;transform:scaleX(1.041);transform-origin:0 50%;-webkit-text-stroke:0.45px;">Parade</div>
<svg style="left:1791.5px;top:720px;" width="11" height="8" viewBox="0 0 11 8"><path d="M1 1l4.500 5 4.500-5" fill="none" stroke="#8e8e92" stroke-width="1.400"/></svg>
<div class="abs" style="left:1809px;top:711px;width:1px;height:25px;background:#0f0f11;"></div>
<div class="abs" style="left:1846px;top:711px;width:1px;height:25px;background:#0f0f11;"></div>
<div class="abs" style="left:1883px;top:711px;width:1px;height:25px;background:#0f0f11;"></div>
<svg style="left:1819px;top:716px;" width="18" height="15" viewBox="0 0 18 15"><path d="M0 2.500h18M0 7.500h18M0 12.500h18" stroke="#7a7a7e" stroke-width="1.200"/><circle cx="12.500" cy="2.500" r="2" fill="#212125" stroke="#7a7a7e" stroke-width="1.200"/><circle cx="5.500" cy="7.500" r="2" fill="#212125" stroke="#7a7a7e" stroke-width="1.200"/><circle cx="11" cy="12.500" r="2" fill="#212125" stroke="#7a7a7e" stroke-width="1.200"/></svg>
<svg style="left:1858.5px;top:717px;" width="13" height="13" viewBox="0 0 13 13"><path d="M0 4.500V0h4.500zM8.500 0H13v4.500zM13 8.500V13H8.500zM4.500 13H0V8.500z" fill="#7a7a7e"/><path d="M1.500 1.500l3.800 3.800M11.500 1.500l-3.800 3.800M11.500 11.500l-3.800-3.800M1.500 11.500l3.800-3.800" stroke="#7a7a7e" stroke-width="1.500"/></svg>
<svg style="left:1892px;top:720.2px;" width="20" height="6" viewBox="0 0 20 6"><circle cx="3" cy="3" r="2" fill="#8c8c90"/><circle cx="10" cy="3" r="2" fill="#8c8c90"/><circle cx="17" cy="3" r="2" fill="#8c8c90"/></svg>
<svg style="left:0px;top:0px;" width="1920" height="1080" viewBox="0 0 1920 1080"><defs><filter id="wb" filterUnits="userSpaceOnUse" x="1486" y="785" width="428" height="230"><feTurbulence type="fractalNoise" baseFrequency="0.45 0.035" numOctaves="2" seed="4" result="n"/><feColorMatrix in="n" values="0 0 0 0 1  0 0 0 0 1  0 0 0 0 1  2.6 0 0 0 -0.75" result="a"/><feGaussianBlur in="SourceGraphic" stdDeviation="0.8" result="g"/><feComposite in="g" in2="a" operator="in" result="t"/><feComposite in="g" in2="g" operator="arithmetic" k1="0" k2="0.35" k3="0" k4="0" result="base"/><feMerge><feMergeNode in="base"/><feMergeNode in="t"/></feMerge></filter><clipPath id="sc"><rect x="1441" y="737" width="479" height="293"/></clipPath></defs><path d="M1488 744.5H1912" stroke="#7d682f" stroke-width="1"/><path d="M1488 777.5H1912" stroke="#7d682f" stroke-width="1"/><path d="M1488 810.5H1912" stroke="#7d682f" stroke-width="1"/><path d="M1488 842.5H1912" stroke="#7d682f" stroke-width="1"/><path d="M1488 875.5H1912" stroke="#8a7438" stroke-width="1" stroke-dasharray="3 2.500"/><path d="M1488 908.5H1912" stroke="#7d682f" stroke-width="1"/><path d="M1488 941.5H1912" stroke="#7d682f" stroke-width="1"/><path d="M1488 973.5H1912" stroke="#7d682f" stroke-width="1"/><path d="M1488 1006.5H1912" stroke="#7d682f" stroke-width="1"/><path d="M1488 998.5H1496.500" stroke="#7d682f" stroke-width="1"/><path d="M1488 990.5H1496.500" stroke="#7d682f" stroke-width="1"/><path d="M1488 982.5H1496.500" stroke="#7d682f" stroke-width="1"/><path d="M1488 965.5H1496.500" stroke="#7d682f" stroke-width="1"/><path d="M1488 957.5H1496.500" stroke="#7d682f" stroke-width="1"/><path d="M1488 949.5H1496.500" stroke="#7d682f" stroke-width="1"/><path d="M1488 932.5H1496.500" stroke="#7d682f" stroke-width="1"/><path d="M1488 924.5H1496.500" stroke="#7d682f" stroke-width="1"/><path d="M1488 916.5H1496.500" stroke="#7d682f" stroke-width="1"/><path d="M1488 900.5H1496.500" stroke="#7d682f" stroke-width="1"/><path d="M1488 891.5H1496.500" stroke="#7d682f" stroke-width="1"/><path d="M1488 883.5H1496.500" stroke="#7d682f" stroke-width="1"/><path d="M1488 867.5H1496.500" stroke="#7d682f" stroke-width="1"/><path d="M1488 859.5H1496.500" stroke="#7d682f" stroke-width="1"/><path d="M1488 851.5H1496.500" stroke="#7d682f" stroke-width="1"/><path d="M1488 834.5H1496.500" stroke="#7d682f" stroke-width="1"/><path d="M1488 826.5H1496.500" stroke="#7d682f" stroke-width="1"/><path d="M1488 818.5H1496.500" stroke="#7d682f" stroke-width="1"/><path d="M1488 801.5H1496.500" stroke="#7d682f" stroke-width="1"/><path d="M1488 793.5H1496.500" stroke="#7d682f" stroke-width="1"/><path d="M1488 785.5H1496.500" stroke="#7d682f" stroke-width="1"/><path d="M1488 769.5H1496.500" stroke="#7d682f" stroke-width="1"/><path d="M1488 761.5H1496.500" stroke="#7d682f" stroke-width="1"/><path d="M1488 752.5H1496.500" stroke="#7d682f" stroke-width="1"/><path d="M1488.5 1006V1013" stroke="#8a7438" stroke-width="1"/><path d="M1497.5 1006V1009" stroke="#8a7438" stroke-width="1"/><path d="M1506.5 1006V1011" stroke="#8a7438" stroke-width="1"/><path d="M1515.5 1006V1009" stroke="#8a7438" stroke-width="1"/><path d="M1524.5 1006V1013" stroke="#8a7438" stroke-width="1"/><path d="M1533.5 1006V1009" stroke="#8a7438" stroke-width="1"/><path d="M1541.5 1006V1011" stroke="#8a7438" stroke-width="1"/><path d="M1550.5 1006V1009" stroke="#8a7438" stroke-width="1"/><path d="M1559.5 1006V1013" stroke="#8a7438" stroke-width="1"/><path d="M1568.5 1006V1009" stroke="#8a7438" stroke-width="1"/><path d="M1577.5 1006V1011" stroke="#8a7438" stroke-width="1"/><path d="M1586.5 1006V1009" stroke="#8a7438" stroke-width="1"/><path d="M1594.5 1006V1013" stroke="#8a7438" stroke-width="1"/><path d="M1603.5 1006V1009" stroke="#8a7438" stroke-width="1"/><path d="M1612.5 1006V1011" stroke="#8a7438" stroke-width="1"/><path d="M1621.5 1006V1009" stroke="#8a7438" stroke-width="1"/><path d="M1630.5 1006V1013" stroke="#8a7438" stroke-width="1"/><path d="M1638.5 1006V1009" stroke="#8a7438" stroke-width="1"/><path d="M1647.5 1006V1011" stroke="#8a7438" stroke-width="1"/><path d="M1656.5 1006V1009" stroke="#8a7438" stroke-width="1"/><path d="M1665.5 1006V1013" stroke="#8a7438" stroke-width="1"/><path d="M1674.5 1006V1009" stroke="#8a7438" stroke-width="1"/><path d="M1683.5 1006V1011" stroke="#8a7438" stroke-width="1"/><path d="M1691.5 1006V1009" stroke="#8a7438" stroke-width="1"/><path d="M1700.5 1006V1013" stroke="#8a7438" stroke-width="1"/><path d="M1709.5 1006V1009" stroke="#8a7438" stroke-width="1"/><path d="M1718.5 1006V1011" stroke="#8a7438" stroke-width="1"/><path d="M1727.5 1006V1009" stroke="#8a7438" stroke-width="1"/><path d="M1736.5 1006V1013" stroke="#8a7438" stroke-width="1"/><path d="M1744.5 1006V1009" stroke="#8a7438" stroke-width="1"/><path d="M1753.5 1006V1011" stroke="#8a7438" stroke-width="1"/><path d="M1762.5 1006V1009" stroke="#8a7438" stroke-width="1"/><path d="M1771.5 1006V1013" stroke="#8a7438" stroke-width="1"/><path d="M1780.5 1006V1009" stroke="#8a7438" stroke-width="1"/><path d="M1788.5 1006V1011" stroke="#8a7438" stroke-width="1"/><path d="M1797.5 1006V1009" stroke="#8a7438" stroke-width="1"/><path d="M1806.5 1006V1013" stroke="#8a7438" stroke-width="1"/><path d="M1815.5 1006V1009" stroke="#8a7438" stroke-width="1"/><path d="M1824.5 1006V1011" stroke="#8a7438" stroke-width="1"/><path d="M1833.5 1006V1009" stroke="#8a7438" stroke-width="1"/><path d="M1841.5 1006V1013" stroke="#8a7438" stroke-width="1"/><path d="M1850.5 1006V1009" stroke="#8a7438" stroke-width="1"/><path d="M1859.5 1006V1011" stroke="#8a7438" stroke-width="1"/><path d="M1868.5 1006V1009" stroke="#8a7438" stroke-width="1"/><path d="M1877.5 1006V1013" stroke="#8a7438" stroke-width="1"/><path d="M1886.5 1006V1009" stroke="#8a7438" stroke-width="1"/><path d="M1894.5 1006V1011" stroke="#8a7438" stroke-width="1"/><path d="M1903.5 1006V1009" stroke="#8a7438" stroke-width="1"/><path d="M1912.5 1006V1013" stroke="#8a7438" stroke-width="1"/></svg>
<div class="t" style="left:1450.0px;top:734.9px;font-size:14px;color:#b89a52;transform:scaleX(0.930);transform-origin:0 50%;">1023</div>
<div class="t" style="left:1457.3px;top:767.4px;font-size:14px;color:#b89a52;transform:scaleX(0.930);transform-origin:0 50%;">896</div>
<div class="t" style="left:1457.3px;top:800.1px;font-size:14px;color:#b89a52;transform:scaleX(0.930);transform-origin:0 50%;">768</div>
<div class="t" style="left:1457.3px;top:832.9px;font-size:14px;color:#b89a52;transform:scaleX(0.930);transform-origin:0 50%;">640</div>
<div class="t" style="left:1457.3px;top:865.6px;font-size:14px;color:#b89a52;transform:scaleX(0.930);transform-origin:0 50%;">512</div>
<div class="t" style="left:1457.3px;top:898.4px;font-size:14px;color:#b89a52;transform:scaleX(0.930);transform-origin:0 50%;">384</div>
<div class="t" style="left:1457.3px;top:931.1px;font-size:14px;color:#b89a52;transform:scaleX(0.930);transform-origin:0 50%;">256</div>
<div class="t" style="left:1457.3px;top:963.9px;font-size:14px;color:#b89a52;transform:scaleX(0.930);transform-origin:0 50%;">128</div>
<div class="t" style="left:1471.8px;top:996.6px;font-size:14px;color:#b89a52;transform:scaleX(0.930);transform-origin:0 50%;">0</div>
<svg style="left:0px;top:0px;" width="1920" height="1080" viewBox="0 0 1920 1080"><g clip-path="url(#sc)" filter="url(#wb)"><path d="M1488.0 824.5L1489.0 822.4L1490.0 815.4L1491.0 812.1L1492.0 813.9L1493.0 817.8L1494.0 818.9L1495.0 819.2L1496.0 818.0L1497.0 814.5L1498.0 813.5L1499.0 816.7L1500.0 817.8L1501.0 815.3L1502.0 813.2L1503.0 814.1L1504.0 819.2L1505.0 818.2L1506.0 816.0L1507.0 817.9L1508.0 816.2L1509.0 819.2L1510.0 817.9L1511.0 819.4L1512.0 814.6L1513.0 813.8L1514.0 811.3L1515.0 815.2L1516.0 810.2L1517.0 812.4L1518.0 810.0L1519.0 812.0L1520.0 811.2L1521.0 811.4L1522.0 811.4L1523.0 813.6L1524.0 815.8L1525.0 810.0L1526.0 814.4L1527.0 807.6L1528.0 807.8L1529.0 809.1L1530.0 809.2L1531.0 813.3L1532.0 807.3L1533.0 808.1L1534.0 810.6L1535.0 805.1L1536.0 803.9L1537.0 805.9L1538.0 811.8L1539.0 810.6L1540.0 810.4L1541.0 813.7L1542.0 813.2L1543.0 813.2L1544.0 807.7L1545.0 811.3L1546.0 809.3L1547.0 804.4L1548.0 806.4L1549.0 804.8L1550.0 810.9L1551.0 809.9L1552.0 809.2L1553.0 809.7L1554.0 807.6L1555.0 806.9L1556.0 807.8L1557.0 808.8L1558.0 808.1L1559.0 809.0L1560.0 813.3L1561.0 808.8L1562.0 815.2L1563.0 814.7L1564.0 811.3L1565.0 809.0L1566.0 799.8L1567.0 806.2L1568.0 799.4L1569.0 808.1L1570.0 811.1L1571.0 812.3L1572.0 806.0L1573.0 799.7L1574.0 808.9L1575.0 807.5L1576.0 809.1L1577.0 805.9L1578.0 805.5L1579.0 809.1L1580.0 808.7L1581.0 807.9L1582.0 807.1L1583.0 811.5L1584.0 807.9L1585.0 808.1L1586.0 810.0L1587.0 810.7L1588.0 809.9L1589.0 810.4L1590.0 808.0L1591.0 807.6L1592.0 811.4L1593.0 812.9L1594.0 816.5L1595.0 819.1L1596.0 822.1L1597.0 822.5L1598.0 815.2L1599.0 813.4L1600.0 808.4L1601.0 810.8L1602.0 817.8L1603.0 819.0L1604.0 818.8L1605.0 819.4L1606.0 815.1L1607.0 815.3L1608.0 812.9L1609.0 811.4L1610.0 821.1L1611.0 819.7L1612.0 819.9L1613.0 813.3L1614.0 817.8L1615.0 819.0L1616.0 818.8L1617.0 818.3L1618.0 818.1L1619.0 817.8L1620.0 814.6L1621.0 815.3L1622.0 818.7L1623.0 820.4L1624.0 822.1L1625.0 819.0L1626.0 813.7L1627.0 815.5L1628.0 812.2L1628.0 871.8L1627.0 881.6L1626.0 875.2L1625.0 882.9L1624.0 877.8L1623.0 878.8L1622.0 870.1L1621.0 875.0L1620.0 876.0L1619.0 883.1L1618.0 882.3L1617.0 879.6L1616.0 876.6L1615.0 884.5L1614.0 880.7L1613.0 886.1L1612.0 878.8L1611.0 885.4L1610.0 877.2L1609.0 887.6L1608.0 880.5L1607.0 890.4L1606.0 887.8L1605.0 887.6L1604.0 886.6L1603.0 884.6L1602.0 887.5L1601.0 886.2L1600.0 884.6L1599.0 881.2L1598.0 881.8L1597.0 884.4L1596.0 884.6L1595.0 883.9L1594.0 880.1L1593.0 883.2L1592.0 886.4L1591.0 884.7L1590.0 876.5L1589.0 877.9L1588.0 880.2L1587.0 886.5L1586.0 888.8L1585.0 887.4L1584.0 885.7L1583.0 885.1L1582.0 889.0L1581.0 888.7L1580.0 888.7L1579.0 887.5L1578.0 878.2L1577.0 882.9L1576.0 882.2L1575.0 883.2L1574.0 879.7L1573.0 887.6L1572.0 886.5L1571.0 883.5L1570.0 890.7L1569.0 884.2L1568.0 890.6L1567.0 887.8L1566.0 889.9L1565.0 890.0L1564.0 882.2L1563.0 883.1L1562.0 886.7L1561.0 885.6L1560.0 882.8L1559.0 884.9L1558.0 888.8L1557.0 893.2L1556.0 884.3L1555.0 884.7L1554.0 882.7L1553.0 882.9L1552.0 883.2L1551.0 882.6L1550.0 887.4L1549.0 885.5L1548.0 885.0L1547.0 882.7L1546.0 887.8L1545.0 883.6L1544.0 888.6L1543.0 889.6L1542.0 890.0L1541.0 884.9L1540.0 889.1L1539.0 880.7L1538.0 882.6L1537.0 874.6L1536.0 875.8L1535.0 879.9L1534.0 884.6L1533.0 886.8L1532.0 894.0L1531.0 887.9L1530.0 884.9L1529.0 886.6L1528.0 878.6L1527.0 882.8L1526.0 890.1L1525.0 888.9L1524.0 891.0L1523.0 883.1L1522.0 878.1L1521.0 882.0L1520.0 877.3L1519.0 884.1L1518.0 878.3L1517.0 881.9L1516.0 886.6L1515.0 884.8L1514.0 886.3L1513.0 881.2L1512.0 883.2L1511.0 883.0L1510.0 883.4L1509.0 881.0L1508.0 884.9L1507.0 883.0L1506.0 880.4L1505.0 882.0L1504.0 886.4L1503.0 881.6L1502.0 878.4L1501.0 876.2L1500.0 883.2L1499.0 883.3L1498.0 890.8L1497.0 889.1L1496.0 890.4L1495.0 888.0L1494.0 887.8L1493.0 888.1L1492.0 884.6L1491.0 886.5L1490.0 884.0L1489.0 881.5L1488.0 882.5Z" fill="#e8484a" fill-opacity="0.26"/><path d="M1488.0 829.3L1489.0 823.6L1490.0 825.1L1491.0 827.1L1492.0 826.1L1493.0 826.8L1494.0 823.7L1495.0 827.8L1496.0 829.4L1497.0 826.5L1498.0 832.4L1499.0 828.3L1500.0 827.8L1501.0 827.4L1502.0 827.7L1503.0 829.5L1504.0 827.1L1505.0 824.1L1506.0 824.8L1507.0 828.0L1508.0 824.2L1509.0 827.9L1510.0 824.3L1511.0 824.7L1512.0 820.9L1513.0 818.8L1514.0 817.9L1515.0 817.2L1516.0 819.8L1517.0 817.8L1518.0 824.0L1519.0 825.3L1520.0 824.3L1521.0 825.4L1522.0 822.7L1523.0 823.9L1524.0 821.4L1525.0 817.2L1526.0 816.7L1527.0 815.7L1528.0 816.2L1529.0 815.6L1530.0 817.0L1531.0 813.8L1532.0 813.2L1533.0 812.1L1534.0 814.3L1535.0 811.2L1536.0 813.6L1537.0 810.6L1538.0 811.7L1539.0 811.5L1540.0 815.7L1541.0 816.0L1542.0 817.7L1543.0 814.6L1544.0 812.8L1545.0 811.5L1546.0 809.5L1547.0 814.3L1548.0 814.4L1549.0 814.0L1550.0 813.6L1551.0 812.6L1552.0 813.2L1553.0 810.3L1554.0 812.1L1555.0 807.6L1556.0 810.6L1557.0 807.2L1558.0 809.5L1559.0 814.5L1560.0 813.7L1561.0 810.2L1562.0 812.0L1563.0 815.4L1564.0 813.9L1565.0 811.6L1566.0 810.3L1567.0 810.1L1568.0 804.8L1569.0 808.4L1570.0 809.1L1571.0 813.0L1572.0 814.6L1573.0 809.9L1574.0 808.2L1575.0 806.3L1576.0 813.0L1577.0 810.2L1578.0 811.3L1579.0 807.4L1580.0 810.9L1581.0 812.6L1582.0 807.0L1583.0 811.7L1584.0 808.3L1585.0 810.9L1586.0 807.7L1587.0 811.8L1588.0 810.2L1589.0 807.1L1590.0 816.2L1591.0 819.6L1592.0 818.7L1593.0 818.3L1594.0 820.6L1595.0 824.6L1596.0 824.2L1597.0 826.9L1598.0 823.9L1599.0 826.5L1600.0 826.3L1601.0 827.1L1602.0 822.4L1603.0 821.3L1604.0 821.7L1605.0 821.4L1606.0 820.2L1607.0 822.6L1608.0 826.7L1609.0 827.9L1610.0 827.2L1611.0 824.8L1612.0 825.2L1613.0 823.8L1614.0 823.7L1615.0 819.1L1616.0 822.3L1617.0 820.0L1618.0 823.5L1619.0 818.1L1620.0 827.8L1621.0 825.8L1622.0 827.0L1623.0 830.2L1624.0 828.2L1625.0 826.3L1626.0 826.1L1627.0 828.3L1628.0 828.1L1628.0 879.0L1627.0 877.0L1626.0 868.2L1625.0 865.3L1624.0 869.7L1623.0 873.2L1622.0 872.6L1621.0 872.2L1620.0 871.1L1619.0 869.3L1618.0 874.5L1617.0 874.9L1616.0 883.3L1615.0 877.8L1614.0 876.7L1613.0 881.9L1612.0 874.8L1611.0 875.9L1610.0 870.1L1609.0 873.6L1608.0 874.0L1607.0 876.5L1606.0 873.7L1605.0 874.6L1604.0 871.6L1603.0 873.0L1602.0 875.7L1601.0 874.1L1600.0 875.6L1599.0 874.1L1598.0 871.6L1597.0 872.3L1596.0 871.2L1595.0 873.3L1594.0 872.7L1593.0 876.4L1592.0 871.7L1591.0 872.9L1590.0 871.7L1589.0 872.8L1588.0 872.5L1587.0 872.5L1586.0 873.1L1585.0 876.4L1584.0 870.5L1583.0 868.8L1582.0 869.1L1581.0 867.8L1580.0 870.9L1579.0 873.0L1578.0 870.8L1577.0 871.2L1576.0 873.1L1575.0 870.3L1574.0 871.0L1573.0 871.1L1572.0 875.8L1571.0 873.7L1570.0 873.1L1569.0 872.0L1568.0 873.1L1567.0 876.1L1566.0 875.8L1565.0 871.4L1564.0 873.3L1563.0 873.7L1562.0 876.6L1561.0 880.6L1560.0 876.3L1559.0 878.3L1558.0 874.9L1557.0 875.3L1556.0 872.8L1555.0 873.1L1554.0 874.8L1553.0 875.2L1552.0 878.3L1551.0 876.6L1550.0 881.1L1549.0 873.9L1548.0 875.1L1547.0 873.8L1546.0 873.0L1545.0 874.8L1544.0 875.4L1543.0 875.8L1542.0 875.9L1541.0 876.5L1540.0 873.3L1539.0 874.7L1538.0 873.4L1537.0 873.8L1536.0 871.8L1535.0 872.7L1534.0 874.4L1533.0 878.0L1532.0 875.0L1531.0 879.1L1530.0 879.5L1529.0 881.0L1528.0 875.1L1527.0 871.6L1526.0 872.1L1525.0 876.0L1524.0 875.3L1523.0 877.8L1522.0 874.0L1521.0 874.6L1520.0 873.6L1519.0 876.4L1518.0 873.6L1517.0 872.3L1516.0 872.7L1515.0 876.0L1514.0 876.7L1513.0 877.0L1512.0 877.1L1511.0 875.1L1510.0 879.9L1509.0 875.2L1508.0 877.4L1507.0 875.9L1506.0 875.4L1505.0 872.0L1504.0 874.9L1503.0 875.9L1502.0 872.9L1501.0 873.5L1500.0 873.3L1499.0 875.6L1498.0 877.5L1497.0 875.9L1496.0 871.4L1495.0 872.9L1494.0 872.0L1493.0 872.9L1492.0 871.7L1491.0 870.7L1490.0 874.9L1489.0 872.5L1488.0 874.8Z" fill="#e8484a" fill-opacity="0.38"/><path d="M1488.0 843.7L1489.0 844.4L1490.0 846.1L1491.0 843.6L1492.0 847.4L1493.0 847.7L1494.0 846.7L1495.0 848.7L1496.0 845.4L1497.0 844.5L1498.0 841.5L1499.0 843.5L1500.0 843.2L1501.0 845.7L1502.0 841.9L1503.0 845.6L1504.0 846.4L1505.0 847.6L1506.0 847.2L1507.0 843.2L1508.0 843.7L1509.0 844.1L1510.0 844.0L1511.0 843.1L1512.0 841.7L1513.0 841.7L1514.0 841.9L1515.0 843.9L1516.0 842.2L1517.0 843.7L1518.0 843.4L1519.0 843.8L1520.0 844.3L1521.0 841.1L1522.0 842.4L1523.0 843.2L1524.0 843.3L1525.0 841.0L1526.0 840.1L1527.0 842.7L1528.0 844.2L1529.0 843.1L1530.0 842.5L1531.0 843.7L1532.0 844.4L1533.0 842.8L1534.0 841.9L1535.0 841.6L1536.0 843.0L1537.0 843.3L1538.0 843.8L1539.0 840.5L1540.0 841.3L1541.0 840.4L1542.0 845.5L1543.0 845.4L1544.0 843.6L1545.0 843.6L1546.0 841.5L1547.0 840.6L1548.0 839.9L1549.0 839.0L1550.0 839.2L1551.0 838.3L1552.0 836.8L1553.0 842.5L1554.0 840.3L1555.0 839.7L1556.0 844.2L1557.0 843.1L1558.0 839.6L1559.0 836.7L1560.0 841.2L1561.0 840.3L1562.0 841.3L1563.0 840.5L1564.0 840.2L1565.0 838.0L1566.0 840.5L1567.0 840.3L1568.0 839.2L1569.0 838.8L1570.0 837.0L1571.0 842.2L1572.0 842.7L1573.0 838.2L1574.0 837.7L1575.0 839.8L1576.0 841.4L1577.0 839.5L1578.0 839.8L1579.0 841.8L1580.0 841.8L1581.0 844.0L1582.0 839.0L1583.0 840.5L1584.0 838.4L1585.0 837.1L1586.0 836.9L1587.0 838.5L1588.0 836.4L1589.0 837.4L1590.0 838.1L1591.0 839.4L1592.0 838.5L1593.0 838.4L1594.0 839.8L1595.0 837.3L1596.0 837.2L1597.0 838.3L1598.0 837.2L1599.0 836.3L1600.0 838.7L1601.0 841.5L1602.0 841.5L1603.0 838.2L1604.0 836.4L1605.0 840.1L1606.0 840.3L1607.0 841.1L1608.0 838.7L1609.0 841.2L1610.0 837.8L1611.0 837.3L1612.0 838.1L1613.0 837.4L1614.0 839.3L1615.0 839.2L1616.0 837.6L1617.0 838.3L1618.0 835.0L1619.0 838.2L1620.0 837.9L1621.0 836.0L1622.0 836.6L1623.0 836.7L1624.0 835.9L1625.0 837.0L1626.0 839.7L1627.0 839.3L1628.0 839.7L1628.0 871.9L1627.0 868.4L1626.0 868.6L1625.0 870.1L1624.0 871.5L1623.0 872.2L1622.0 870.1L1621.0 866.7L1620.0 867.8L1619.0 867.3L1618.0 869.2L1617.0 869.7L1616.0 867.5L1615.0 869.9L1614.0 871.4L1613.0 868.4L1612.0 866.6L1611.0 866.4L1610.0 869.9L1609.0 869.8L1608.0 871.6L1607.0 869.2L1606.0 866.9L1605.0 869.1L1604.0 869.9L1603.0 870.9L1602.0 869.5L1601.0 869.8L1600.0 869.8L1599.0 869.5L1598.0 871.5L1597.0 871.0L1596.0 869.3L1595.0 868.7L1594.0 868.6L1593.0 867.5L1592.0 867.9L1591.0 869.2L1590.0 868.1L1589.0 867.8L1588.0 867.6L1587.0 868.8L1586.0 868.8L1585.0 869.2L1584.0 869.5L1583.0 869.5L1582.0 865.9L1581.0 866.2L1580.0 869.2L1579.0 868.9L1578.0 871.0L1577.0 869.9L1576.0 870.8L1575.0 868.0L1574.0 868.1L1573.0 869.4L1572.0 868.8L1571.0 869.7L1570.0 869.5L1569.0 872.1L1568.0 873.0L1567.0 868.9L1566.0 866.4L1565.0 866.8L1564.0 869.7L1563.0 872.5L1562.0 874.0L1561.0 872.9L1560.0 870.3L1559.0 869.7L1558.0 867.3L1557.0 868.8L1556.0 868.6L1555.0 868.5L1554.0 870.5L1553.0 869.8L1552.0 872.1L1551.0 869.2L1550.0 869.0L1549.0 868.3L1548.0 871.7L1547.0 872.7L1546.0 872.4L1545.0 872.4L1544.0 874.3L1543.0 873.1L1542.0 869.8L1541.0 869.2L1540.0 869.2L1539.0 871.2L1538.0 869.7L1537.0 869.8L1536.0 869.2L1535.0 869.0L1534.0 868.8L1533.0 871.2L1532.0 870.8L1531.0 872.5L1530.0 873.8L1529.0 874.4L1528.0 872.3L1527.0 875.6L1526.0 872.6L1525.0 871.1L1524.0 869.6L1523.0 873.6L1522.0 868.8L1521.0 870.0L1520.0 872.1L1519.0 875.1L1518.0 876.6L1517.0 871.3L1516.0 872.1L1515.0 871.8L1514.0 875.6L1513.0 870.0L1512.0 871.0L1511.0 870.4L1510.0 871.4L1509.0 872.3L1508.0 875.1L1507.0 873.2L1506.0 874.0L1505.0 874.2L1504.0 872.0L1503.0 871.4L1502.0 870.6L1501.0 872.5L1500.0 871.6L1499.0 872.2L1498.0 872.1L1497.0 875.3L1496.0 874.3L1495.0 872.1L1494.0 873.0L1493.0 875.6L1492.0 875.1L1491.0 871.2L1490.0 869.5L1489.0 871.7L1488.0 871.6Z" fill="#ff6a6a" fill-opacity="0.95"/><path d="M1520.0 813.5L1521.0 812.6L1522.0 811.1L1523.0 810.4L1524.0 808.3L1525.0 808.7L1526.0 809.6L1527.0 809.8L1528.0 810.5L1529.0 811.7L1530.0 811.8L1531.0 810.6L1532.0 810.3L1533.0 810.6L1534.0 811.0L1535.0 810.7L1536.0 812.5L1537.0 811.9L1538.0 807.9L1539.0 808.9L1540.0 809.2L1541.0 811.9L1542.0 812.7L1543.0 812.4L1544.0 809.8L1545.0 809.7L1546.0 811.5L1547.0 811.9L1548.0 811.8L1549.0 810.3L1550.0 808.5L1551.0 809.2L1552.0 810.5L1553.0 810.3L1554.0 809.9L1555.0 806.4L1556.0 808.8L1557.0 808.2L1558.0 807.9L1559.0 809.3L1560.0 809.4L1561.0 810.5L1562.0 809.6L1563.0 808.9L1564.0 809.5L1565.0 812.1L1566.0 812.4L1567.0 812.7L1568.0 809.4L1569.0 806.6L1570.0 807.5L1571.0 807.3L1572.0 809.4L1573.0 809.0L1574.0 809.7L1575.0 808.6L1576.0 811.6L1577.0 811.6L1578.0 808.5L1579.0 808.7L1580.0 806.0L1581.0 807.2L1582.0 807.0L1583.0 807.5L1584.0 809.9L1585.0 809.3L1586.0 809.2L1587.0 810.7L1588.0 808.7L1589.0 808.9L1590.0 808.9L1591.0 811.0L1592.0 810.1L1593.0 808.6L1594.0 809.1L1595.0 807.8L1596.0 809.7L1597.0 808.2L1598.0 808.3L1599.0 807.6L1600.0 807.2L1600.0 824.1L1599.0 825.7L1598.0 825.6L1597.0 824.7L1596.0 824.9L1595.0 825.9L1594.0 824.1L1593.0 825.7L1592.0 825.5L1591.0 826.6L1590.0 822.7L1589.0 826.0L1588.0 824.7L1587.0 823.9L1586.0 822.2L1585.0 823.2L1584.0 823.3L1583.0 822.5L1582.0 825.5L1581.0 822.4L1580.0 821.2L1579.0 820.3L1578.0 822.2L1577.0 820.1L1576.0 818.5L1575.0 822.2L1574.0 823.0L1573.0 820.7L1572.0 821.1L1571.0 823.6L1570.0 826.3L1569.0 825.3L1568.0 830.3L1567.0 825.5L1566.0 825.3L1565.0 827.1L1564.0 822.9L1563.0 823.7L1562.0 822.8L1561.0 825.0L1560.0 826.8L1559.0 831.9L1558.0 826.7L1557.0 825.6L1556.0 822.8L1555.0 822.1L1554.0 823.2L1553.0 821.3L1552.0 824.8L1551.0 821.2L1550.0 819.7L1549.0 817.9L1548.0 820.5L1547.0 824.8L1546.0 827.7L1545.0 823.1L1544.0 824.7L1543.0 825.3L1542.0 823.2L1541.0 825.3L1540.0 823.0L1539.0 822.6L1538.0 821.9L1537.0 821.6L1536.0 824.1L1535.0 823.2L1534.0 825.2L1533.0 822.4L1532.0 824.6L1531.0 821.3L1530.0 825.1L1529.0 822.2L1528.0 824.6L1527.0 822.0L1526.0 823.7L1525.0 825.3L1524.0 821.6L1523.0 821.7L1522.0 820.8L1521.0 822.6L1520.0 824.0Z" fill="#f06060" fill-opacity="0.35"/><path d="M1630.0 811.2L1631.0 809.6L1632.0 809.1L1633.0 810.5L1634.0 806.7L1635.0 805.2L1636.0 804.5L1637.0 810.7L1638.0 812.5L1639.0 807.9L1640.0 809.9L1641.0 809.5L1642.0 804.2L1643.0 813.5L1644.0 807.9L1645.0 805.1L1646.0 806.4L1647.0 803.0L1648.0 802.2L1649.0 801.3L1650.0 805.1L1651.0 803.4L1652.0 799.3L1653.0 797.9L1654.0 802.5L1655.0 806.9L1656.0 812.1L1657.0 809.0L1658.0 807.8L1659.0 811.3L1660.0 814.3L1661.0 811.2L1662.0 799.0L1663.0 796.4L1664.0 806.9L1665.0 806.5L1666.0 809.6L1667.0 809.6L1668.0 809.5L1669.0 806.5L1670.0 805.9L1671.0 807.7L1672.0 805.5L1673.0 806.0L1674.0 810.8L1675.0 803.9L1676.0 802.4L1677.0 803.1L1678.0 802.8L1679.0 802.7L1680.0 801.0L1681.0 802.7L1682.0 807.1L1683.0 805.2L1684.0 805.0L1685.0 804.1L1686.0 808.4L1687.0 804.7L1688.0 809.9L1689.0 800.5L1690.0 809.4L1691.0 806.4L1692.0 800.9L1693.0 801.7L1694.0 805.8L1695.0 806.1L1696.0 803.1L1697.0 800.5L1698.0 808.0L1699.0 806.3L1700.0 802.7L1701.0 802.5L1702.0 799.4L1703.0 795.4L1704.0 807.8L1705.0 813.2L1706.0 815.6L1707.0 816.1L1708.0 811.5L1709.0 808.6L1710.0 804.4L1711.0 799.7L1712.0 794.9L1713.0 802.5L1714.0 808.6L1715.0 811.0L1716.0 811.7L1717.0 811.8L1718.0 798.6L1719.0 803.2L1720.0 798.4L1721.0 801.5L1722.0 800.4L1723.0 807.2L1724.0 807.5L1725.0 802.2L1726.0 811.7L1727.0 802.5L1728.0 804.2L1729.0 797.8L1730.0 805.3L1731.0 805.9L1732.0 804.8L1733.0 807.8L1734.0 809.1L1735.0 806.5L1736.0 803.5L1737.0 804.7L1738.0 799.2L1739.0 797.4L1740.0 799.1L1741.0 803.2L1742.0 801.0L1743.0 798.0L1744.0 801.9L1745.0 803.2L1746.0 801.0L1747.0 805.1L1748.0 802.9L1749.0 798.8L1750.0 805.0L1751.0 801.9L1752.0 806.4L1753.0 802.7L1754.0 803.2L1755.0 798.7L1756.0 801.0L1757.0 802.7L1758.0 805.7L1759.0 804.4L1760.0 804.2L1761.0 797.1L1762.0 805.2L1763.0 807.9L1764.0 809.4L1765.0 812.0L1766.0 812.6L1767.0 809.3L1768.0 810.5L1769.0 806.8L1770.0 806.3L1770.0 870.1L1769.0 873.3L1768.0 865.3L1767.0 869.5L1766.0 866.1L1765.0 875.3L1764.0 874.8L1763.0 865.7L1762.0 863.2L1761.0 863.7L1760.0 868.9L1759.0 865.4L1758.0 867.3L1757.0 872.3L1756.0 867.4L1755.0 866.8L1754.0 867.9L1753.0 870.2L1752.0 863.6L1751.0 871.1L1750.0 872.4L1749.0 872.0L1748.0 873.9L1747.0 875.2L1746.0 867.1L1745.0 865.8L1744.0 868.8L1743.0 865.9L1742.0 865.7L1741.0 861.2L1740.0 867.8L1739.0 868.8L1738.0 871.4L1737.0 873.3L1736.0 867.1L1735.0 879.5L1734.0 872.2L1733.0 868.9L1732.0 870.8L1731.0 868.6L1730.0 869.2L1729.0 868.8L1728.0 863.0L1727.0 864.9L1726.0 864.4L1725.0 868.5L1724.0 873.2L1723.0 873.8L1722.0 868.2L1721.0 871.0L1720.0 870.5L1719.0 865.2L1718.0 867.6L1717.0 864.7L1716.0 862.4L1715.0 861.8L1714.0 862.3L1713.0 869.9L1712.0 870.0L1711.0 871.8L1710.0 866.9L1709.0 869.0L1708.0 867.6L1707.0 860.8L1706.0 858.5L1705.0 857.1L1704.0 865.2L1703.0 866.8L1702.0 873.0L1701.0 868.6L1700.0 869.2L1699.0 870.0L1698.0 871.3L1697.0 871.6L1696.0 871.6L1695.0 871.2L1694.0 872.5L1693.0 873.6L1692.0 872.4L1691.0 868.1L1690.0 870.3L1689.0 871.2L1688.0 868.9L1687.0 864.4L1686.0 863.1L1685.0 866.5L1684.0 866.6L1683.0 869.0L1682.0 867.8L1681.0 870.9L1680.0 877.7L1679.0 873.5L1678.0 876.4L1677.0 871.0L1676.0 872.0L1675.0 873.8L1674.0 881.5L1673.0 879.7L1672.0 874.8L1671.0 876.6L1670.0 872.2L1669.0 876.0L1668.0 877.5L1667.0 878.9L1666.0 873.0L1665.0 870.5L1664.0 873.4L1663.0 867.3L1662.0 869.6L1661.0 871.0L1660.0 871.2L1659.0 869.2L1658.0 868.9L1657.0 869.0L1656.0 868.7L1655.0 868.5L1654.0 868.6L1653.0 868.7L1652.0 865.3L1651.0 866.0L1650.0 864.5L1649.0 866.6L1648.0 866.4L1647.0 869.9L1646.0 871.8L1645.0 877.1L1644.0 872.8L1643.0 872.7L1642.0 866.9L1641.0 870.0L1640.0 871.0L1639.0 871.1L1638.0 868.1L1637.0 861.6L1636.0 867.5L1635.0 874.2L1634.0 872.9L1633.0 867.9L1632.0 862.3L1631.0 865.9L1630.0 871.0Z" fill="#30d840" fill-opacity="0.3"/><path d="M1630.0 820.8L1631.0 824.0L1632.0 823.0L1633.0 822.7L1634.0 822.0L1635.0 820.7L1636.0 821.0L1637.0 824.7L1638.0 822.7L1639.0 824.5L1640.0 820.5L1641.0 823.3L1642.0 818.4L1643.0 824.3L1644.0 823.6L1645.0 821.6L1646.0 826.5L1647.0 827.3L1648.0 821.3L1649.0 821.9L1650.0 818.4L1651.0 822.0L1652.0 817.0L1653.0 822.3L1654.0 820.8L1655.0 825.0L1656.0 822.9L1657.0 821.1L1658.0 819.1L1659.0 823.7L1660.0 820.5L1661.0 820.7L1662.0 814.6L1663.0 817.6L1664.0 819.5L1665.0 818.7L1666.0 816.4L1667.0 820.1L1668.0 818.1L1669.0 817.5L1670.0 817.8L1671.0 816.0L1672.0 815.5L1673.0 818.1L1674.0 820.4L1675.0 814.2L1676.0 816.4L1677.0 810.9L1678.0 812.3L1679.0 816.2L1680.0 816.3L1681.0 818.1L1682.0 815.2L1683.0 817.0L1684.0 817.0L1685.0 816.1L1686.0 813.7L1687.0 814.5L1688.0 815.2L1689.0 815.7L1690.0 813.8L1691.0 809.7L1692.0 817.3L1693.0 814.0L1694.0 812.8L1695.0 811.0L1696.0 812.4L1697.0 816.1L1698.0 817.9L1699.0 818.3L1700.0 819.1L1701.0 813.0L1702.0 814.4L1703.0 814.2L1704.0 818.1L1705.0 819.8L1706.0 817.5L1707.0 814.5L1708.0 810.4L1709.0 811.8L1710.0 814.8L1711.0 819.6L1712.0 818.8L1713.0 817.0L1714.0 814.7L1715.0 808.6L1716.0 816.6L1717.0 819.0L1718.0 815.8L1719.0 815.5L1720.0 808.5L1721.0 811.2L1722.0 810.0L1723.0 813.6L1724.0 813.2L1725.0 811.1L1726.0 815.8L1727.0 815.0L1728.0 815.3L1729.0 816.7L1730.0 814.0L1731.0 817.2L1732.0 813.6L1733.0 813.3L1734.0 815.4L1735.0 812.9L1736.0 813.2L1737.0 818.5L1738.0 816.1L1739.0 816.5L1740.0 811.0L1741.0 815.3L1742.0 815.7L1743.0 812.8L1744.0 814.6L1745.0 810.6L1746.0 810.9L1747.0 812.3L1748.0 811.6L1749.0 816.8L1750.0 817.7L1751.0 817.3L1752.0 811.3L1753.0 810.9L1754.0 812.8L1755.0 811.9L1756.0 809.0L1757.0 808.0L1758.0 810.6L1759.0 809.2L1760.0 807.9L1761.0 807.9L1762.0 816.1L1763.0 815.1L1764.0 817.2L1765.0 812.2L1766.0 813.2L1767.0 808.3L1768.0 811.9L1769.0 815.3L1770.0 817.1L1770.0 853.7L1769.0 853.2L1768.0 853.4L1767.0 856.3L1766.0 855.2L1765.0 854.7L1764.0 855.7L1763.0 857.5L1762.0 859.3L1761.0 859.4L1760.0 856.8L1759.0 859.5L1758.0 856.5L1757.0 861.4L1756.0 863.1L1755.0 859.9L1754.0 865.2L1753.0 865.2L1752.0 862.3L1751.0 856.8L1750.0 856.8L1749.0 857.8L1748.0 857.0L1747.0 858.2L1746.0 859.3L1745.0 861.4L1744.0 862.5L1743.0 863.7L1742.0 864.3L1741.0 865.0L1740.0 865.0L1739.0 864.6L1738.0 863.4L1737.0 862.1L1736.0 865.2L1735.0 865.5L1734.0 865.4L1733.0 864.2L1732.0 862.0L1731.0 860.2L1730.0 859.9L1729.0 861.0L1728.0 861.9L1727.0 863.7L1726.0 861.2L1725.0 864.0L1724.0 864.5L1723.0 865.2L1722.0 864.6L1721.0 861.4L1720.0 861.0L1719.0 861.2L1718.0 862.2L1717.0 863.9L1716.0 872.2L1715.0 864.3L1714.0 866.2L1713.0 860.4L1712.0 860.0L1711.0 860.3L1710.0 863.6L1709.0 863.0L1708.0 857.2L1707.0 860.8L1706.0 863.0L1705.0 862.8L1704.0 862.2L1703.0 861.5L1702.0 861.9L1701.0 864.0L1700.0 860.7L1699.0 860.5L1698.0 860.1L1697.0 859.5L1696.0 860.9L1695.0 859.4L1694.0 863.3L1693.0 861.1L1692.0 862.3L1691.0 862.7L1690.0 864.7L1689.0 864.0L1688.0 861.5L1687.0 868.9L1686.0 856.8L1685.0 859.0L1684.0 858.0L1683.0 860.5L1682.0 856.4L1681.0 859.2L1680.0 862.3L1679.0 862.9L1678.0 864.5L1677.0 864.2L1676.0 865.6L1675.0 860.2L1674.0 860.4L1673.0 858.7L1672.0 861.1L1671.0 858.5L1670.0 859.7L1669.0 856.5L1668.0 855.8L1667.0 857.7L1666.0 860.5L1665.0 861.6L1664.0 860.4L1663.0 858.9L1662.0 857.0L1661.0 857.2L1660.0 863.2L1659.0 859.7L1658.0 863.3L1657.0 858.6L1656.0 861.9L1655.0 861.2L1654.0 860.6L1653.0 863.6L1652.0 860.3L1651.0 861.6L1650.0 865.2L1649.0 861.4L1648.0 857.7L1647.0 853.2L1646.0 854.9L1645.0 858.1L1644.0 863.9L1643.0 861.1L1642.0 863.5L1641.0 864.2L1640.0 859.7L1639.0 860.3L1638.0 857.9L1637.0 861.7L1636.0 858.8L1635.0 856.6L1634.0 863.9L1633.0 857.1L1632.0 858.8L1631.0 859.2L1630.0 862.5Z" fill="#30d840" fill-opacity="0.5"/><path d="M1630.0 830.6L1631.0 830.3L1632.0 831.1L1633.0 830.6L1634.0 831.5L1635.0 831.1L1636.0 828.8L1637.0 829.1L1638.0 830.0L1639.0 831.6L1640.0 832.3L1641.0 831.9L1642.0 831.8L1643.0 829.9L1644.0 828.4L1645.0 829.6L1646.0 831.2L1647.0 830.6L1648.0 829.3L1649.0 828.2L1650.0 830.1L1651.0 830.7L1652.0 830.4L1653.0 831.8L1654.0 830.7L1655.0 828.3L1656.0 830.1L1657.0 831.3L1658.0 829.9L1659.0 828.1L1660.0 828.8L1661.0 832.4L1662.0 830.2L1663.0 831.4L1664.0 827.7L1665.0 825.2L1666.0 827.3L1667.0 826.8L1668.0 829.6L1669.0 829.1L1670.0 830.1L1671.0 829.1L1672.0 830.7L1673.0 830.1L1674.0 828.6L1675.0 828.6L1676.0 829.7L1677.0 828.6L1678.0 828.2L1679.0 827.5L1680.0 828.1L1681.0 826.9L1682.0 829.5L1683.0 828.3L1684.0 827.1L1685.0 825.6L1686.0 825.4L1687.0 827.5L1688.0 828.9L1689.0 829.5L1690.0 828.9L1691.0 827.0L1692.0 827.9L1693.0 829.4L1694.0 828.9L1695.0 829.7L1696.0 833.0L1697.0 831.0L1698.0 830.5L1699.0 828.2L1700.0 828.1L1701.0 829.5L1702.0 831.6L1703.0 829.9L1704.0 830.9L1705.0 828.7L1706.0 829.8L1707.0 830.5L1708.0 829.1L1709.0 828.9L1710.0 830.8L1711.0 832.3L1712.0 833.8L1713.0 832.6L1714.0 829.2L1715.0 829.7L1716.0 830.9L1717.0 833.3L1718.0 831.5L1719.0 831.7L1720.0 831.0L1721.0 830.3L1722.0 833.0L1723.0 831.2L1724.0 831.8L1725.0 829.8L1726.0 829.7L1727.0 829.7L1728.0 832.0L1729.0 831.6L1730.0 833.9L1731.0 831.8L1732.0 830.3L1733.0 829.8L1734.0 831.7L1735.0 831.3L1736.0 828.9L1737.0 827.0L1738.0 826.9L1739.0 828.8L1740.0 827.2L1741.0 827.1L1742.0 828.4L1743.0 826.4L1744.0 827.2L1745.0 825.0L1746.0 824.6L1747.0 825.0L1748.0 822.9L1749.0 822.2L1750.0 825.2L1751.0 825.8L1752.0 824.3L1753.0 819.9L1754.0 821.2L1755.0 823.9L1756.0 823.8L1757.0 822.5L1758.0 819.3L1759.0 821.5L1760.0 821.1L1761.0 822.7L1762.0 818.8L1763.0 821.5L1764.0 820.0L1765.0 823.8L1766.0 824.0L1767.0 824.5L1768.0 821.8L1769.0 820.7L1770.0 820.5L1770.0 850.4L1769.0 851.9L1768.0 848.9L1767.0 849.5L1766.0 849.7L1765.0 849.6L1764.0 851.0L1763.0 855.7L1762.0 853.7L1761.0 856.3L1760.0 851.1L1759.0 850.9L1758.0 851.5L1757.0 853.4L1756.0 852.3L1755.0 852.0L1754.0 852.0L1753.0 852.6L1752.0 857.1L1751.0 855.1L1750.0 854.1L1749.0 854.7L1748.0 855.1L1747.0 853.7L1746.0 854.1L1745.0 854.3L1744.0 854.0L1743.0 853.9L1742.0 853.6L1741.0 856.2L1740.0 854.5L1739.0 856.7L1738.0 855.1L1737.0 853.9L1736.0 857.5L1735.0 855.7L1734.0 851.2L1733.0 852.2L1732.0 856.2L1731.0 856.2L1730.0 854.8L1729.0 856.3L1728.0 854.1L1727.0 857.7L1726.0 856.7L1725.0 858.6L1724.0 857.3L1723.0 855.6L1722.0 854.3L1721.0 851.7L1720.0 852.8L1719.0 852.7L1718.0 850.4L1717.0 850.8L1716.0 852.6L1715.0 854.4L1714.0 853.7L1713.0 852.7L1712.0 852.8L1711.0 853.2L1710.0 851.3L1709.0 850.5L1708.0 849.0L1707.0 853.5L1706.0 850.4L1705.0 851.9L1704.0 851.2L1703.0 851.0L1702.0 849.3L1701.0 847.1L1700.0 848.7L1699.0 849.6L1698.0 849.3L1697.0 850.3L1696.0 853.5L1695.0 851.4L1694.0 853.2L1693.0 854.1L1692.0 852.9L1691.0 853.2L1690.0 852.4L1689.0 850.8L1688.0 849.3L1687.0 851.9L1686.0 854.4L1685.0 857.1L1684.0 853.5L1683.0 854.2L1682.0 850.0L1681.0 850.0L1680.0 849.2L1679.0 852.0L1678.0 852.3L1677.0 854.4L1676.0 855.0L1675.0 852.2L1674.0 850.6L1673.0 848.8L1672.0 850.2L1671.0 851.1L1670.0 853.6L1669.0 850.9L1668.0 854.4L1667.0 852.6L1666.0 852.3L1665.0 852.8L1664.0 853.9L1663.0 852.9L1662.0 850.3L1661.0 848.9L1660.0 852.1L1659.0 853.0L1658.0 857.1L1657.0 853.7L1656.0 851.0L1655.0 849.5L1654.0 850.6L1653.0 848.8L1652.0 847.8L1651.0 850.8L1650.0 848.6L1649.0 851.1L1648.0 850.2L1647.0 852.1L1646.0 851.9L1645.0 851.2L1644.0 850.1L1643.0 852.0L1642.0 851.2L1641.0 851.6L1640.0 851.8L1639.0 857.9L1638.0 854.2L1637.0 856.9L1636.0 853.2L1635.0 854.6L1634.0 852.6L1633.0 854.0L1632.0 853.8L1631.0 851.8L1630.0 849.3Z" fill="#5aff6a" fill-opacity="0.8"/><path d="M1772.0 813.2L1773.0 815.8L1774.0 814.6L1775.0 814.6L1776.0 812.7L1777.0 814.7L1778.0 812.3L1779.0 814.3L1780.0 819.8L1781.0 816.5L1782.0 817.4L1783.0 816.7L1784.0 810.2L1785.0 812.7L1786.0 817.4L1787.0 809.8L1788.0 811.9L1789.0 812.9L1790.0 815.9L1791.0 810.4L1792.0 812.6L1793.0 819.5L1794.0 819.4L1795.0 821.7L1796.0 814.0L1797.0 814.4L1798.0 816.9L1799.0 818.5L1800.0 818.6L1801.0 817.4L1802.0 821.1L1803.0 822.6L1804.0 820.2L1805.0 820.1L1806.0 816.3L1807.0 816.9L1808.0 812.7L1809.0 814.1L1810.0 810.0L1811.0 813.6L1812.0 809.2L1813.0 816.0L1814.0 816.6L1815.0 818.4L1816.0 817.4L1817.0 816.5L1818.0 819.8L1819.0 817.4L1820.0 822.4L1821.0 820.9L1822.0 818.7L1823.0 817.0L1824.0 809.8L1825.0 807.6L1826.0 816.7L1827.0 822.5L1828.0 820.0L1829.0 820.8L1830.0 818.5L1831.0 815.9L1832.0 820.7L1833.0 822.4L1834.0 819.1L1835.0 819.7L1836.0 820.3L1837.0 816.8L1838.0 815.1L1839.0 815.7L1840.0 819.5L1841.0 819.8L1842.0 820.8L1843.0 814.5L1844.0 813.6L1845.0 815.9L1846.0 813.3L1847.0 815.5L1848.0 816.4L1849.0 817.9L1850.0 818.3L1851.0 817.8L1852.0 813.5L1853.0 816.1L1854.0 818.4L1855.0 819.9L1856.0 822.9L1857.0 821.2L1858.0 817.0L1859.0 821.6L1860.0 820.3L1861.0 821.2L1862.0 822.2L1863.0 815.7L1864.0 817.3L1865.0 809.6L1866.0 814.9L1867.0 812.5L1868.0 805.7L1869.0 803.4L1870.0 807.3L1871.0 815.9L1872.0 816.5L1873.0 814.2L1874.0 807.4L1875.0 810.3L1876.0 811.0L1877.0 819.8L1878.0 818.6L1879.0 822.0L1880.0 811.8L1881.0 815.2L1882.0 812.1L1883.0 809.2L1884.0 810.9L1885.0 802.1L1886.0 805.4L1887.0 804.4L1888.0 802.6L1889.0 796.8L1890.0 789.5L1891.0 793.4L1892.0 797.7L1893.0 798.6L1894.0 795.9L1895.0 793.4L1896.0 798.7L1897.0 794.3L1898.0 795.6L1899.0 798.3L1900.0 799.7L1901.0 795.7L1902.0 795.8L1903.0 789.8L1904.0 789.1L1905.0 787.5L1906.0 792.9L1907.0 792.1L1908.0 792.7L1909.0 793.1L1910.0 787.8L1911.0 791.7L1912.0 796.3L1912.0 861.9L1911.0 861.7L1910.0 863.0L1909.0 862.3L1908.0 859.7L1907.0 856.0L1906.0 861.2L1905.0 860.1L1904.0 860.1L1903.0 863.7L1902.0 859.8L1901.0 860.1L1900.0 855.3L1899.0 861.6L1898.0 855.4L1897.0 862.5L1896.0 861.0L1895.0 866.2L1894.0 865.7L1893.0 871.5L1892.0 868.3L1891.0 864.6L1890.0 867.1L1889.0 863.0L1888.0 865.3L1887.0 863.9L1886.0 861.0L1885.0 865.9L1884.0 864.7L1883.0 872.6L1882.0 869.3L1881.0 864.1L1880.0 864.9L1879.0 868.7L1878.0 862.8L1877.0 868.1L1876.0 865.4L1875.0 866.1L1874.0 870.0L1873.0 872.6L1872.0 871.6L1871.0 865.6L1870.0 863.9L1869.0 865.5L1868.0 860.4L1867.0 863.8L1866.0 861.7L1865.0 867.3L1864.0 861.6L1863.0 867.7L1862.0 873.0L1861.0 871.7L1860.0 870.9L1859.0 866.1L1858.0 868.6L1857.0 865.6L1856.0 864.4L1855.0 860.7L1854.0 862.9L1853.0 867.3L1852.0 866.1L1851.0 869.8L1850.0 861.7L1849.0 862.7L1848.0 861.8L1847.0 870.0L1846.0 868.1L1845.0 868.9L1844.0 864.6L1843.0 866.6L1842.0 869.9L1841.0 874.6L1840.0 877.8L1839.0 876.1L1838.0 867.7L1837.0 871.2L1836.0 861.9L1835.0 868.4L1834.0 873.2L1833.0 869.3L1832.0 867.0L1831.0 867.4L1830.0 872.4L1829.0 873.8L1828.0 872.9L1827.0 870.1L1826.0 870.3L1825.0 865.6L1824.0 872.1L1823.0 873.7L1822.0 872.0L1821.0 872.6L1820.0 873.1L1819.0 864.2L1818.0 866.4L1817.0 864.1L1816.0 869.6L1815.0 870.0L1814.0 869.7L1813.0 862.5L1812.0 868.6L1811.0 870.5L1810.0 864.8L1809.0 866.8L1808.0 864.8L1807.0 871.0L1806.0 864.9L1805.0 868.1L1804.0 865.4L1803.0 867.9L1802.0 864.6L1801.0 872.1L1800.0 878.4L1799.0 883.0L1798.0 870.5L1797.0 866.8L1796.0 862.8L1795.0 866.5L1794.0 871.2L1793.0 863.8L1792.0 864.9L1791.0 871.6L1790.0 872.4L1789.0 875.0L1788.0 868.0L1787.0 865.9L1786.0 871.0L1785.0 869.1L1784.0 864.8L1783.0 861.4L1782.0 868.1L1781.0 869.3L1780.0 866.2L1779.0 864.7L1778.0 862.9L1777.0 864.0L1776.0 862.4L1775.0 859.5L1774.0 857.7L1773.0 866.7L1772.0 869.1Z" fill="#4a5cff" fill-opacity="0.35"/><path d="M1772.0 827.0L1773.0 828.7L1774.0 829.1L1775.0 828.4L1776.0 826.4L1777.0 829.5L1778.0 830.9L1779.0 828.9L1780.0 828.8L1781.0 824.7L1782.0 828.5L1783.0 829.9L1784.0 831.7L1785.0 828.5L1786.0 826.0L1787.0 827.2L1788.0 829.9L1789.0 829.3L1790.0 826.5L1791.0 829.0L1792.0 828.2L1793.0 823.7L1794.0 827.3L1795.0 827.5L1796.0 825.0L1797.0 827.4L1798.0 826.5L1799.0 827.9L1800.0 828.0L1801.0 828.7L1802.0 828.8L1803.0 830.6L1804.0 830.6L1805.0 830.4L1806.0 824.9L1807.0 823.8L1808.0 826.3L1809.0 830.4L1810.0 829.9L1811.0 828.7L1812.0 826.8L1813.0 827.9L1814.0 827.9L1815.0 826.9L1816.0 825.8L1817.0 820.2L1818.0 826.9L1819.0 827.9L1820.0 830.4L1821.0 829.1L1822.0 826.4L1823.0 827.7L1824.0 827.6L1825.0 826.5L1826.0 826.0L1827.0 828.7L1828.0 831.3L1829.0 829.5L1830.0 827.1L1831.0 824.8L1832.0 824.8L1833.0 822.8L1834.0 825.8L1835.0 822.3L1836.0 826.2L1837.0 826.6L1838.0 828.7L1839.0 828.5L1840.0 830.9L1841.0 830.2L1842.0 828.1L1843.0 825.2L1844.0 827.2L1845.0 827.6L1846.0 828.3L1847.0 828.4L1848.0 830.4L1849.0 833.9L1850.0 831.5L1851.0 828.2L1852.0 830.6L1853.0 828.7L1854.0 829.9L1855.0 832.0L1856.0 832.1L1857.0 828.8L1858.0 826.1L1859.0 825.9L1860.0 825.8L1861.0 827.9L1862.0 829.5L1863.0 828.4L1864.0 828.5L1865.0 824.6L1866.0 826.0L1867.0 824.7L1868.0 827.4L1869.0 825.0L1870.0 825.4L1871.0 823.8L1872.0 822.8L1873.0 823.0L1874.0 822.0L1875.0 823.0L1876.0 825.8L1877.0 825.3L1878.0 827.9L1879.0 825.9L1880.0 821.8L1881.0 821.5L1882.0 822.0L1883.0 825.2L1884.0 824.5L1885.0 820.4L1886.0 815.1L1887.0 816.7L1888.0 815.3L1889.0 812.8L1890.0 811.6L1891.0 808.6L1892.0 807.1L1893.0 807.3L1894.0 803.1L1895.0 807.3L1896.0 806.8L1897.0 807.6L1898.0 807.2L1899.0 807.8L1900.0 808.0L1901.0 805.7L1902.0 805.2L1903.0 807.2L1904.0 808.6L1905.0 808.2L1906.0 805.9L1907.0 807.6L1908.0 803.4L1909.0 801.1L1910.0 805.6L1911.0 805.6L1912.0 805.7L1912.0 849.2L1911.0 850.3L1910.0 852.9L1909.0 854.2L1908.0 850.0L1907.0 851.6L1906.0 849.8L1905.0 850.7L1904.0 852.3L1903.0 853.7L1902.0 854.5L1901.0 851.4L1900.0 851.0L1899.0 853.6L1898.0 855.1L1897.0 851.8L1896.0 850.4L1895.0 850.9L1894.0 852.4L1893.0 853.4L1892.0 851.1L1891.0 848.6L1890.0 850.4L1889.0 855.0L1888.0 848.2L1887.0 849.1L1886.0 850.5L1885.0 849.7L1884.0 855.1L1883.0 855.0L1882.0 855.7L1881.0 850.2L1880.0 851.0L1879.0 851.7L1878.0 855.2L1877.0 852.7L1876.0 853.4L1875.0 852.9L1874.0 859.7L1873.0 859.8L1872.0 856.2L1871.0 855.1L1870.0 856.0L1869.0 853.6L1868.0 857.0L1867.0 853.6L1866.0 853.2L1865.0 854.7L1864.0 857.4L1863.0 863.2L1862.0 859.8L1861.0 857.8L1860.0 858.6L1859.0 860.0L1858.0 862.8L1857.0 860.4L1856.0 863.5L1855.0 862.5L1854.0 859.2L1853.0 856.6L1852.0 858.6L1851.0 856.9L1850.0 852.2L1849.0 855.3L1848.0 859.9L1847.0 861.4L1846.0 857.4L1845.0 853.2L1844.0 856.6L1843.0 856.6L1842.0 857.6L1841.0 860.0L1840.0 862.8L1839.0 861.4L1838.0 862.5L1837.0 857.9L1836.0 859.0L1835.0 859.5L1834.0 862.7L1833.0 860.8L1832.0 856.9L1831.0 856.1L1830.0 858.0L1829.0 859.7L1828.0 860.9L1827.0 858.8L1826.0 858.5L1825.0 860.1L1824.0 859.9L1823.0 860.4L1822.0 853.7L1821.0 858.3L1820.0 858.6L1819.0 856.7L1818.0 859.5L1817.0 860.2L1816.0 862.7L1815.0 858.3L1814.0 857.1L1813.0 859.8L1812.0 860.9L1811.0 861.4L1810.0 859.2L1809.0 859.0L1808.0 863.1L1807.0 863.0L1806.0 862.2L1805.0 860.4L1804.0 860.7L1803.0 856.2L1802.0 856.8L1801.0 860.1L1800.0 860.2L1799.0 862.2L1798.0 856.5L1797.0 855.3L1796.0 857.6L1795.0 854.7L1794.0 854.0L1793.0 858.1L1792.0 857.2L1791.0 855.9L1790.0 856.3L1789.0 859.8L1788.0 859.3L1787.0 860.9L1786.0 862.3L1785.0 860.9L1784.0 858.0L1783.0 859.1L1782.0 861.8L1781.0 853.8L1780.0 854.6L1779.0 859.4L1778.0 858.4L1777.0 857.3L1776.0 855.4L1775.0 856.8L1774.0 852.9L1773.0 852.1L1772.0 853.6Z" fill="#5a6cff" fill-opacity="0.55"/><path d="M1772.0 829.1L1773.0 828.3L1774.0 827.7L1775.0 829.8L1776.0 829.8L1777.0 831.9L1778.0 832.8L1779.0 833.4L1780.0 834.0L1781.0 831.3L1782.0 830.5L1783.0 830.4L1784.0 831.1L1785.0 832.0L1786.0 831.4L1787.0 830.2L1788.0 831.4L1789.0 831.2L1790.0 832.4L1791.0 833.7L1792.0 835.5L1793.0 833.9L1794.0 832.3L1795.0 831.1L1796.0 833.8L1797.0 832.9L1798.0 832.8L1799.0 831.5L1800.0 833.0L1801.0 832.5L1802.0 832.5L1803.0 833.6L1804.0 835.1L1805.0 834.1L1806.0 832.6L1807.0 834.8L1808.0 834.3L1809.0 833.2L1810.0 833.3L1811.0 835.2L1812.0 836.8L1813.0 836.4L1814.0 836.3L1815.0 833.4L1816.0 833.6L1817.0 833.9L1818.0 835.2L1819.0 834.2L1820.0 833.9L1821.0 834.3L1822.0 833.6L1823.0 833.0L1824.0 832.4L1825.0 833.7L1826.0 833.6L1827.0 835.7L1828.0 835.2L1829.0 836.7L1830.0 835.1L1831.0 836.1L1832.0 834.9L1833.0 834.4L1834.0 832.5L1835.0 832.4L1836.0 832.6L1837.0 835.2L1838.0 835.0L1839.0 834.4L1840.0 834.6L1841.0 835.4L1842.0 834.6L1843.0 833.8L1844.0 833.2L1845.0 835.1L1846.0 833.8L1847.0 832.8L1848.0 833.6L1849.0 833.0L1850.0 834.0L1851.0 833.1L1852.0 835.1L1853.0 835.5L1854.0 833.6L1855.0 835.3L1856.0 833.9L1857.0 835.3L1858.0 832.4L1859.0 834.1L1860.0 832.2L1861.0 832.9L1862.0 832.0L1863.0 831.8L1864.0 832.4L1865.0 831.6L1866.0 832.2L1867.0 833.0L1868.0 831.9L1869.0 834.7L1870.0 834.5L1871.0 834.3L1872.0 831.7L1873.0 829.8L1874.0 829.6L1875.0 829.6L1876.0 831.8L1877.0 830.2L1878.0 830.5L1879.0 828.3L1880.0 829.2L1881.0 830.4L1882.0 828.0L1883.0 824.9L1884.0 827.3L1885.0 827.4L1886.0 826.8L1887.0 825.3L1888.0 824.4L1889.0 820.5L1890.0 821.2L1891.0 819.2L1892.0 821.7L1893.0 818.9L1894.0 817.4L1895.0 815.3L1896.0 817.1L1897.0 817.6L1898.0 819.0L1899.0 818.5L1900.0 818.9L1901.0 816.2L1902.0 815.7L1903.0 815.2L1904.0 813.0L1905.0 814.4L1906.0 814.4L1907.0 816.1L1908.0 815.5L1909.0 814.9L1910.0 815.3L1911.0 815.1L1912.0 815.0L1912.0 842.6L1911.0 841.5L1910.0 841.4L1909.0 841.3L1908.0 840.9L1907.0 840.4L1906.0 841.0L1905.0 843.6L1904.0 842.6L1903.0 844.9L1902.0 844.9L1901.0 842.7L1900.0 843.2L1899.0 841.9L1898.0 841.6L1897.0 839.8L1896.0 841.1L1895.0 839.8L1894.0 841.1L1893.0 842.6L1892.0 844.9L1891.0 846.5L1890.0 846.4L1889.0 846.7L1888.0 846.5L1887.0 847.3L1886.0 848.7L1885.0 847.4L1884.0 846.8L1883.0 847.9L1882.0 848.2L1881.0 848.4L1880.0 848.6L1879.0 850.7L1878.0 851.1L1877.0 849.4L1876.0 850.1L1875.0 848.3L1874.0 849.4L1873.0 848.8L1872.0 847.7L1871.0 847.6L1870.0 847.3L1869.0 848.5L1868.0 847.8L1867.0 847.3L1866.0 847.5L1865.0 850.1L1864.0 849.1L1863.0 850.7L1862.0 848.7L1861.0 849.9L1860.0 849.1L1859.0 847.9L1858.0 847.0L1857.0 845.5L1856.0 847.7L1855.0 846.4L1854.0 847.0L1853.0 849.0L1852.0 850.6L1851.0 849.8L1850.0 849.7L1849.0 846.5L1848.0 847.6L1847.0 847.1L1846.0 849.0L1845.0 849.1L1844.0 849.7L1843.0 849.8L1842.0 851.9L1841.0 849.0L1840.0 849.3L1839.0 849.9L1838.0 853.2L1837.0 850.2L1836.0 852.4L1835.0 851.1L1834.0 850.7L1833.0 850.4L1832.0 848.0L1831.0 851.2L1830.0 849.8L1829.0 856.1L1828.0 852.1L1827.0 851.4L1826.0 850.3L1825.0 850.3L1824.0 850.7L1823.0 848.7L1822.0 849.3L1821.0 850.0L1820.0 852.2L1819.0 853.5L1818.0 855.6L1817.0 853.3L1816.0 852.9L1815.0 851.6L1814.0 851.9L1813.0 852.2L1812.0 850.4L1811.0 851.9L1810.0 850.6L1809.0 852.9L1808.0 853.1L1807.0 850.2L1806.0 849.6L1805.0 849.0L1804.0 849.0L1803.0 849.5L1802.0 849.3L1801.0 849.5L1800.0 850.9L1799.0 849.7L1798.0 852.2L1797.0 850.8L1796.0 851.9L1795.0 849.1L1794.0 849.5L1793.0 848.8L1792.0 849.9L1791.0 850.4L1790.0 847.8L1789.0 846.4L1788.0 847.1L1787.0 844.8L1786.0 846.0L1785.0 848.8L1784.0 848.4L1783.0 846.3L1782.0 846.6L1781.0 844.0L1780.0 846.9L1779.0 845.0L1778.0 844.2L1777.0 847.7L1776.0 847.7L1775.0 848.4L1774.0 849.5L1773.0 849.5L1772.0 847.5Z" fill="#8a98ff" fill-opacity="0.85"/><path d="M1812.0 874.3L1813.0 870.7L1814.0 871.2L1815.0 873.4L1816.0 872.2L1817.0 872.0L1818.0 874.7L1819.0 876.9L1820.0 875.7L1821.0 875.5L1822.0 874.6L1823.0 873.8L1824.0 872.2L1825.0 874.9L1826.0 874.9L1827.0 879.6L1828.0 870.9L1829.0 877.3L1830.0 872.2L1831.0 875.4L1832.0 876.0L1833.0 873.1L1834.0 875.5L1835.0 877.8L1836.0 875.1L1837.0 878.6L1838.0 872.9L1839.0 875.1L1840.0 876.4L1841.0 872.1L1842.0 872.2L1843.0 876.9L1844.0 874.5L1845.0 878.8L1846.0 873.1L1847.0 875.0L1848.0 876.9L1849.0 875.8L1850.0 877.0L1851.0 873.3L1852.0 876.4L1853.0 872.9L1854.0 874.6L1855.0 877.7L1856.0 873.3L1857.0 874.7L1858.0 875.5L1859.0 876.2L1860.0 871.9L1861.0 875.9L1862.0 878.8L1863.0 874.4L1864.0 872.7L1865.0 875.5L1866.0 872.6L1867.0 875.3L1868.0 875.3L1869.0 874.3L1870.0 874.4L1871.0 872.6L1872.0 874.1L1873.0 877.0L1874.0 868.7L1875.0 871.6L1876.0 873.0L1877.0 871.1L1878.0 870.8L1878.0 911.6L1877.0 916.7L1876.0 911.2L1875.0 920.6L1874.0 931.9L1873.0 921.1L1872.0 937.4L1871.0 951.5L1870.0 948.8L1869.0 953.6L1868.0 960.7L1867.0 964.8L1866.0 967.9L1865.0 981.3L1864.0 974.9L1863.0 977.7L1862.0 971.0L1861.0 979.4L1860.0 1008.3L1859.0 1006.5L1858.0 999.7L1857.0 1012.1L1856.0 1006.6L1855.0 1007.5L1854.0 1005.9L1853.0 1009.7L1852.0 993.2L1851.0 1000.5L1850.0 1000.1L1849.0 1019.1L1848.0 1012.9L1847.0 998.8L1846.0 1007.7L1845.0 1009.9L1844.0 1004.3L1843.0 1006.4L1842.0 1009.7L1841.0 1018.5L1840.0 1017.6L1839.0 1009.8L1838.0 1020.7L1837.0 1022.6L1836.0 984.3L1835.0 1012.2L1834.0 1024.2L1833.0 1006.4L1832.0 1013.0L1831.0 987.3L1830.0 1023.6L1829.0 998.7L1828.0 984.7L1827.0 991.5L1826.0 991.4L1825.0 978.4L1824.0 975.6L1823.0 963.7L1822.0 980.8L1821.0 971.0L1820.0 969.4L1819.0 943.8L1818.0 940.0L1817.0 946.4L1816.0 943.2L1815.0 924.3L1814.0 922.2L1813.0 908.3L1812.0 909.6Z" fill="#3038c8" fill-opacity="0.26"/><path d="M1816.0 870.1L1817.0 870.4L1818.0 871.9L1819.0 870.4L1820.0 869.5L1821.0 873.9L1822.0 873.2L1823.0 875.8L1824.0 871.6L1825.0 873.2L1826.0 873.0L1827.0 870.6L1828.0 872.4L1829.0 872.2L1830.0 873.8L1831.0 874.6L1832.0 869.5L1833.0 873.7L1834.0 873.9L1835.0 875.9L1836.0 876.2L1837.0 873.0L1838.0 874.0L1839.0 872.6L1840.0 872.7L1841.0 874.6L1842.0 870.9L1843.0 873.5L1844.0 871.6L1845.0 869.8L1846.0 872.9L1847.0 872.3L1848.0 875.9L1849.0 873.4L1850.0 870.1L1851.0 872.1L1852.0 872.6L1853.0 875.7L1854.0 874.8L1855.0 873.1L1856.0 876.6L1857.0 874.0L1858.0 871.3L1859.0 872.1L1860.0 873.9L1861.0 870.9L1862.0 866.4L1863.0 874.8L1864.0 871.2L1865.0 872.9L1866.0 870.9L1867.0 874.8L1868.0 872.0L1869.0 874.4L1870.0 869.3L1871.0 877.1L1872.0 876.7L1873.0 872.5L1874.0 874.1L1874.0 886.0L1873.0 883.9L1872.0 891.0L1871.0 895.0L1870.0 898.2L1869.0 893.1L1868.0 897.4L1867.0 903.0L1866.0 894.8L1865.0 894.2L1864.0 898.8L1863.0 883.0L1862.0 898.6L1861.0 893.0L1860.0 892.1L1859.0 890.4L1858.0 906.0L1857.0 899.2L1856.0 900.9L1855.0 883.9L1854.0 898.1L1853.0 907.8L1852.0 902.1L1851.0 904.3L1850.0 895.4L1849.0 897.6L1848.0 900.7L1847.0 895.2L1846.0 895.2L1845.0 903.8L1844.0 903.5L1843.0 895.4L1842.0 902.6L1841.0 902.2L1840.0 905.7L1839.0 892.3L1838.0 901.2L1837.0 899.4L1836.0 897.8L1835.0 897.4L1834.0 902.4L1833.0 897.6L1832.0 885.1L1831.0 899.5L1830.0 902.3L1829.0 902.5L1828.0 900.6L1827.0 900.0L1826.0 889.5L1825.0 901.6L1824.0 892.5L1823.0 910.4L1822.0 891.9L1821.0 888.1L1820.0 904.0L1819.0 890.4L1818.0 891.9L1817.0 903.2L1816.0 903.1Z" fill="#4a58ff" fill-opacity="0.4"/></g></svg>
<!-- 90_bottom -->
<div class="abs" style="left:0px;top:1031px;width:1920px;height:49px;background:#18191a;"></div>
<div class="abs" style="left:1021px;top:1031px;width:118px;height:49px;background:#000;"></div>
<div class="abs" style="left:1021px;top:1078px;width:118px;height:2px;background:#e0503c;"></div>
<svg style="left:45.5px;top:1046.5px;" width="19" height="19" viewBox="0 0 19 19"><path d="M9.500 0.500c3 0 5 2.700 4.200 5.500-.6 2-2.200 3.300-4.200 4-2-.7-3.600-2-4.200-4-.8-2.800 1.200-5.500 4.200-5.500z" fill="#f2f2f2"/><path d="M9.500 0.500c3 0 5 2.700 4.200 5.500-.6 2-2.200 3.300-4.200 4-2-.7-3.600-2-4.200-4-.8-2.800 1.200-5.500 4.200-5.500z" fill="#f2f2f2" transform="rotate(120 9.500 10.800)"/><path d="M9.500 0.500c3 0 5 2.700 4.200 5.500-.6 2-2.200 3.300-4.200 4-2-.7-3.600-2-4.200-4-.8-2.800 1.200-5.500 4.200-5.500z" fill="#f2f2f2" transform="rotate(240 9.500 10.800)"/></svg>
<div class="t" style="left:73.0px;top:1046.5px;font-size:14.5px;color:#e8e8e8;transform:scaleX(0.891);transform-origin:0 50%;">DaVinci Resolve 16</div>
<div class="t" style="left:581.1px;top:1057.0px;font-size:14.5px;color:#8e8e92;transform:scaleX(0.930);transform-origin:0 50%;">Media</div>
<div class="t" style="left:709.0px;top:1057.0px;font-size:14.5px;color:#8e8e92;transform:scaleX(0.930);transform-origin:0 50%;">Cut</div>
<div class="t" style="left:827.9px;top:1057.0px;font-size:14.5px;color:#8e8e92;transform:scaleX(0.930);transform-origin:0 50%;">Edit</div>
<div class="t" style="left:939.3px;top:1057.0px;font-size:14.5px;color:#8e8e92;transform:scaleX(0.930);transform-origin:0 50%;">Fusion</div>
<div class="t" style="left:1062.5px;top:1057.0px;font-size:14.5px;color:#f4f4f4;transform:scaleX(0.983);transform-origin:0 50%;-webkit-text-stroke:0.45px;">Color</div>
<div class="t" style="left:1175.5px;top:1057.0px;font-size:14.5px;color:#8e8e92;transform:scaleX(0.930);transform-origin:0 50%;">Fairlight</div>
<div class="t" style="left:1298.5px;top:1057.0px;font-size:14.5px;color:#8e8e92;transform:scaleX(0.930);transform-origin:0 50%;">Deliver</div>
<svg style="left:591px;top:1039px;" width="18" height="17" viewBox="0 0 18 17"><path d="M2 2.500h14M3.500 0.800h11" stroke="#55555a" stroke-width="1"/><rect x="0.700" y="4.500" width="16.600" height="11.500" rx="1" fill="none" stroke="#77777b" stroke-width="1.300"/><path d="M3 14l3.500-4 2.500 2.500 2.500-3.500 3.500 5z" fill="#77777b"/><circle cx="5" cy="7.800" r="1" fill="#77777b"/></svg>
<svg style="left:708px;top:1039px;" width="26" height="16" viewBox="0 0 26 16"><path d="M0 4h7M2 8h5M0 12h7" stroke="#77777b" stroke-width="1.300"/><path d="M9.500 2.500l6-1v13l-6 1zM18 1.500h6l-1 13h-5z" fill="none" stroke="#77777b" stroke-width="1.300"/></svg>
<svg style="left:829px;top:1038px;" width="23" height="18" viewBox="0 0 23 18"><path d="M11.500 0v18" stroke="#77777b" stroke-width="1.300"/><path d="M1 4h8M14 4h5M4 9h5M14 9h8M1 14h8M14 14h8" stroke="#77777b" stroke-width="2.400"/></svg>
<svg style="left:950px;top:1038px;" width="22" height="19" viewBox="0 0 22 19"><path d="M8 17.500L17.500 4.500" stroke="#77777b" stroke-width="3" stroke-linecap="round"/><path d="M5 1l.7 1.800 1.800.7-1.800.7-.7 1.800-.7-1.800-1.800-.7 1.800-.7zM12.500 0.500l.5 1.200 1.200.5-1.200.5-.5 1.200-.5-1.200-1.200-.5 1.200-.5zM2.500 7.500l.5 1 1 .5-1 .5-.5 1-.5-1-1-.5 1-.5z" fill="#77777b"/></svg>
<svg style="left:1071px;top:1038px;" width="18" height="18" viewBox="0 0 18 18"><circle cx="9.0" cy="2.4" r="1.700" fill="#ff3a8a"/><circle cx="13.7" cy="4.3" r="1.700" fill="#c050ff"/><circle cx="15.6" cy="9.0" r="1.700" fill="#4a7aff"/><circle cx="13.7" cy="13.7" r="1.700" fill="#30d0e0"/><circle cx="9.0" cy="15.6" r="1.700" fill="#40e060"/><circle cx="4.3" cy="13.7" r="1.700" fill="#e8e040"/><circle cx="2.4" cy="9.0" r="1.700" fill="#ff9a30"/><circle cx="4.3" cy="4.3" r="1.700" fill="#ff4a3a"/></svg>
<svg style="left:1193px;top:1039px;" width="16" height="17" viewBox="0 0 16 17"><path d="M5.500 13.500V3l8.500-2.500V11" fill="none" stroke="#77777b" stroke-width="1.400"/><ellipse cx="3.500" cy="13.800" rx="2.700" ry="2.200" fill="#77777b"/><ellipse cx="12" cy="11.300" rx="2.700" ry="2.200" fill="#77777b"/></svg>
<svg style="left:1310px;top:1038px;" width="20" height="19" viewBox="0 0 20 19"><path d="M18.500 0.500c-5 0-9 3-11.500 8l3.500 3.500c5-2.500 8-6.500 8-11.500z" fill="none" stroke="#77777b" stroke-width="1.300"/><circle cx="13" cy="6" r="1.600" fill="none" stroke="#77777b" stroke-width="1.100"/><path d="M7 8.500l-4 .5-2 3 4 .5M10.500 12l-.5 4-3 2-.5-4M4.500 13.500l-3 4.500" fill="none" stroke="#77777b" stroke-width="1.200"/></svg>
<svg style="left:1829px;top:1049px;" width="15" height="14" viewBox="0 0 15 14"><path d="M7.500 0.500L0.500 7h2v6.500h3.500v-4h3v4h3.500V7h2z" fill="#b0b0b4"/></svg>
<svg style="left:1878px;top:1049px;" width="15" height="15" viewBox="0 0 15 15"><rect x="6.300" y="-0.200" width="2.400" height="3.400" fill="#a0a0a4" transform="rotate(0 7.500 7.500)"/><rect x="6.300" y="-0.200" width="2.400" height="3.400" fill="#a0a0a4" transform="rotate(45 7.500 7.500)"/><rect x="6.300" y="-0.200" width="2.400" height="3.400" fill="#a0a0a4" transform="rotate(90 7.500 7.500)"/><rect x="6.300" y="-0.200" width="2.400" height="3.400" fill="#a0a0a4" transform="rotate(135 7.500 7.500)"/><rect x="6.300" y="-0.200" width="2.400" height="3.400" fill="#a0a0a4" transform="rotate(180 7.500 7.500)"/><rect x="6.300" y="-0.200" width="2.400" height="3.400" fill="#a0a0a4" transform="rotate(225 7.500 7.500)"/><rect x="6.300" y="-0.200" width="2.400" height="3.400" fill="#a0a0a4" transform="rotate(270 7.500 7.500)"/><rect x="6.300" y="-0.200" width="2.400" height="3.400" fill="#a0a0a4" transform="rotate(315 7.500 7.500)"/><circle cx="7.500" cy="7.500" r="4.200" fill="none" stroke="#a0a0a4" stroke-width="2.200"/></svg>
</div></body>
</html>
